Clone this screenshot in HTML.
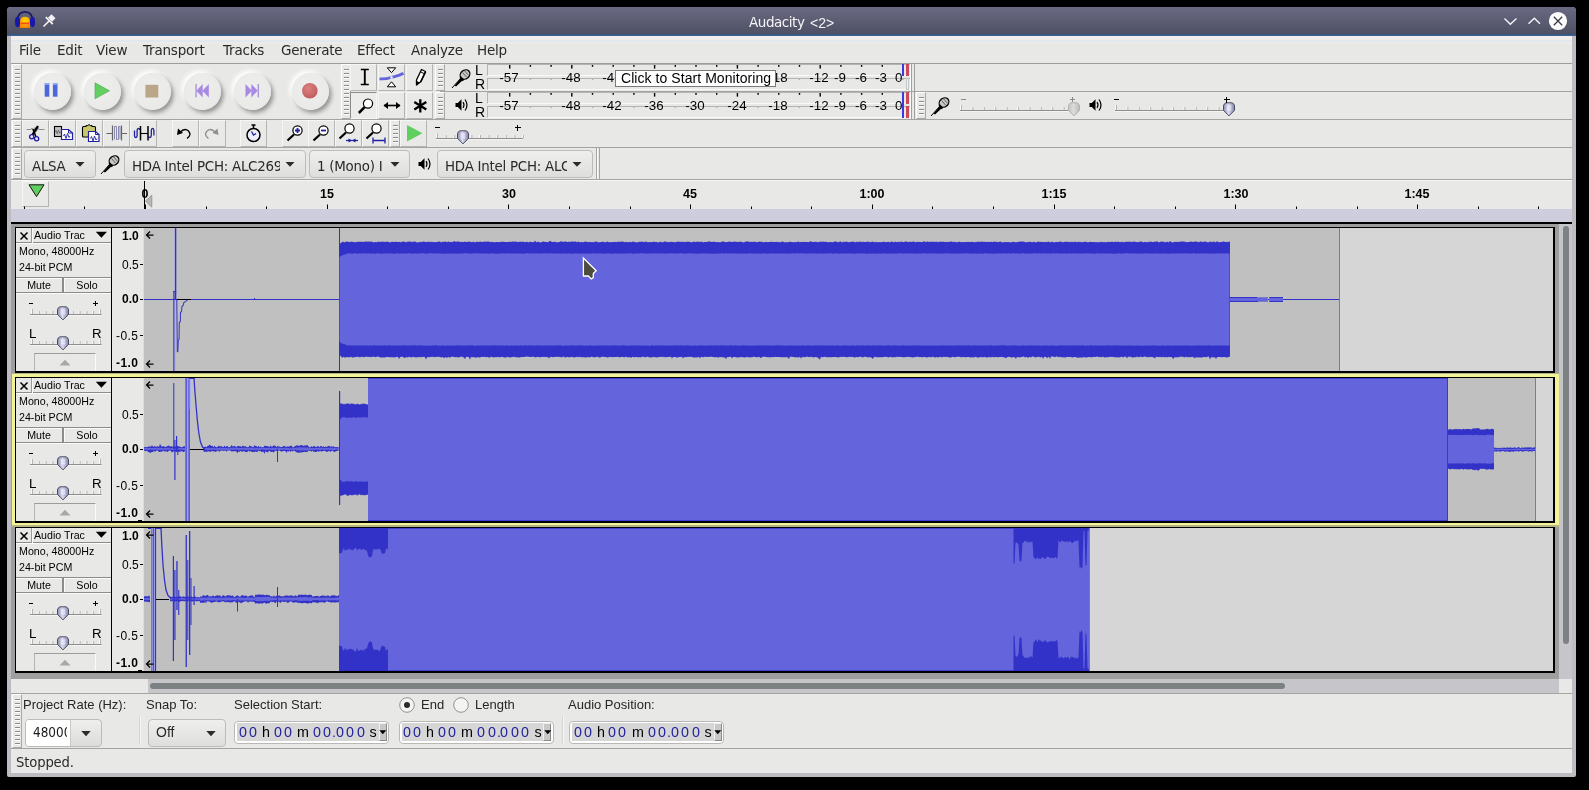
<!DOCTYPE html>
<html><head><meta charset="utf-8"><title>Audacity</title>
<style>
html,body{margin:0;padding:0;background:#000;}
body{width:1589px;height:790px;position:relative;overflow:hidden;font-family:"Liberation Sans",sans-serif;color:#000;}
div,span,svg{position:absolute;box-sizing:border-box;}
span{white-space:nowrap;line-height:1;will-change:transform;}
.dv{font-family:"DejaVu Sans","Liberation Sans",sans-serif;}
.dvc{font-family:"DejaVu Sans Condensed","DejaVu Sans","Liberation Sans",sans-serif;}

.grab{background:repeating-linear-gradient(to bottom,transparent 0,transparent 2px,#8c8c8c 2px,#8c8c8c 3px,#fff 3px,#fff 4px);}
.tb{background:#e9e9e7;border:1px solid #b4b4b2;border-top-color:#f6f6f4;border-left-color:#f6f6f4;}
.combo{border:1px solid #bcbcba;border-radius:4px;background:linear-gradient(#efefed,#dededc);}
.cbtn{border-radius:50%;background:radial-gradient(circle at 42% 42%,#eeeeec 0,#eaeae8 65%,#e0e0de 100%);box-shadow:2.500px 3px 4px rgba(0,0,0,.36),-2.500px -2.500px 4px rgba(255,255,255,.98);}

</style></head><body>
<div style="left:7px;top:7px;width:1569px;height:770px;background:#bcbcc2;border-radius:4px 4px 2px 2px;"></div><div style="left:7px;top:7px;width:1569px;height:27px;background:linear-gradient(#6a6a82,#4e5064);border-radius:4px 4px 0 0;"></div><div style="left:7px;top:33.5px;width:1569px;height:2.5px;background:linear-gradient(#34507c,#41669a);"></div><div style="left:11px;top:36px;width:1561px;height:737px;background:#e8e8e6;"></div><div style="left:11px;top:36px;width:1561px;height:3.5px;background:#f1eeeb;"></div><div style="left:11px;top:39.5px;width:1561px;height:2.6px;background:#dde8f0;"></div><div style="left:11px;top:42.1px;width:1561px;height:1.9px;background:#eeebe7;"></div><span class="dv" style="left:749px;top:16.3px;font-size:13.5px;color:#f4f4f6;letter-spacing:-0.45px;">Audacity</span><span style="left:809.5px;top:15.8px;font-size:14px;color:#f4f4f6;">&lt;2&gt;</span><span class="dv" style="left:19px;top:44px;font-size:13.5px;color:#2a2a2a;letter-spacing:-0.2px;">File</span><span class="dv" style="left:57px;top:44px;font-size:13.5px;color:#2a2a2a;letter-spacing:-0.2px;">Edit</span><span class="dv" style="left:96px;top:44px;font-size:13.5px;color:#2a2a2a;letter-spacing:-0.2px;">View</span><span class="dv" style="left:143px;top:44px;font-size:13.5px;color:#2a2a2a;letter-spacing:-0.2px;">Transport</span><span class="dv" style="left:223px;top:44px;font-size:13.5px;color:#2a2a2a;letter-spacing:-0.2px;">Tracks</span><span class="dv" style="left:281px;top:44px;font-size:13.5px;color:#2a2a2a;letter-spacing:-0.2px;">Generate</span><span class="dv" style="left:357px;top:44px;font-size:13.5px;color:#2a2a2a;letter-spacing:-0.2px;">Effect</span><span class="dv" style="left:411px;top:44px;font-size:13.5px;color:#2a2a2a;letter-spacing:-0.2px;">Analyze</span><span class="dv" style="left:477px;top:44px;font-size:13.5px;color:#2a2a2a;letter-spacing:-0.2px;">Help</span><div style="left:11px;top:62.7px;width:1561px;height:1.5px;background:#9c9c9a;"></div><div style="left:440px;top:91px;width:1132px;height:1px;background:#a4a4a2;"></div><div style="left:11px;top:119px;width:1561px;height:1px;background:#a4a4a2;"></div><div style="left:11px;top:147px;width:1561px;height:1px;background:#a4a4a2;"></div><div style="left:11px;top:179px;width:1561px;height:1px;background:#a4a4a2;"></div><div style="left:12px;top:64px;width:10px;height:55px;border:1px solid #a8a8a6;border-top-color:#fff;border-left-color:#fff;"><div class="grab" style="left:2px;top:2px;width:4.500px;height:49px"></div></div><div style="left:12px;top:120px;width:10px;height:27px;border:1px solid #a8a8a6;border-top-color:#fff;border-left-color:#fff;"><div class="grab" style="left:2px;top:2px;width:4.500px;height:21px"></div></div><div style="left:12px;top:148px;width:10px;height:31px;border:1px solid #a8a8a6;border-top-color:#fff;border-left-color:#fff;"><div class="grab" style="left:2px;top:2px;width:4.500px;height:25px"></div></div><div style="left:341px;top:64px;width:10px;height:55px;border:1px solid #a8a8a6;border-top-color:#fff;border-left-color:#fff;"><div class="grab" style="left:2px;top:2px;width:4.500px;height:49px"></div></div><div style="left:435px;top:64px;width:10px;height:27px;border:1px solid #a8a8a6;border-top-color:#fff;border-left-color:#fff;"><div class="grab" style="left:2px;top:2px;width:4.500px;height:21px"></div></div><div style="left:435px;top:92px;width:10px;height:27px;border:1px solid #a8a8a6;border-top-color:#fff;border-left-color:#fff;"><div class="grab" style="left:2px;top:2px;width:4.500px;height:21px"></div></div><div style="left:916px;top:92px;width:10px;height:27px;border:1px solid #a8a8a6;border-top-color:#fff;border-left-color:#fff;"><div class="grab" style="left:2px;top:2px;width:4.500px;height:21px"></div></div><div style="left:390px;top:120px;width:10px;height:27px;border:1px solid #a8a8a6;border-top-color:#fff;border-left-color:#fff;"><div class="grab" style="left:2px;top:2px;width:4.500px;height:21px"></div></div><div class="cbtn" style="left:34.0px;top:72.5px;width:37px;height:37px;"></div><svg style="left:40.1px;top:79px" width="24" height="24" viewBox="0 0 24 24" ><rect x="4.700" y="4.300" width="4.600" height="13.400" fill="#4a68dc"/><rect x="12.900" y="4.300" width="4.600" height="13.400" fill="#4a68dc"/><rect x="4.700" y="4.300" width="4.600" height="1.500" fill="#9ab4f4"/><rect x="12.900" y="4.300" width="4.600" height="1.500" fill="#9ab4f4"/></svg><div class="cbtn" style="left:84.0px;top:72.5px;width:37px;height:37px;"></div><svg style="left:90.1px;top:79px" width="24" height="24" viewBox="0 0 24 24" ><polygon points="5,3.800 5,19.800 19.500,11.800" fill="#62cf60" stroke="#4aa84a" stroke-width=".6"/></svg><div class="cbtn" style="left:134.0px;top:72.5px;width:37px;height:37px;"></div><svg style="left:140.1px;top:79px" width="24" height="24" viewBox="0 0 24 24" ><rect x="5.400" y="5.800" width="12.900" height="12.700" fill="#baa688"/></svg><div class="cbtn" style="left:184.0px;top:72.5px;width:37px;height:37px;"></div><svg style="left:190.1px;top:79px" width="24" height="24" viewBox="0 0 24 24" ><rect x="5.500" y="5" width="1.100" height="13.400" fill="#9a7cd8"/><polygon points="12.700,5 12.700,18.400 6.300,11.700" fill="#a88ae4"/><polygon points="18.800,5 18.800,18.400 12.400,11.700" fill="#a88ae4"/></svg><div class="cbtn" style="left:234.0px;top:72.5px;width:37px;height:37px;"></div><svg style="left:240.1px;top:79px" width="24" height="24" viewBox="0 0 24 24" ><rect x="17.700" y="5" width="1.100" height="13.400" fill="#9a7cd8"/><polygon points="11.300,5 11.300,18.400 17.700,11.700" fill="#a88ae4"/><polygon points="5.500,5 5.500,18.400 11.900,11.700" fill="#a88ae4"/></svg><div class="cbtn" style="left:292.0px;top:72.5px;width:37px;height:37px;"></div><svg style="left:298.1px;top:79px" width="24" height="24" viewBox="0 0 24 24" ><defs><radialGradient id="rg" cx="40%" cy="35%" r="70%"><stop offset="0" stop-color="#dc8080"/><stop offset="1" stop-color="#c05c5c"/></radialGradient></defs><circle cx="11.800" cy="11.700" r="7.800" fill="url(#rg)"/></svg><div class="tb" style="left:350.3px;top:64px;width:27px;height:27px;"></div><svg style="left:350.3px;top:64px" width="27" height="27" viewBox="0 0 27 27" ><path d="M10.800 5.500h8M10.800 20.500h8" stroke="#000" fill="none" stroke-width="1.300"/><path d="M14.800 5.500v15" stroke="#000" fill="none" stroke-width="1.900"/></svg><div class="tb" style="left:378.2px;top:64px;width:27px;height:27px;"></div><svg style="left:378.2px;top:64px" width="27" height="27" viewBox="0 0 27 27" ><path d="M1.500 14.800 C6 15.300 9 14.800 13 13.500 S20 12.300 25.500 9.300" stroke="#6464dc" stroke-width="2.800" fill="none"/><polygon points="9.300,3.800 17.700,3.800 13.500,8.700" fill="#fff" stroke="#000" stroke-width="1"/><polygon points="9.300,22.800 17.700,22.800 13.500,17.800" fill="#fff" stroke="#000" stroke-width="1"/><circle cx="13.500" cy="13.500" r="1.200" fill="#fff"/></svg><div class="tb" style="left:406px;top:64px;width:27px;height:27px;"></div><svg style="left:406px;top:64px" width="27" height="27" viewBox="0 0 27 27" ><polygon points="10.500,21 14.440,17.910 19.480,7.460 15.520,5.540 10.480,15.990" fill="#fff" stroke="#000" stroke-width="1.300" stroke-linejoin="round"/><polygon points="10.300,21.300 13.600,18.600 10.800,17" fill="#000"/><path d="M18.390 9.710L14.430 7.790" stroke="#000" fill="none" stroke-width="1"/><path d="M14.800 18L19.700 7.800" stroke="#000" fill="none" stroke-width="1.400"/></svg><div class="tb" style="left:350.3px;top:92px;width:27px;height:27px;border-color:#8c8c8a #f6f6f4 #f6f6f4 #8c8c8a;background:#ececea;"></div><svg style="left:350.3px;top:92px" width="27" height="27" viewBox="0 0 27 27" ><circle cx="18" cy="11.600" r="4.600" fill="#fff" stroke="#000" stroke-width="1.200"/><path d="M14.600 15.200l-5.800 5.800" stroke="#000" stroke-width="2.500" stroke-linecap="butt"/></svg><div class="tb" style="left:378.2px;top:92px;width:27px;height:27px;"></div><svg style="left:378.2px;top:92px" width="27" height="27" viewBox="0 0 27 27" ><path d="M6 13.500h16" stroke="#000" fill="none" stroke-width="1.600"/><polygon points="5.500,13.500 10,10 10,17" fill="#000"/><polygon points="22.500,13.500 18,10 18,17" fill="#000"/></svg><div class="tb" style="left:406px;top:92px;width:27px;height:27px;"></div><svg style="left:406px;top:92px" width="27" height="27" viewBox="0 0 27 27" ><path d="M14.300 7.200v13.300M8.300 10l12 7.500M20.300 10l-12 7.500" stroke="#000" fill="none" stroke-width="2.300"/></svg><div style="left:487px;top:64px;width:424px;height:12px;background:#e8e8e6;border-top:1px solid #b4b4b2;border-left:1px solid #b4b4b2;border-bottom:1px solid #fafaf8;"></div><div style="left:487px;top:78px;width:424px;height:12px;background:#e8e8e6;border-top:1px solid #b4b4b2;border-left:1px solid #b4b4b2;border-bottom:1px solid #fafaf8;"></div><svg style="left:487px;top:64px" width="424" height="27" viewBox="0 0 424 27" ><rect x="22.0" y="1" width="1.4" height="3.6" fill="#000"/><rect x="22.0" y="15" width="1.4" height="1" fill="#444" opacity=".35"/><rect x="42.7" y="1" width="1.4" height="1.8" fill="#000"/><rect x="42.7" y="15" width="1.4" height="1" fill="#444" opacity=".35"/><rect x="63.4" y="1" width="1.4" height="1.8" fill="#000"/><rect x="63.4" y="15" width="1.4" height="1" fill="#444" opacity=".35"/><rect x="84.1" y="1" width="1.4" height="3.6" fill="#000"/><rect x="84.1" y="15" width="1.4" height="1" fill="#444" opacity=".35"/><rect x="104.8" y="1" width="1.4" height="1.8" fill="#000"/><rect x="104.8" y="15" width="1.4" height="1" fill="#444" opacity=".35"/><rect x="125.5" y="1" width="1.4" height="1.8" fill="#000"/><rect x="125.5" y="15" width="1.4" height="1" fill="#444" opacity=".35"/><rect x="146.2" y="1" width="1.4" height="1.8" fill="#000"/><rect x="146.2" y="15" width="1.4" height="1" fill="#444" opacity=".35"/><rect x="166.9" y="1" width="1.4" height="3.6" fill="#000"/><rect x="166.9" y="15" width="1.4" height="1" fill="#444" opacity=".35"/><rect x="187.6" y="1" width="1.4" height="1.8" fill="#000"/><rect x="187.6" y="15" width="1.4" height="1" fill="#444" opacity=".35"/><rect x="208.3" y="1" width="1.4" height="1.8" fill="#000"/><rect x="208.3" y="15" width="1.4" height="1" fill="#444" opacity=".35"/><rect x="229.0" y="1" width="1.4" height="1.8" fill="#000"/><rect x="229.0" y="15" width="1.4" height="1" fill="#444" opacity=".35"/><rect x="249.7" y="1" width="1.4" height="3.6" fill="#000"/><rect x="249.7" y="15" width="1.4" height="1" fill="#444" opacity=".35"/><rect x="270.4" y="1" width="1.4" height="1.8" fill="#000"/><rect x="270.4" y="15" width="1.4" height="1" fill="#444" opacity=".35"/><rect x="291.1" y="1" width="1.4" height="1.8" fill="#000"/><rect x="291.1" y="15" width="1.4" height="1" fill="#444" opacity=".35"/><rect x="311.8" y="1" width="1.4" height="1.8" fill="#000"/><rect x="311.8" y="15" width="1.4" height="1" fill="#444" opacity=".35"/><rect x="332.5" y="1" width="1.4" height="3.6" fill="#000"/><rect x="332.5" y="15" width="1.4" height="1" fill="#444" opacity=".35"/><rect x="353.2" y="1" width="1.4" height="1.8" fill="#000"/><rect x="353.2" y="15" width="1.4" height="1" fill="#444" opacity=".35"/><rect x="373.9" y="1" width="1.4" height="1.8" fill="#000"/><rect x="373.9" y="15" width="1.4" height="1" fill="#444" opacity=".35"/><rect x="394.6" y="1" width="1.4" height="1.8" fill="#000"/><rect x="394.6" y="15" width="1.4" height="1" fill="#444" opacity=".35"/><rect x="415.3" y="1" width="1.4" height="3.6" fill="#000"/><rect x="415.3" y="15" width="1.4" height="1" fill="#444" opacity=".35"/></svg><span style="left:508.8px;top:71.1px;font-size:13.33px;transform:translateX(-50%);">-57</span><span style="left:570.9px;top:71.1px;font-size:13.33px;transform:translateX(-50%);">-48</span><span style="left:612.3000000000001px;top:71.1px;font-size:13.33px;transform:translateX(-50%);">-42</span><span style="left:653.7px;top:71.1px;font-size:13.33px;transform:translateX(-50%);">-36</span><span style="left:695.1px;top:71.1px;font-size:13.33px;transform:translateX(-50%);">-30</span><span style="left:736.5px;top:71.1px;font-size:13.33px;transform:translateX(-50%);">-24</span><span style="left:777.9px;top:71.1px;font-size:13.33px;transform:translateX(-50%);">-18</span><span style="left:819.3000000000001px;top:71.1px;font-size:13.33px;transform:translateX(-50%);">-12</span><span style="left:840.0px;top:71.1px;font-size:13.33px;transform:translateX(-50%);">-9</span><span style="left:860.7px;top:71.1px;font-size:13.33px;transform:translateX(-50%);">-6</span><span style="left:881.4px;top:71.1px;font-size:13.33px;transform:translateX(-50%);">-3</span><span style="left:895.2px;top:71.1px;font-size:13.33px;">0</span><span style="left:475px;top:62.8px;font-size:14px;">L</span><span style="left:474.5px;top:76.8px;font-size:14px;">R</span><div style="left:902px;top:64px;width:2px;height:12px;background:#3a3ae0;"></div><div style="left:906px;top:64px;width:3px;height:12px;background:#d04858;"></div><div style="left:906px;top:78px;width:3px;height:12px;background:#f4f4f4;border:1px solid #c0c8c8;"></div><div style="left:910px;top:64px;width:1px;height:27px;background:#fff;"></div><div style="left:911px;top:64px;width:1px;height:27px;background:#a0a09e;"></div><div style="left:487px;top:92px;width:424px;height:12px;background:#e8e8e6;border-top:1px solid #b4b4b2;border-left:1px solid #b4b4b2;border-bottom:1px solid #fafaf8;"></div><div style="left:487px;top:106px;width:424px;height:12px;background:#e8e8e6;border-top:1px solid #b4b4b2;border-left:1px solid #b4b4b2;border-bottom:1px solid #fafaf8;"></div><svg style="left:487px;top:92px" width="424" height="27" viewBox="0 0 424 27" ><rect x="22.0" y="1" width="1.4" height="3.6" fill="#000"/><rect x="22.0" y="15" width="1.4" height="1" fill="#444" opacity=".35"/><rect x="42.7" y="1" width="1.4" height="1.8" fill="#000"/><rect x="42.7" y="15" width="1.4" height="1" fill="#444" opacity=".35"/><rect x="63.4" y="1" width="1.4" height="1.8" fill="#000"/><rect x="63.4" y="15" width="1.4" height="1" fill="#444" opacity=".35"/><rect x="84.1" y="1" width="1.4" height="3.6" fill="#000"/><rect x="84.1" y="15" width="1.4" height="1" fill="#444" opacity=".35"/><rect x="104.8" y="1" width="1.4" height="1.8" fill="#000"/><rect x="104.8" y="15" width="1.4" height="1" fill="#444" opacity=".35"/><rect x="125.5" y="1" width="1.4" height="1.8" fill="#000"/><rect x="125.5" y="15" width="1.4" height="1" fill="#444" opacity=".35"/><rect x="146.2" y="1" width="1.4" height="1.8" fill="#000"/><rect x="146.2" y="15" width="1.4" height="1" fill="#444" opacity=".35"/><rect x="166.9" y="1" width="1.4" height="3.6" fill="#000"/><rect x="166.9" y="15" width="1.4" height="1" fill="#444" opacity=".35"/><rect x="187.6" y="1" width="1.4" height="1.8" fill="#000"/><rect x="187.6" y="15" width="1.4" height="1" fill="#444" opacity=".35"/><rect x="208.3" y="1" width="1.4" height="1.8" fill="#000"/><rect x="208.3" y="15" width="1.4" height="1" fill="#444" opacity=".35"/><rect x="229.0" y="1" width="1.4" height="1.8" fill="#000"/><rect x="229.0" y="15" width="1.4" height="1" fill="#444" opacity=".35"/><rect x="249.7" y="1" width="1.4" height="3.6" fill="#000"/><rect x="249.7" y="15" width="1.4" height="1" fill="#444" opacity=".35"/><rect x="270.4" y="1" width="1.4" height="1.8" fill="#000"/><rect x="270.4" y="15" width="1.4" height="1" fill="#444" opacity=".35"/><rect x="291.1" y="1" width="1.4" height="1.8" fill="#000"/><rect x="291.1" y="15" width="1.4" height="1" fill="#444" opacity=".35"/><rect x="311.8" y="1" width="1.4" height="1.8" fill="#000"/><rect x="311.8" y="15" width="1.4" height="1" fill="#444" opacity=".35"/><rect x="332.5" y="1" width="1.4" height="3.6" fill="#000"/><rect x="332.5" y="15" width="1.4" height="1" fill="#444" opacity=".35"/><rect x="353.2" y="1" width="1.4" height="1.8" fill="#000"/><rect x="353.2" y="15" width="1.4" height="1" fill="#444" opacity=".35"/><rect x="373.9" y="1" width="1.4" height="1.8" fill="#000"/><rect x="373.9" y="15" width="1.4" height="1" fill="#444" opacity=".35"/><rect x="394.6" y="1" width="1.4" height="1.8" fill="#000"/><rect x="394.6" y="15" width="1.4" height="1" fill="#444" opacity=".35"/><rect x="415.3" y="1" width="1.4" height="3.6" fill="#000"/><rect x="415.3" y="15" width="1.4" height="1" fill="#444" opacity=".35"/></svg><span style="left:508.8px;top:99.1px;font-size:13.33px;transform:translateX(-50%);">-57</span><span style="left:570.9px;top:99.1px;font-size:13.33px;transform:translateX(-50%);">-48</span><span style="left:612.3000000000001px;top:99.1px;font-size:13.33px;transform:translateX(-50%);">-42</span><span style="left:653.7px;top:99.1px;font-size:13.33px;transform:translateX(-50%);">-36</span><span style="left:695.1px;top:99.1px;font-size:13.33px;transform:translateX(-50%);">-30</span><span style="left:736.5px;top:99.1px;font-size:13.33px;transform:translateX(-50%);">-24</span><span style="left:777.9px;top:99.1px;font-size:13.33px;transform:translateX(-50%);">-18</span><span style="left:819.3000000000001px;top:99.1px;font-size:13.33px;transform:translateX(-50%);">-12</span><span style="left:840.0px;top:99.1px;font-size:13.33px;transform:translateX(-50%);">-9</span><span style="left:860.7px;top:99.1px;font-size:13.33px;transform:translateX(-50%);">-6</span><span style="left:881.4px;top:99.1px;font-size:13.33px;transform:translateX(-50%);">-3</span><span style="left:895.2px;top:99.1px;font-size:13.33px;">0</span><span style="left:475px;top:90.8px;font-size:14px;">L</span><span style="left:474.5px;top:104.8px;font-size:14px;">R</span><div style="left:902px;top:92px;width:2px;height:26px;background:#3a3ae0;"></div><div style="left:906px;top:92px;width:3px;height:12px;background:#d04858;"></div><div style="left:906px;top:106px;width:3px;height:12px;background:#d04858;"></div><div style="left:910px;top:92px;width:1px;height:27px;background:#fff;"></div><div style="left:911px;top:92px;width:1px;height:27px;background:#a0a09e;"></div><div style="left:914px;top:64px;width:1px;height:56px;background:#a0a09e;"></div><svg style="left:450.5px;top:67.5px" width="20" height="21" viewBox="0 0 20 21" ><g transform="scale(1.0)"><path d="M1 20 L9.5 10.5" stroke="#000" stroke-width="1" fill="none"/><path d="M3.5 17.5 L10.5 9.5 L12.5 11.5 L5 18.5z" fill="#000"/><ellipse cx="14" cy="6.5" rx="5.2" ry="4.3" transform="rotate(-42 14 6.5)" fill="#c8c8c8" stroke="#000" stroke-width="1.3"/><path d="M11.5 4.5l4 4.5M13.5 2.8l4 4.5" stroke="#444" stroke-width=".8"/><path d="M9.3 9.3l3.2 3.2" stroke="#000" stroke-width="2.2"/></g></svg><svg style="left:454.5px;top:98.3px" width="14" height="15" viewBox="0 0 14 15" ><path d="M0.5 5h2.3l3.7-3.7v11.4l-3.7-3.7h-2.3z" fill="#000"/><path d="M8 4.2q2 2.8 0 5.600" stroke="#000" stroke-width="1.2" fill="none"/><path d="M10 1.5q4 5.500 0 11" stroke="#000" stroke-width="1.2" fill="none"/></svg><div style="left:615px;top:69.5px;width:161px;height:17.5px;background:#fff;border:1px solid #7a7a7a;"></div><span style="left:620.5px;top:70.8px;font-size:14px;letter-spacing:.06px;">Click to Start Monitoring</span><svg width="0" height="0" style="left:0;top:0"><defs><linearGradient id="tg" x1="0" x2="1" y1="0" y2="0"><stop offset="0" stop-color="#8e8eb2"/><stop offset=".45" stop-color="#dadaf0"/><stop offset="1" stop-color="#8686aa"/></linearGradient><linearGradient id="tgd" x1="0" x2="1" y1="0" y2="0"><stop offset="0" stop-color="#c4c4c4"/><stop offset=".45" stop-color="#dcdcdc"/><stop offset="1" stop-color="#bcbcbc"/></linearGradient></defs></svg><svg style="left:930px;top:96px" width="20" height="21" viewBox="0 0 20 21" ><g transform="scale(1.0)"><path d="M1 20 L9.5 10.5" stroke="#000" stroke-width="1" fill="none"/><path d="M3.5 17.5 L10.5 9.5 L12.5 11.5 L5 18.5z" fill="#000"/><ellipse cx="14" cy="6.5" rx="5.2" ry="4.3" transform="rotate(-42 14 6.5)" fill="#c8c8c8" stroke="#000" stroke-width="1.3"/><path d="M11.5 4.5l4 4.5M13.5 2.8l4 4.5" stroke="#444" stroke-width=".8"/><path d="M9.3 9.3l3.2 3.2" stroke="#000" stroke-width="2.2"/></g></svg><svg style="left:960px;top:102px" width="117" height="12" viewBox="0 0 117 12" ><rect x="0" y="8" width="115" height="1" fill="#8e8e8c"/><rect x="0" y="9" width="115" height="1" fill="#f4f4f2"/><rect x="0.0" y="3" width="1" height="5" fill="#fbfbf9"/><rect x="1.0" y="3" width="1" height="5" fill="#b4b4b2"/><rect x="11.4" y="5" width="1" height="3" fill="#fbfbf9"/><rect x="12.4" y="5" width="1" height="3" fill="#b4b4b2"/><rect x="22.8" y="5" width="1" height="3" fill="#fbfbf9"/><rect x="23.8" y="5" width="1" height="3" fill="#b4b4b2"/><rect x="34.2" y="5" width="1" height="3" fill="#fbfbf9"/><rect x="35.2" y="5" width="1" height="3" fill="#b4b4b2"/><rect x="45.6" y="5" width="1" height="3" fill="#fbfbf9"/><rect x="46.6" y="5" width="1" height="3" fill="#b4b4b2"/><rect x="57.0" y="5" width="1" height="3" fill="#fbfbf9"/><rect x="58.0" y="5" width="1" height="3" fill="#b4b4b2"/><rect x="68.4" y="5" width="1" height="3" fill="#fbfbf9"/><rect x="69.4" y="5" width="1" height="3" fill="#b4b4b2"/><rect x="79.8" y="5" width="1" height="3" fill="#fbfbf9"/><rect x="80.8" y="5" width="1" height="3" fill="#b4b4b2"/><rect x="91.2" y="5" width="1" height="3" fill="#fbfbf9"/><rect x="92.2" y="5" width="1" height="3" fill="#b4b4b2"/><rect x="102.6" y="5" width="1" height="3" fill="#fbfbf9"/><rect x="103.6" y="5" width="1" height="3" fill="#b4b4b2"/><rect x="114.0" y="5" width="1" height="3" fill="#fbfbf9"/><rect x="115.0" y="5" width="1" height="3" fill="#b4b4b2"/></svg><svg style="left:1068px;top:102px" width="12" height="15" viewBox="0 0 12 15" ><path d="M3 .800h6q2.500 1.200 2.500 3v4.600l-5.500 5.400-5.500-5.400v-4.600q0-1.800 2.500-3z" fill="url(#tgd)" stroke="#b0b0b0" stroke-width="1"/></svg><div style="left:961px;top:99px;width:5px;height:1px;background:#8a8a8a;"></div><div style="left:1070px;top:99px;width:5px;height:1px;background:#8a8a8a;"></div><div style="left:1072px;top:97px;width:1px;height:5px;background:#8a8a8a;"></div><svg style="left:1089px;top:97.5px" width="14" height="15" viewBox="0 0 14 15" ><path d="M0.5 5h2.3l3.7-3.7v11.4l-3.7-3.7h-2.3z" fill="#000"/><path d="M8 4.2q2 2.8 0 5.600" stroke="#000" stroke-width="1.2" fill="none"/><path d="M10 1.5q4 5.500 0 11" stroke="#000" stroke-width="1.2" fill="none"/></svg><svg style="left:1115px;top:102px" width="117" height="12" viewBox="0 0 117 12" ><rect x="0" y="8" width="115" height="1" fill="#8e8e8c"/><rect x="0" y="9" width="115" height="1" fill="#f4f4f2"/><rect x="0.0" y="3" width="1" height="5" fill="#fbfbf9"/><rect x="1.0" y="3" width="1" height="5" fill="#b4b4b2"/><rect x="11.4" y="5" width="1" height="3" fill="#fbfbf9"/><rect x="12.4" y="5" width="1" height="3" fill="#b4b4b2"/><rect x="22.8" y="5" width="1" height="3" fill="#fbfbf9"/><rect x="23.8" y="5" width="1" height="3" fill="#b4b4b2"/><rect x="34.2" y="5" width="1" height="3" fill="#fbfbf9"/><rect x="35.2" y="5" width="1" height="3" fill="#b4b4b2"/><rect x="45.6" y="5" width="1" height="3" fill="#fbfbf9"/><rect x="46.6" y="5" width="1" height="3" fill="#b4b4b2"/><rect x="57.0" y="5" width="1" height="3" fill="#fbfbf9"/><rect x="58.0" y="5" width="1" height="3" fill="#b4b4b2"/><rect x="68.4" y="5" width="1" height="3" fill="#fbfbf9"/><rect x="69.4" y="5" width="1" height="3" fill="#b4b4b2"/><rect x="79.8" y="5" width="1" height="3" fill="#fbfbf9"/><rect x="80.8" y="5" width="1" height="3" fill="#b4b4b2"/><rect x="91.2" y="5" width="1" height="3" fill="#fbfbf9"/><rect x="92.2" y="5" width="1" height="3" fill="#b4b4b2"/><rect x="102.6" y="5" width="1" height="3" fill="#fbfbf9"/><rect x="103.6" y="5" width="1" height="3" fill="#b4b4b2"/><rect x="114.0" y="5" width="1" height="3" fill="#fbfbf9"/><rect x="115.0" y="5" width="1" height="3" fill="#b4b4b2"/></svg><svg style="left:1223px;top:102px" width="12" height="15" viewBox="0 0 12 15" ><path d="M3 .800h6q2.500 1.200 2.500 3v4.600l-5.500 5.400-5.500-5.400v-4.600q0-1.800 2.500-3z" fill="url(#tg)" stroke="#4a4a62" stroke-width="1"/><path d="M3.700 4.200h4.600M3.700 6h4.600M3.700 7.800h4.600" stroke="#f6f6ff" stroke-width=".9"/></svg><div style="left:1114px;top:99px;width:5px;height:1.2px;background:#000;"></div><div style="left:1224px;top:99px;width:5.5px;height:1.1px;background:#000;"></div><div style="left:1226px;top:97px;width:1.1px;height:5.5px;background:#000;"></div><div class="tb" style="left:22px;top:120px;width:27px;height:27px;"></div><svg style="left:22px;top:120px" width="27" height="27" viewBox="0 0 27 27" ><path d="M4.500 9.500h4.500l1-1.500 1.500 3.500 1.500-4 1.500 4 1.500-3.500 1 1.500h5.500" stroke="#777" stroke-width=".8" fill="none"/><path d="M16 6L10.300 15.200" stroke="#000" stroke-width="2.300"/><path d="M11 9l3 8" stroke="#000" stroke-width="1.500"/><circle cx="9.700" cy="16.800" r="2.100" fill="#e8e8f4" stroke="#2020a0" stroke-width="1.300"/><circle cx="14.600" cy="18.800" r="2.100" fill="#e8e8f4" stroke="#2020a0" stroke-width="1.300"/></svg><div class="tb" style="left:49px;top:120px;width:27px;height:27px;"></div><svg style="left:49px;top:120px" width="27" height="27" viewBox="0 0 27 27" ><rect x="5.500" y="6.500" width="7" height="10" fill="#c4c4c4" stroke="#000" stroke-width="1.100"/><path d="M6.3 12l0.8 -1.6l1.2000000000000002 3.6l1.2000000000000002 -4.0l1.2000000000000002 3.2l0.8 -1.2000000000000002" stroke="#666" stroke-width=".9" fill="none"/><path d="M12.500 9.500h7l4 3.500v6.500h-11z" fill="#fff" stroke="#2020a0" stroke-width="1.200"/><path d="M19.500 9.500v3.500h4" fill="none" stroke="#2020a0" stroke-width="1"/><path d="M14.5 16l1 -2l1.5 4.5l1.5 -5l1.5 4l1 -1.5" stroke="#2020a0" stroke-width=".9" fill="none"/></svg><div class="tb" style="left:76px;top:120px;width:27px;height:27px;"></div><svg style="left:76px;top:120px" width="27" height="27" viewBox="0 0 27 27" ><rect x="6.500" y="6.500" width="13" height="10.500" rx="1" fill="#c8c86a" stroke="#000" stroke-width="1.100"/><path d="M10 7v-1.500h1.800q1.200-2 2.400 0h1.800v1.500" fill="#c8c86a" stroke="#000" stroke-width="1"/><path d="M12.500 11.500h7l3.500 3v7h-10.500z" fill="#fff" stroke="#2020a0" stroke-width="1.200"/><path d="M19.500 11.500v3h3.500" fill="none" stroke="#2020a0" stroke-width="1"/><path d="M14.5 18.5l1 -2l1.5 4.5l1.5 -5l1.5 4l1 -1.5" stroke="#2020a0" stroke-width=".9" fill="none"/></svg><div class="tb" style="left:103px;top:120px;width:27px;height:27px;"></div><svg style="left:103px;top:120px" width="27" height="27" viewBox="0 0 27 27" ><path d="M3.500 13.500h6M19 13.500h5" stroke="#666" stroke-width="1"/><path d="M9.500 5.500v15M18.500 5.500v15" stroke="#666" stroke-width="1.200"/><path d="M11.500 19.500V6.500H13.500V19.500H15.500V6.500H17V19" stroke="#8080ac" stroke-width=".9" fill="none"/></svg><div class="tb" style="left:130px;top:120px;width:27px;height:27px;"></div><svg style="left:130px;top:120px" width="27" height="27" viewBox="0 0 27 27" ><path d="M4.500 10.500v5q0 2 1.300 2t1.300-2v-5q0-2 1.300-2t1.300 1.500" stroke="#2020a0" stroke-width="1.300" fill="none"/><path d="M18.800 16.500q0 1 1.200 1t1.300-2v-5q0-2 1.300-2t1.300 2v5" stroke="#2020a0" stroke-width="1.300" fill="none"/><path d="M10.500 6v14.500M18 6v14.500" stroke="#000" stroke-width="1.500"/><path d="M10.500 13.500h7.500" stroke="#000" stroke-width="1.100"/></svg><div class="tb" style="left:172px;top:120px;width:27px;height:27px;"></div><svg style="left:172px;top:120px" width="27" height="27" viewBox="0 0 27 27" ><path d="M8 12.500q4.500-5 8.500-1.500q3.500 4-1.500 7.500" stroke="#000" stroke-width="1.300" fill="none"/><polygon points="5,15 6,8.500 11,13" fill="#000"/></svg><div class="tb" style="left:199px;top:120px;width:27px;height:27px;"></div><svg style="left:199px;top:120px" width="27" height="27" viewBox="0 0 27 27" ><g transform="translate(-2.500,0)"><path d="M19 12.500q-4.500-5-8.500-1.500q-3.500 4 1.500 7.500" stroke="#909090" stroke-width="1.300" fill="none"/><polygon points="22,15 21,8.500 16,13" fill="#909090"/></g></svg><div class="tb" style="left:240px;top:120px;width:27px;height:27px;"></div><svg style="left:240px;top:120px" width="27" height="27" viewBox="0 0 27 27" ><circle cx="13.500" cy="15" r="6.500" fill="#eeeefa" stroke="#000" stroke-width="1.500"/><path d="M13.500 8.500v-3M11.500 5h4" stroke="#000" stroke-width="1.600"/><path d="M11.500 11.500l2 3.500 2.500-1.500" stroke="#2020a0" stroke-width="1.300" fill="none"/></svg><div class="tb" style="left:281.5px;top:120px;width:27px;height:27px;"></div><svg style="left:281.5px;top:120px" width="27" height="27" viewBox="0 0 27 27" ><g transform="translate(-2,1)"><circle cx="17.500" cy="9.500" r="4.600" fill="#fff" stroke="#000" stroke-width="1.200"/><path d="M14 13.500l-6.500 6" stroke="#000" stroke-width="2.300" stroke-linecap="butt"/><path d="M15 9.500h5M17.500 7v5" stroke="#2020a0" stroke-width="1.800"/></g></svg><div class="tb" style="left:308.2px;top:120px;width:27px;height:27px;"></div><svg style="left:308.2px;top:120px" width="27" height="27" viewBox="0 0 27 27" ><g transform="translate(-2,1)"><circle cx="17.500" cy="9.500" r="4.600" fill="#fff" stroke="#000" stroke-width="1.200"/><path d="M14 13.500l-6.500 6" stroke="#000" stroke-width="2.300" stroke-linecap="butt"/><path d="M15 9.500h5" stroke="#2020a0" stroke-width="1.800"/></g></svg><div class="tb" style="left:334.9px;top:120px;width:27px;height:27px;"></div><svg style="left:334.9px;top:120px" width="27" height="27" viewBox="0 0 27 27" ><g transform="translate(0,0)"><circle cx="14.500" cy="8.500" r="4.600" fill="#fff" stroke="#000" stroke-width="1.200"/><path d="M11 12.500l-6.500 6" stroke="#000" stroke-width="2.300"/><path d="M11 20.500h12" stroke="#2020a0" stroke-width="1.200"/><polygon points="17,20.500 13.500,18.500 13.500,22.500" fill="#2020a0"/><polygon points="17,20.500 20.500,18.500 20.500,22.500" fill="#2020a0"/></g></svg><div class="tb" style="left:361.6px;top:120px;width:27px;height:27px;"></div><svg style="left:361.6px;top:120px" width="27" height="27" viewBox="0 0 27 27" ><g transform="translate(0,0)"><circle cx="14.500" cy="8.500" r="4.600" fill="#fff" stroke="#000" stroke-width="1.200"/><path d="M11 12.500l-6.500 6" stroke="#000" stroke-width="2.300"/><path d="M11 20.500h12M11 17.500v6M23 17.500v6" stroke="#2020a0" stroke-width="1.300"/></g></svg><div class="tb" style="left:400px;top:120px;width:27px;height:27px;"></div><svg style="left:400px;top:120px" width="27" height="27" viewBox="0 0 27 27" ><polygon points="7,5 7,21.500 22.500,13.200" fill="#5fcf5f"/></svg><svg style="left:436px;top:130px" width="89" height="12" viewBox="0 0 89 12" ><rect x="0" y="8" width="87" height="1" fill="#8e8e8c"/><rect x="0" y="9" width="87" height="1" fill="#f4f4f2"/><rect x="0.0" y="3" width="1" height="5" fill="#fbfbf9"/><rect x="1.0" y="3" width="1" height="5" fill="#b4b4b2"/><rect x="8.6" y="5" width="1" height="3" fill="#fbfbf9"/><rect x="9.6" y="5" width="1" height="3" fill="#b4b4b2"/><rect x="17.2" y="5" width="1" height="3" fill="#fbfbf9"/><rect x="18.2" y="5" width="1" height="3" fill="#b4b4b2"/><rect x="25.8" y="5" width="1" height="3" fill="#fbfbf9"/><rect x="26.8" y="5" width="1" height="3" fill="#b4b4b2"/><rect x="34.4" y="5" width="1" height="3" fill="#fbfbf9"/><rect x="35.4" y="5" width="1" height="3" fill="#b4b4b2"/><rect x="43.0" y="5" width="1" height="3" fill="#fbfbf9"/><rect x="44.0" y="5" width="1" height="3" fill="#b4b4b2"/><rect x="51.6" y="5" width="1" height="3" fill="#fbfbf9"/><rect x="52.6" y="5" width="1" height="3" fill="#b4b4b2"/><rect x="60.2" y="5" width="1" height="3" fill="#fbfbf9"/><rect x="61.2" y="5" width="1" height="3" fill="#b4b4b2"/><rect x="68.8" y="5" width="1" height="3" fill="#fbfbf9"/><rect x="69.8" y="5" width="1" height="3" fill="#b4b4b2"/><rect x="77.4" y="5" width="1" height="3" fill="#fbfbf9"/><rect x="78.4" y="5" width="1" height="3" fill="#b4b4b2"/><rect x="86.0" y="5" width="1" height="3" fill="#fbfbf9"/><rect x="87.0" y="5" width="1" height="3" fill="#b4b4b2"/></svg><svg style="left:457px;top:130px" width="12" height="15" viewBox="0 0 12 15" ><path d="M3 .800h6q2.500 1.200 2.500 3v4.600l-5.500 5.400-5.500-5.400v-4.600q0-1.800 2.500-3z" fill="url(#tg)" stroke="#4a4a62" stroke-width="1"/><path d="M3.700 4.200h4.600M3.700 6h4.600M3.700 7.800h4.600" stroke="#f6f6ff" stroke-width=".9"/></svg><div style="left:435px;top:127px;width:5px;height:1px;background:#000;"></div><div style="left:514.5px;top:127px;width:6px;height:1px;background:#000;"></div><div style="left:517px;top:124.5px;width:1px;height:6px;background:#000;"></div><div class="combo" style="left:24px;top:150px;width:72px;height:27.5px;"></div><div style="left:32.3px;top:150px;width:40px;height:27.5px;overflow:hidden"><span class="dv" style="left:0;top:8.6px;font-size:13.4px;line-height:1.160;color:#2a2a2a;letter-spacing:-0.250px">ALSA</span></div><svg style="left:74.5px;top:162.25px" width="10" height="6" viewBox="0 0 10 6" ><polygon points="0.500,0 9.500,0 5,4.800" fill="#2c2c2c"/></svg><svg style="left:100px;top:154px" width="20" height="21" viewBox="0 0 20 21" ><g transform="scale(1.0)"><path d="M1 20 L9.5 10.5" stroke="#000" stroke-width="1" fill="none"/><path d="M3.5 17.5 L10.5 9.5 L12.5 11.5 L5 18.5z" fill="#000"/><ellipse cx="14" cy="6.5" rx="5.2" ry="4.3" transform="rotate(-42 14 6.5)" fill="#c8c8c8" stroke="#000" stroke-width="1.3"/><path d="M11.5 4.5l4 4.5M13.5 2.8l4 4.5" stroke="#444" stroke-width=".8"/><path d="M9.3 9.3l3.2 3.2" stroke="#000" stroke-width="2.2"/></g></svg><div class="combo" style="left:123.5px;top:150px;width:182px;height:27.5px;"></div><div style="left:131.8px;top:150px;width:148px;height:27.5px;overflow:hidden"><span class="dv" style="left:0;top:8.6px;font-size:13.4px;line-height:1.160;color:#2a2a2a;letter-spacing:-0.250px">HDA Intel PCH: ALC269</span></div><svg style="left:285px;top:162.25px" width="10" height="6" viewBox="0 0 10 6" ><polygon points="0.500,0 9.500,0 5,4.800" fill="#2c2c2c"/></svg><div class="combo" style="left:308.5px;top:150px;width:101px;height:27.5px;"></div><div style="left:316.8px;top:150px;width:66.3px;height:27.5px;overflow:hidden"><span class="dv" style="left:0;top:8.6px;font-size:13.4px;line-height:1.160;color:#2a2a2a;letter-spacing:-0.250px">1 (Mono) Input Channel</span></div><svg style="left:389.5px;top:162.25px" width="10" height="6" viewBox="0 0 10 6" ><polygon points="0.500,0 9.500,0 5,4.800" fill="#2c2c2c"/></svg><svg style="left:417.5px;top:156.5px" width="14" height="15" viewBox="0 0 14 15" ><path d="M0.5 5h2.3l3.7-3.7v11.4l-3.7-3.7h-2.3z" fill="#000"/><path d="M8 4.2q2 2.8 0 5.600" stroke="#000" stroke-width="1.2" fill="none"/><path d="M10 1.5q4 5.500 0 11" stroke="#000" stroke-width="1.2" fill="none"/></svg><div class="combo" style="left:437px;top:150px;width:155.5px;height:27.5px;"></div><div style="left:445.3px;top:150px;width:121.5px;height:27.5px;overflow:hidden"><span class="dv" style="left:0;top:8.6px;font-size:13.4px;line-height:1.160;color:#2a2a2a;letter-spacing:-0.250px">HDA Intel PCH: ALC269</span></div><svg style="left:571.5px;top:162.25px" width="10" height="6" viewBox="0 0 10 6" ><polygon points="0.500,0 9.500,0 5,4.800" fill="#2c2c2c"/></svg><div style="left:596px;top:148px;width:1px;height:31px;background:#a4a4a2;"></div><div style="left:597px;top:148px;width:1px;height:31px;background:#fbfbf9;"></div><div style="left:599px;top:148px;width:1px;height:31px;background:#a4a4a2;"></div><div style="left:11px;top:180px;width:1561px;height:29px;background:#e8e8e6;"></div><div style="left:11px;top:180px;width:1561px;height:1px;background:#f6f6f4;"></div><div class="tb" style="left:22px;top:181px;width:27px;height:26px;"></div><svg style="left:22px;top:181px" width="27" height="26" viewBox="0 0 27 26" ><polygon points="7,3.800 22,3.800 14.500,15.600" fill="#5fcf5f" stroke="#111" stroke-width="1"/></svg><svg style="left:11px;top:181px" width="1561" height="28" viewBox="0 0 1561 28" ><rect x="13" y="25.5" width="1" height="2.5" fill="#000"/><rect x="73" y="25.5" width="1" height="2.5" fill="#000"/><rect x="134" y="23.5" width="1" height="4.5" fill="#000"/><rect x="195" y="25.5" width="1" height="2.5" fill="#000"/><rect x="255" y="25.5" width="1" height="2.5" fill="#000"/><rect x="316" y="23.5" width="1" height="4.5" fill="#000"/><rect x="376" y="25.5" width="1" height="2.5" fill="#000"/><rect x="437" y="25.5" width="1" height="2.5" fill="#000"/><rect x="497" y="23.5" width="1" height="4.5" fill="#000"/><rect x="558" y="25.5" width="1" height="2.5" fill="#000"/><rect x="619" y="25.5" width="1" height="2.5" fill="#000"/><rect x="679" y="23.5" width="1" height="4.5" fill="#000"/><rect x="740" y="25.5" width="1" height="2.5" fill="#000"/><rect x="800" y="25.5" width="1" height="2.5" fill="#000"/><rect x="861" y="23.5" width="1" height="4.5" fill="#000"/><rect x="921" y="25.5" width="1" height="2.5" fill="#000"/><rect x="982" y="25.5" width="1" height="2.5" fill="#000"/><rect x="1043" y="23.5" width="1" height="4.5" fill="#000"/><rect x="1103" y="25.5" width="1" height="2.5" fill="#000"/><rect x="1164" y="25.5" width="1" height="2.5" fill="#000"/><rect x="1224" y="23.5" width="1" height="4.5" fill="#000"/><rect x="1285" y="25.5" width="1" height="2.5" fill="#000"/><rect x="1346" y="25.5" width="1" height="2.5" fill="#000"/><rect x="1406" y="23.5" width="1" height="4.5" fill="#000"/><rect x="1467" y="25.5" width="1" height="2.5" fill="#000"/><rect x="1527" y="25.5" width="1" height="2.5" fill="#000"/></svg><span style="left:145.2px;top:187.6px;font-size:12.500px;font-weight:bold;transform:translateX(-50%);">0</span><span style="left:326.92999999999995px;top:187.6px;font-size:12.500px;font-weight:bold;transform:translateX(-50%);">15</span><span style="left:508.65999999999997px;top:187.6px;font-size:12.500px;font-weight:bold;transform:translateX(-50%);">30</span><span style="left:690.3899999999999px;top:187.6px;font-size:12.500px;font-weight:bold;transform:translateX(-50%);">45</span><span style="left:872.1199999999999px;top:187.6px;font-size:12.500px;font-weight:bold;transform:translateX(-50%);">1:00</span><span style="left:1053.85px;top:187.6px;font-size:12.500px;font-weight:bold;transform:translateX(-50%);">1:15</span><span style="left:1235.58px;top:187.6px;font-size:12.500px;font-weight:bold;transform:translateX(-50%);">1:30</span><span style="left:1417.31px;top:187.6px;font-size:12.500px;font-weight:bold;transform:translateX(-50%);">1:45</span><div style="left:144px;top:181px;width:1.2px;height:28px;background:#000;"></div><svg style="left:145px;top:194px" width="8" height="15" viewBox="0 0 8 15" ><polygon points="0.500,7 6.800,1.200 6.800,13.200" fill="#b8b8b8" stroke="#909090" stroke-width=".8"/></svg><div style="left:11px;top:209px;width:1561px;height:13px;background:#cdcdde;"></div><div style="left:11px;top:222px;width:1548px;height:457px;background:#9e9e9e;"></div><div style="left:11px;top:222px;width:1561px;height:2px;background:#000;"></div><div style="left:1559px;top:224px;width:13px;height:455px;background:#c6c6ca;"></div><div style="left:1563px;top:226px;width:6px;height:418px;background:#7c8282;border-radius:3px;"></div><div style="left:15px;top:227px;width:1540px;height:146px;background:#000;"></div><div style="left:16px;top:228px;width:95px;height:143px;background:#e8e8e6;"></div><div style="left:112px;top:228px;width:32px;height:143px;background:#e8e8e6;"></div><div style="left:143px;top:228px;width:1px;height:143px;background:#dcdcda;"></div><div style="left:16px;top:228px;width:95px;height:15px;border-bottom:1px solid #8c8c8c;"></div><div style="left:16px;top:243px;width:95px;height:1px;background:#fbfbf9;"></div><div style="left:31px;top:228px;width:1px;height:15px;background:#9a9a9a;"></div><div style="left:32px;top:228px;width:1px;height:15px;background:#fbfbf9;"></div><svg style="left:18px;top:230px" width="12" height="12" viewBox="0 0 12 12" ><path d="M2.500 2.500l7 7M9.500 2.500l-7 7" stroke="#000" stroke-width="1.500"/></svg><span style="left:34px;top:230.3px;font-size:10.670px;">Audio Trac</span><svg style="left:95px;top:231px" width="13" height="8" viewBox="0 0 13 8" ><polygon points="0.800,0.800 12,0.800 6.400,6.800" fill="#000"/></svg><span style="left:19px;top:245.8px;font-size:10.670px;">Mono, 48000Hz</span><span style="left:19px;top:261.5px;font-size:10.670px;">24-bit PCM</span><div style="left:16px;top:277px;width:95px;height:1px;background:#8c8c8c;"></div><div style="left:16px;top:278px;width:95px;height:14px;background:#e8e8e6;border-top:1px solid #fbfbf9;"></div><div style="left:16px;top:292px;width:95px;height:1px;background:#8c8c8c;"></div><div style="left:16px;top:293px;width:95px;height:1px;background:#fbfbf9;"></div><div style="left:62px;top:278px;width:1.5px;height:14px;background:#8c8c8c;"></div><div style="left:63.5px;top:278px;width:1px;height:14px;background:#fbfbf9;"></div><span style="left:39.3px;top:280px;font-size:10.670px;transform:translateX(-50%);">Mute</span><span style="left:86.5px;top:280px;font-size:10.670px;transform:translateX(-50%);">Solo</span><svg style="left:29.5px;top:306px" width="73.5" height="12" viewBox="0 0 73.5 12" ><rect x="0" y="8" width="71.5" height="1" fill="#8e8e8c"/><rect x="0" y="9" width="71.5" height="1" fill="#f4f4f2"/><rect x="1.0" y="3" width="1" height="5" fill="#fbfbf9"/><rect x="2.0" y="3" width="1" height="5" fill="#b4b4b2"/><rect x="7.8" y="5" width="1" height="3" fill="#fbfbf9"/><rect x="8.8" y="5" width="1" height="3" fill="#b4b4b2"/><rect x="14.6" y="5" width="1" height="3" fill="#fbfbf9"/><rect x="15.6" y="5" width="1" height="3" fill="#b4b4b2"/><rect x="21.4" y="5" width="1" height="3" fill="#fbfbf9"/><rect x="22.4" y="5" width="1" height="3" fill="#b4b4b2"/><rect x="28.2" y="5" width="1" height="3" fill="#fbfbf9"/><rect x="29.2" y="5" width="1" height="3" fill="#b4b4b2"/><rect x="35.0" y="5" width="1" height="3" fill="#fbfbf9"/><rect x="36.0" y="5" width="1" height="3" fill="#b4b4b2"/><rect x="41.8" y="5" width="1" height="3" fill="#fbfbf9"/><rect x="42.8" y="5" width="1" height="3" fill="#b4b4b2"/><rect x="48.6" y="5" width="1" height="3" fill="#fbfbf9"/><rect x="49.6" y="5" width="1" height="3" fill="#b4b4b2"/><rect x="55.4" y="5" width="1" height="3" fill="#fbfbf9"/><rect x="56.4" y="5" width="1" height="3" fill="#b4b4b2"/><rect x="62.2" y="5" width="1" height="3" fill="#fbfbf9"/><rect x="63.2" y="5" width="1" height="3" fill="#b4b4b2"/><rect x="69.0" y="3" width="1" height="5" fill="#fbfbf9"/><rect x="70.0" y="3" width="1" height="5" fill="#b4b4b2"/></svg><svg style="left:57.3px;top:306px" width="12" height="15" viewBox="0 0 12 15" ><path d="M3 .800h6q2.500 1.200 2.500 3v4.600l-5.500 5.400-5.500-5.400v-4.600q0-1.800 2.500-3z" fill="url(#tg)" stroke="#4a4a62" stroke-width="1"/><path d="M3.700 4.200h4.600M3.700 6h4.600M3.700 7.800h4.600" stroke="#f6f6ff" stroke-width=".9"/></svg><div style="left:29px;top:302.5px;width:4px;height:1px;background:#000;"></div><div style="left:93px;top:302.5px;width:5px;height:1px;background:#000;"></div><div style="left:95px;top:300.5px;width:1px;height:5px;background:#000;"></div><svg style="left:29.5px;top:336.3px" width="73.5" height="12" viewBox="0 0 73.5 12" ><rect x="0" y="8" width="71.5" height="1" fill="#8e8e8c"/><rect x="0" y="9" width="71.5" height="1" fill="#f4f4f2"/><rect x="1.0" y="3" width="1" height="5" fill="#fbfbf9"/><rect x="2.0" y="3" width="1" height="5" fill="#b4b4b2"/><rect x="7.8" y="5" width="1" height="3" fill="#fbfbf9"/><rect x="8.8" y="5" width="1" height="3" fill="#b4b4b2"/><rect x="14.6" y="5" width="1" height="3" fill="#fbfbf9"/><rect x="15.6" y="5" width="1" height="3" fill="#b4b4b2"/><rect x="21.4" y="5" width="1" height="3" fill="#fbfbf9"/><rect x="22.4" y="5" width="1" height="3" fill="#b4b4b2"/><rect x="28.2" y="5" width="1" height="3" fill="#fbfbf9"/><rect x="29.2" y="5" width="1" height="3" fill="#b4b4b2"/><rect x="35.0" y="5" width="1" height="3" fill="#fbfbf9"/><rect x="36.0" y="5" width="1" height="3" fill="#b4b4b2"/><rect x="41.8" y="5" width="1" height="3" fill="#fbfbf9"/><rect x="42.8" y="5" width="1" height="3" fill="#b4b4b2"/><rect x="48.6" y="5" width="1" height="3" fill="#fbfbf9"/><rect x="49.6" y="5" width="1" height="3" fill="#b4b4b2"/><rect x="55.4" y="5" width="1" height="3" fill="#fbfbf9"/><rect x="56.4" y="5" width="1" height="3" fill="#b4b4b2"/><rect x="62.2" y="5" width="1" height="3" fill="#fbfbf9"/><rect x="63.2" y="5" width="1" height="3" fill="#b4b4b2"/><rect x="69.0" y="3" width="1" height="5" fill="#fbfbf9"/><rect x="70.0" y="3" width="1" height="5" fill="#b4b4b2"/></svg><svg style="left:57.3px;top:336.3px" width="12" height="15" viewBox="0 0 12 15" ><path d="M3 .800h6q2.500 1.200 2.500 3v4.600l-5.500 5.400-5.500-5.400v-4.600q0-1.800 2.500-3z" fill="url(#tg)" stroke="#4a4a62" stroke-width="1"/><path d="M3.700 4.200h4.600M3.700 6h4.600M3.700 7.800h4.600" stroke="#f6f6ff" stroke-width=".9"/></svg><span style="left:29.2px;top:327.3px;font-size:13.330px;">L</span><span style="left:91.5px;top:327.3px;font-size:13.330px;">R</span><div style="left:34px;top:353px;width:62px;height:18px;background:#e8e8e6;border:1px solid #fbfbf9;border-top-color:#9c9c9a;border-left-color:#b4b4b2;border-bottom:none;"></div><svg style="left:59px;top:359px" width="12" height="7" viewBox="0 0 12 7" ><polygon points="0.500,6.500 11.500,6.500 6,0.800" fill="#a8a8a8"/></svg><span style="left:0px;top:230px;font-size:12px;left:auto;right:1450.7px;font-weight:bold;">1.0</span><span style="left:0px;top:258.7px;font-size:12px;left:auto;right:1450.7px;">0.5</span><span style="left:0px;top:293.4px;font-size:12px;left:auto;right:1450.7px;font-weight:bold;">0.0</span><span style="left:0px;top:330px;font-size:12px;left:auto;right:1450.3px;letter-spacing:0.400px;">-0.5</span><span style="left:0px;top:357.2px;font-size:12px;left:auto;right:1450.3px;font-weight:bold;letter-spacing:0.400px;">-1.0</span><div style="left:140px;top:264px;width:3px;height:1px;background:#000;"></div><div style="left:140px;top:299.3px;width:3px;height:1px;background:#000;"></div><div style="left:140px;top:334.5px;width:3px;height:1px;background:#000;"></div><svg style="left:144px;top:228px" width="1409" height="143" viewBox="144 228 1409 143" shape-rendering="auto"><rect x="144" y="228" width="1195" height="143" fill="#c0c0c0"/><rect x="1339" y="228" width="214" height="143" fill="#d6d6d6"/><rect x="1339" y="228" width="1" height="143" fill="#7e7e7e"/><rect x="144" y="299" width="195" height="1" fill="#3232c8"/><rect x="175" y="228" width="1.3" height="72" fill="#3232c8"/><rect x="174.2" y="228" width="0.8" height="64" fill="#a4a4e4"/><rect x="173.3" y="291" width="1.3" height="80" fill="#3232c8"/><rect x="173.3" y="291" width="3" height="1" fill="#3232c8"/><rect x="174.6" y="300" width="0.7" height="71" fill="#a4a4e4"/><path d="M176.800 300 L177.300 352 L177.800 352 L178.300 340 L179 340 L179.300 322 L180.300 322 L180.500 312 L181.500 312 L182 306 L183 306 L184 302 L185.500 302 L187 300 L188.500 299.500" stroke="#3232c8" stroke-width="1" fill="none"/><rect x="177" y="299" width="14" height="1" fill="#000"/><rect x="254" y="298" width="1" height="1.5" fill="#3232c8"/><rect x="339" y="228" width="1" height="143" fill="#3232c8"/><polygon points="339.0,244.8 340.0,243.8 341.0,242.7 342.0,242.3 343.0,241.4 344.0,242.2 345.0,242.2 346.0,241.6 347.0,241.7 348.0,241.4 349.0,242.2 350.0,242.0 351.0,241.6 352.0,241.9 353.0,241.8 354.0,242.1 355.0,242.2 356.0,242.2 357.0,241.7 358.0,242.0 359.0,241.6 360.0,242.0 361.0,241.4 362.0,242.1 363.0,241.8 364.0,241.9 365.0,241.5 366.0,241.6 367.0,241.5 368.0,241.8 369.0,241.4 370.0,241.6 371.0,241.7 372.0,241.5 373.0,242.2 374.0,242.3 375.0,242.3 376.0,241.7 377.0,242.4 378.0,241.4 379.0,241.7 380.0,241.9 381.0,241.7 382.0,241.7 383.0,241.6 384.0,242.0 385.0,241.8 386.0,242.0 387.0,241.6 388.0,241.8 389.0,241.9 390.0,242.4 391.0,242.2 392.0,241.5 393.0,242.0 394.0,242.0 395.0,241.9 396.0,241.4 397.0,242.1 398.0,241.9 399.0,241.9 400.0,241.7 401.0,242.4 402.0,241.6 403.0,241.8 404.0,241.6 405.0,241.9 406.0,242.2 407.0,241.9 408.0,241.6 409.0,241.7 410.0,241.5 411.0,241.6 412.0,242.2 413.0,241.7 414.0,241.4 415.0,241.5 416.0,242.0 417.0,242.4 418.0,242.2 419.0,242.3 420.0,241.7 421.0,242.3 422.0,241.7 423.0,241.8 424.0,241.5 425.0,241.9 426.0,241.9 427.0,242.0 428.0,241.7 429.0,241.4 430.0,242.3 431.0,241.9 432.0,241.5 433.0,242.2 434.0,242.0 435.0,242.3 436.0,241.9 437.0,241.9 438.0,241.8 439.0,241.5 440.0,241.5 441.0,242.2 442.0,242.2 443.0,241.6 444.0,242.0 445.0,241.5 446.0,241.6 447.0,242.3 448.0,241.8 449.0,241.6 450.0,242.3 451.0,242.1 452.0,241.8 453.0,242.2 454.0,240.8 455.0,241.6 456.0,242.0 457.0,241.6 458.0,241.6 459.0,241.5 460.0,242.0 461.0,241.9 462.0,241.8 463.0,242.1 464.0,242.0 465.0,241.6 466.0,242.1 467.0,242.0 468.0,241.8 469.0,241.4 470.0,241.8 471.0,241.9 472.0,242.3 473.0,241.8 474.0,241.8 475.0,242.4 476.0,242.0 477.0,241.4 478.0,242.0 479.0,241.9 480.0,241.4 481.0,241.8 482.0,241.9 483.0,241.9 484.0,241.6 485.0,241.7 486.0,241.6 487.0,241.7 488.0,241.6 489.0,241.5 490.0,242.0 491.0,242.3 492.0,241.8 493.0,242.1 494.0,242.3 495.0,242.2 496.0,242.0 497.0,241.9 498.0,242.0 499.0,242.3 500.0,242.1 501.0,241.7 502.0,241.7 503.0,241.7 504.0,241.8 505.0,242.0 506.0,242.0 507.0,242.0 508.0,242.0 509.0,241.9 510.0,241.6 511.0,241.9 512.0,241.7 513.0,241.6 514.0,241.5 515.0,241.7 516.0,241.6 517.0,242.1 518.0,241.9 519.0,242.0 520.0,241.6 521.0,241.8 522.0,242.0 523.0,241.4 524.0,242.0 525.0,242.1 526.0,242.2 527.0,241.5 528.0,242.2 529.0,242.2 530.0,241.6 531.0,241.9 532.0,242.1 533.0,242.2 534.0,242.0 535.0,240.4 536.0,242.0 537.0,242.2 538.0,241.5 539.0,242.1 540.0,242.4 541.0,242.3 542.0,241.9 543.0,241.5 544.0,241.5 545.0,241.9 546.0,242.1 547.0,241.9 548.0,242.3 549.0,241.6 550.0,240.7 551.0,241.6 552.0,242.0 553.0,242.0 554.0,241.7 555.0,241.7 556.0,242.3 557.0,242.2 558.0,242.3 559.0,242.0 560.0,241.9 561.0,241.1 562.0,241.7 563.0,241.8 564.0,241.7 565.0,241.6 566.0,241.6 567.0,241.9 568.0,241.9 569.0,241.5 570.0,242.2 571.0,241.5 572.0,241.4 573.0,241.8 574.0,241.4 575.0,241.6 576.0,241.8 577.0,242.3 578.0,241.5 579.0,241.7 580.0,242.4 581.0,242.0 582.0,242.1 583.0,242.4 584.0,241.8 585.0,241.7 586.0,241.4 587.0,242.0 588.0,241.9 589.0,242.3 590.0,241.8 591.0,242.3 592.0,242.0 593.0,242.2 594.0,242.3 595.0,241.5 596.0,241.7 597.0,241.6 598.0,242.4 599.0,242.3 600.0,242.0 601.0,242.1 602.0,241.9 603.0,241.5 604.0,241.9 605.0,242.2 606.0,242.3 607.0,241.5 608.0,241.7 609.0,242.2 610.0,242.2 611.0,242.0 612.0,242.2 613.0,242.1 614.0,242.0 615.0,241.8 616.0,242.3 617.0,242.1 618.0,241.4 619.0,242.0 620.0,241.8 621.0,241.6 622.0,241.7 623.0,241.6 624.0,242.0 625.0,242.2 626.0,241.9 627.0,241.8 628.0,242.4 629.0,242.1 630.0,241.8 631.0,242.3 632.0,241.9 633.0,241.6 634.0,241.7 635.0,242.0 636.0,242.4 637.0,242.3 638.0,242.2 639.0,242.1 640.0,241.4 641.0,242.1 642.0,241.5 643.0,241.8 644.0,242.3 645.0,241.8 646.0,241.6 647.0,242.1 648.0,242.2 649.0,242.0 650.0,242.2 651.0,242.0 652.0,242.0 653.0,242.0 654.0,241.6 655.0,242.1 656.0,242.1 657.0,242.0 658.0,242.4 659.0,242.3 660.0,241.7 661.0,241.7 662.0,242.2 663.0,242.4 664.0,241.6 665.0,241.5 666.0,241.4 667.0,242.3 668.0,242.0 669.0,242.2 670.0,241.7 671.0,242.0 672.0,241.8 673.0,242.3 674.0,241.8 675.0,242.4 676.0,242.1 677.0,241.8 678.0,241.5 679.0,242.0 680.0,241.5 681.0,242.3 682.0,241.4 683.0,241.7 684.0,242.2 685.0,241.8 686.0,242.1 687.0,241.7 688.0,241.6 689.0,241.8 690.0,241.9 691.0,242.2 692.0,242.3 693.0,241.9 694.0,241.5 695.0,241.9 696.0,242.1 697.0,241.6 698.0,242.0 699.0,241.6 700.0,242.2 701.0,241.4 702.0,241.8 703.0,242.4 704.0,242.1 705.0,242.1 706.0,242.0 707.0,242.1 708.0,241.4 709.0,241.6 710.0,241.5 711.0,242.1 712.0,241.8 713.0,242.0 714.0,241.5 715.0,241.9 716.0,241.9 717.0,242.3 718.0,242.1 719.0,242.0 720.0,242.4 721.0,242.0 722.0,241.4 723.0,241.6 724.0,241.6 725.0,242.3 726.0,242.1 727.0,242.0 728.0,242.0 729.0,241.5 730.0,241.7 731.0,241.7 732.0,242.0 733.0,242.1 734.0,241.5 735.0,241.4 736.0,242.0 737.0,241.7 738.0,242.0 739.0,242.0 740.0,241.5 741.0,241.8 742.0,241.9 743.0,242.2 744.0,242.4 745.0,241.8 746.0,241.4 747.0,241.4 748.0,241.4 749.0,241.8 750.0,241.9 751.0,241.7 752.0,241.9 753.0,241.8 754.0,241.9 755.0,241.6 756.0,242.2 757.0,242.1 758.0,242.2 759.0,241.5 760.0,241.8 761.0,241.7 762.0,241.8 763.0,242.2 764.0,242.3 765.0,242.0 766.0,241.7 767.0,242.3 768.0,242.0 769.0,242.1 770.0,242.1 771.0,241.7 772.0,241.7 773.0,242.0 774.0,242.1 775.0,242.0 776.0,242.0 777.0,241.8 778.0,242.3 779.0,241.7 780.0,242.4 781.0,241.9 782.0,241.4 783.0,241.6 784.0,242.3 785.0,242.2 786.0,242.3 787.0,242.2 788.0,242.1 789.0,242.3 790.0,241.5 791.0,241.9 792.0,241.9 793.0,242.3 794.0,242.2 795.0,241.9 796.0,242.3 797.0,241.9 798.0,241.4 799.0,241.7 800.0,242.4 801.0,241.8 802.0,242.1 803.0,241.9 804.0,241.8 805.0,242.1 806.0,242.0 807.0,241.9 808.0,241.9 809.0,242.3 810.0,241.3 811.0,241.4 812.0,242.0 813.0,241.8 814.0,241.9 815.0,242.1 816.0,241.5 817.0,242.3 818.0,242.1 819.0,242.3 820.0,241.5 821.0,241.8 822.0,241.7 823.0,241.6 824.0,242.0 825.0,241.7 826.0,241.7 827.0,242.1 828.0,242.2 829.0,242.3 830.0,242.0 831.0,241.9 832.0,242.3 833.0,242.2 834.0,241.8 835.0,241.6 836.0,241.4 837.0,242.1 838.0,242.3 839.0,242.0 840.0,241.5 841.0,241.6 842.0,242.4 843.0,242.1 844.0,241.6 845.0,242.2 846.0,241.6 847.0,241.7 848.0,242.1 849.0,242.2 850.0,242.1 851.0,242.1 852.0,241.5 853.0,241.8 854.0,241.7 855.0,242.3 856.0,242.2 857.0,241.5 858.0,242.2 859.0,241.7 860.0,241.8 861.0,241.5 862.0,242.4 863.0,241.5 864.0,241.9 865.0,241.9 866.0,241.9 867.0,241.4 868.0,242.1 869.0,241.5 870.0,242.4 871.0,241.8 872.0,241.9 873.0,241.4 874.0,241.9 875.0,242.4 876.0,241.6 877.0,242.4 878.0,241.9 879.0,242.2 880.0,242.1 881.0,242.2 882.0,242.1 883.0,242.1 884.0,241.6 885.0,242.2 886.0,242.0 887.0,242.0 888.0,242.1 889.0,241.8 890.0,242.4 891.0,241.5 892.0,241.4 893.0,242.3 894.0,242.3 895.0,241.5 896.0,242.1 897.0,242.1 898.0,242.3 899.0,241.6 900.0,242.2 901.0,241.5 902.0,241.8 903.0,241.9 904.0,242.2 905.0,241.6 906.0,241.5 907.0,241.6 908.0,242.2 909.0,242.1 910.0,241.8 911.0,241.8 912.0,242.1 913.0,241.5 914.0,241.4 915.0,242.2 916.0,242.1 917.0,241.8 918.0,242.0 919.0,241.8 920.0,241.9 921.0,242.1 922.0,242.2 923.0,241.5 924.0,241.5 925.0,241.6 926.0,242.2 927.0,241.5 928.0,241.6 929.0,242.1 930.0,241.9 931.0,241.5 932.0,241.7 933.0,242.1 934.0,241.4 935.0,242.3 936.0,241.5 937.0,241.9 938.0,242.2 939.0,241.6 940.0,242.1 941.0,241.5 942.0,242.1 943.0,241.6 944.0,241.9 945.0,241.9 946.0,241.8 947.0,242.3 948.0,241.8 949.0,241.9 950.0,241.7 951.0,241.5 952.0,241.4 953.0,242.3 954.0,241.7 955.0,241.8 956.0,242.3 957.0,242.3 958.0,242.0 959.0,241.7 960.0,241.8 961.0,242.3 962.0,241.9 963.0,241.9 964.0,242.3 965.0,241.9 966.0,242.1 967.0,242.0 968.0,241.8 969.0,241.9 970.0,242.0 971.0,242.0 972.0,241.7 973.0,242.0 974.0,241.9 975.0,242.4 976.0,241.8 977.0,242.2 978.0,241.6 979.0,241.7 980.0,242.1 981.0,241.4 982.0,241.7 983.0,241.9 984.0,241.5 985.0,242.0 986.0,241.9 987.0,242.0 988.0,241.7 989.0,242.1 990.0,242.0 991.0,241.5 992.0,242.3 993.0,242.1 994.0,241.6 995.0,241.7 996.0,241.9 997.0,241.8 998.0,242.2 999.0,242.1 1000.0,241.5 1001.0,241.7 1002.0,242.2 1003.0,242.4 1004.0,241.9 1005.0,242.0 1006.0,242.3 1007.0,242.1 1008.0,241.9 1009.0,242.0 1010.0,242.4 1011.0,242.3 1012.0,242.1 1013.0,241.7 1014.0,242.0 1015.0,241.9 1016.0,242.4 1017.0,242.1 1018.0,241.7 1019.0,242.0 1020.0,241.5 1021.0,241.4 1022.0,241.5 1023.0,241.4 1024.0,241.8 1025.0,242.0 1026.0,242.2 1027.0,242.2 1028.0,241.8 1029.0,242.2 1030.0,241.4 1031.0,242.1 1032.0,242.3 1033.0,242.2 1034.0,241.4 1035.0,242.2 1036.0,242.4 1037.0,242.1 1038.0,241.4 1039.0,241.7 1040.0,242.1 1041.0,241.7 1042.0,241.9 1043.0,241.9 1044.0,242.1 1045.0,242.2 1046.0,241.8 1047.0,242.3 1048.0,241.6 1049.0,241.7 1050.0,242.2 1051.0,242.3 1052.0,241.5 1053.0,242.2 1054.0,242.2 1055.0,242.3 1056.0,241.9 1057.0,242.1 1058.0,242.0 1059.0,242.0 1060.0,241.5 1061.0,241.6 1062.0,242.2 1063.0,242.3 1064.0,242.0 1065.0,241.8 1066.0,241.7 1067.0,241.8 1068.0,241.8 1069.0,242.2 1070.0,242.1 1071.0,241.6 1072.0,242.4 1073.0,241.4 1074.0,242.2 1075.0,241.5 1076.0,242.1 1077.0,242.2 1078.0,241.8 1079.0,241.7 1080.0,242.3 1081.0,241.7 1082.0,242.3 1083.0,242.2 1084.0,241.8 1085.0,241.7 1086.0,241.8 1087.0,242.1 1088.0,242.4 1089.0,241.9 1090.0,241.8 1091.0,242.1 1092.0,242.0 1093.0,241.9 1094.0,242.0 1095.0,242.3 1096.0,242.0 1097.0,242.2 1098.0,242.3 1099.0,242.3 1100.0,241.8 1101.0,242.3 1102.0,241.7 1103.0,242.2 1104.0,242.1 1105.0,242.3 1106.0,242.1 1107.0,242.4 1108.0,241.4 1109.0,242.1 1110.0,242.1 1111.0,241.9 1112.0,241.6 1113.0,242.0 1114.0,242.3 1115.0,241.6 1116.0,242.0 1117.0,242.0 1118.0,241.6 1119.0,242.0 1120.0,242.3 1121.0,242.0 1122.0,241.5 1123.0,242.2 1124.0,242.2 1125.0,241.7 1126.0,242.1 1127.0,241.6 1128.0,242.1 1129.0,241.4 1130.0,241.8 1131.0,241.8 1132.0,242.2 1133.0,241.4 1134.0,241.6 1135.0,242.0 1136.0,241.8 1137.0,242.3 1138.0,242.1 1139.0,242.1 1140.0,241.6 1141.0,241.5 1142.0,241.8 1143.0,242.2 1144.0,242.3 1145.0,241.8 1146.0,242.0 1147.0,242.2 1148.0,242.2 1149.0,241.5 1150.0,242.0 1151.0,241.6 1152.0,242.0 1153.0,242.1 1154.0,242.0 1155.0,241.5 1156.0,242.1 1157.0,240.8 1158.0,242.2 1159.0,242.2 1160.0,242.1 1161.0,241.6 1162.0,241.8 1163.0,241.4 1164.0,242.1 1165.0,242.2 1166.0,242.3 1167.0,241.5 1168.0,242.2 1169.0,242.3 1170.0,240.8 1171.0,242.1 1172.0,242.3 1173.0,242.4 1174.0,242.0 1175.0,241.8 1176.0,241.9 1177.0,241.7 1178.0,241.8 1179.0,242.3 1180.0,241.5 1181.0,241.5 1182.0,241.6 1183.0,241.5 1184.0,241.5 1185.0,241.7 1186.0,241.9 1187.0,242.3 1188.0,242.0 1189.0,242.1 1190.0,241.8 1191.0,241.6 1192.0,241.8 1193.0,242.1 1194.0,241.7 1195.0,241.6 1196.0,241.4 1197.0,241.7 1198.0,241.9 1199.0,242.3 1200.0,241.4 1201.0,241.6 1202.0,241.7 1203.0,242.3 1204.0,241.4 1205.0,241.7 1206.0,241.5 1207.0,242.2 1208.0,242.3 1209.0,242.2 1210.0,241.5 1211.0,241.7 1212.0,242.3 1213.0,241.5 1214.0,241.4 1215.0,242.4 1216.0,241.8 1217.0,241.4 1218.0,241.4 1219.0,242.4 1220.0,242.0 1221.0,242.1 1222.0,242.0 1223.0,241.4 1224.0,241.5 1225.0,242.1 1226.0,242.1 1227.0,241.8 1228.0,242.3 1229.0,241.6 1230.0,241.6 1230.0,356.8 1229.0,356.8 1228.0,357.3 1227.0,357.5 1226.0,357.4 1225.0,357.1 1224.0,356.9 1223.0,357.1 1222.0,357.4 1221.0,357.0 1220.0,356.9 1219.0,356.9 1218.0,357.1 1217.0,357.2 1216.0,359.1 1215.0,357.2 1214.0,357.4 1213.0,357.3 1212.0,357.3 1211.0,357.2 1210.0,359.5 1209.0,356.8 1208.0,356.6 1207.0,357.1 1206.0,357.3 1205.0,357.0 1204.0,357.0 1203.0,357.3 1202.0,357.4 1201.0,357.4 1200.0,357.6 1199.0,357.6 1198.0,357.3 1197.0,357.4 1196.0,357.6 1195.0,357.5 1194.0,358.4 1193.0,356.6 1192.0,357.2 1191.0,356.8 1190.0,357.5 1189.0,357.0 1188.0,356.9 1187.0,357.5 1186.0,356.6 1185.0,357.3 1184.0,357.4 1183.0,356.6 1182.0,357.1 1181.0,356.8 1180.0,356.6 1179.0,357.4 1178.0,357.1 1177.0,357.3 1176.0,357.4 1175.0,357.1 1174.0,357.8 1173.0,359.3 1172.0,356.9 1171.0,357.1 1170.0,357.2 1169.0,356.7 1168.0,357.3 1167.0,357.2 1166.0,356.9 1165.0,357.5 1164.0,357.0 1163.0,356.8 1162.0,357.6 1161.0,356.9 1160.0,357.1 1159.0,356.9 1158.0,357.3 1157.0,356.8 1156.0,356.7 1155.0,358.6 1154.0,357.6 1153.0,357.2 1152.0,357.1 1151.0,357.0 1150.0,356.8 1149.0,357.5 1148.0,356.7 1147.0,357.4 1146.0,356.8 1145.0,356.6 1144.0,356.7 1143.0,357.1 1142.0,357.3 1141.0,356.7 1140.0,356.6 1139.0,357.4 1138.0,357.0 1137.0,356.6 1136.0,357.4 1135.0,357.1 1134.0,357.3 1133.0,357.4 1132.0,357.6 1131.0,356.7 1130.0,356.7 1129.0,357.0 1128.0,356.6 1127.0,358.6 1126.0,356.8 1125.0,356.6 1124.0,356.9 1123.0,357.5 1122.0,356.7 1121.0,356.7 1120.0,357.4 1119.0,357.2 1118.0,357.4 1117.0,357.2 1116.0,357.2 1115.0,357.2 1114.0,357.3 1113.0,356.8 1112.0,357.1 1111.0,356.7 1110.0,357.0 1109.0,356.8 1108.0,357.5 1107.0,357.1 1106.0,357.3 1105.0,357.5 1104.0,357.5 1103.0,356.6 1102.0,357.1 1101.0,357.4 1100.0,356.7 1099.0,357.3 1098.0,356.7 1097.0,356.6 1096.0,356.9 1095.0,357.0 1094.0,356.7 1093.0,357.0 1092.0,357.5 1091.0,357.1 1090.0,357.3 1089.0,357.1 1088.0,357.1 1087.0,357.4 1086.0,357.5 1085.0,357.3 1084.0,357.4 1083.0,356.7 1082.0,358.2 1081.0,357.1 1080.0,358.1 1079.0,357.2 1078.0,358.1 1077.0,357.4 1076.0,357.3 1075.0,357.0 1074.0,357.1 1073.0,357.2 1072.0,357.8 1071.0,356.8 1070.0,357.0 1069.0,357.0 1068.0,356.9 1067.0,356.7 1066.0,357.6 1065.0,357.5 1064.0,357.2 1063.0,357.6 1062.0,357.0 1061.0,357.4 1060.0,356.6 1059.0,357.3 1058.0,357.1 1057.0,356.6 1056.0,356.6 1055.0,357.2 1054.0,356.8 1053.0,356.7 1052.0,356.6 1051.0,356.6 1050.0,358.9 1049.0,356.7 1048.0,357.2 1047.0,358.3 1046.0,356.8 1045.0,357.1 1044.0,356.7 1043.0,359.1 1042.0,356.7 1041.0,357.2 1040.0,357.4 1039.0,356.7 1038.0,356.8 1037.0,357.3 1036.0,357.2 1035.0,357.2 1034.0,356.9 1033.0,356.6 1032.0,356.6 1031.0,357.4 1030.0,357.2 1029.0,356.7 1028.0,358.2 1027.0,357.0 1026.0,357.1 1025.0,357.4 1024.0,356.7 1023.0,356.6 1022.0,357.1 1021.0,357.1 1020.0,357.4 1019.0,357.2 1018.0,357.3 1017.0,356.8 1016.0,359.0 1015.0,357.4 1014.0,357.1 1013.0,357.3 1012.0,357.5 1011.0,357.4 1010.0,356.9 1009.0,356.8 1008.0,356.9 1007.0,357.3 1006.0,358.6 1005.0,357.6 1004.0,357.2 1003.0,357.3 1002.0,357.0 1001.0,356.8 1000.0,357.3 999.0,357.0 998.0,357.2 997.0,357.2 996.0,356.9 995.0,356.9 994.0,357.5 993.0,357.1 992.0,356.7 991.0,357.5 990.0,357.3 989.0,357.0 988.0,357.3 987.0,357.4 986.0,357.6 985.0,356.7 984.0,357.3 983.0,357.1 982.0,357.6 981.0,356.7 980.0,357.3 979.0,357.4 978.0,357.4 977.0,357.5 976.0,356.8 975.0,357.0 974.0,357.6 973.0,357.3 972.0,357.5 971.0,357.3 970.0,357.5 969.0,357.1 968.0,357.0 967.0,357.0 966.0,357.4 965.0,357.0 964.0,356.9 963.0,357.2 962.0,356.7 961.0,357.7 960.0,356.6 959.0,357.0 958.0,356.7 957.0,356.7 956.0,357.1 955.0,357.3 954.0,357.3 953.0,356.8 952.0,357.1 951.0,357.5 950.0,357.4 949.0,357.6 948.0,357.0 947.0,357.0 946.0,356.8 945.0,357.3 944.0,356.6 943.0,356.9 942.0,357.6 941.0,356.9 940.0,356.8 939.0,357.3 938.0,357.4 937.0,357.0 936.0,357.2 935.0,357.5 934.0,357.2 933.0,356.8 932.0,356.7 931.0,357.5 930.0,356.9 929.0,356.8 928.0,357.4 927.0,357.3 926.0,357.4 925.0,357.1 924.0,357.1 923.0,357.1 922.0,357.4 921.0,357.0 920.0,357.1 919.0,357.2 918.0,356.6 917.0,357.1 916.0,356.7 915.0,357.2 914.0,356.9 913.0,357.5 912.0,357.5 911.0,357.0 910.0,356.9 909.0,357.2 908.0,356.6 907.0,357.1 906.0,357.3 905.0,357.0 904.0,357.5 903.0,357.2 902.0,356.9 901.0,357.1 900.0,356.7 899.0,357.1 898.0,357.1 897.0,356.6 896.0,357.5 895.0,357.1 894.0,357.3 893.0,357.3 892.0,357.5 891.0,356.7 890.0,357.1 889.0,357.3 888.0,357.4 887.0,356.7 886.0,357.0 885.0,356.8 884.0,357.1 883.0,356.9 882.0,357.5 881.0,357.3 880.0,357.1 879.0,357.5 878.0,356.9 877.0,357.4 876.0,357.0 875.0,356.7 874.0,357.2 873.0,358.8 872.0,358.3 871.0,357.2 870.0,357.1 869.0,357.5 868.0,357.3 867.0,357.2 866.0,356.7 865.0,356.8 864.0,356.8 863.0,357.4 862.0,357.2 861.0,356.7 860.0,356.7 859.0,356.7 858.0,357.5 857.0,357.1 856.0,357.1 855.0,357.5 854.0,357.5 853.0,357.1 852.0,356.8 851.0,356.9 850.0,356.9 849.0,356.6 848.0,357.5 847.0,357.0 846.0,357.2 845.0,357.1 844.0,356.7 843.0,356.8 842.0,357.3 841.0,356.7 840.0,357.1 839.0,357.2 838.0,357.4 837.0,357.3 836.0,356.9 835.0,357.0 834.0,357.1 833.0,356.9 832.0,357.3 831.0,357.3 830.0,357.0 829.0,357.5 828.0,357.0 827.0,357.6 826.0,357.1 825.0,356.7 824.0,357.0 823.0,357.0 822.0,357.6 821.0,356.6 820.0,359.6 819.0,359.1 818.0,357.4 817.0,357.6 816.0,357.0 815.0,356.9 814.0,357.4 813.0,357.2 812.0,357.2 811.0,356.6 810.0,357.3 809.0,357.0 808.0,357.1 807.0,356.6 806.0,357.1 805.0,357.3 804.0,357.1 803.0,357.3 802.0,356.7 801.0,358.8 800.0,356.7 799.0,357.3 798.0,357.8 797.0,357.0 796.0,357.5 795.0,357.2 794.0,357.0 793.0,357.1 792.0,356.7 791.0,356.7 790.0,356.6 789.0,359.3 788.0,357.4 787.0,357.2 786.0,357.0 785.0,357.6 784.0,357.1 783.0,357.2 782.0,357.6 781.0,356.9 780.0,357.2 779.0,356.9 778.0,357.0 777.0,357.1 776.0,356.9 775.0,356.7 774.0,357.3 773.0,356.9 772.0,357.2 771.0,357.1 770.0,357.5 769.0,357.3 768.0,357.1 767.0,357.2 766.0,357.0 765.0,356.8 764.0,356.7 763.0,356.7 762.0,356.9 761.0,358.2 760.0,357.5 759.0,356.7 758.0,357.0 757.0,357.5 756.0,357.0 755.0,357.1 754.0,356.8 753.0,356.7 752.0,357.5 751.0,356.9 750.0,357.6 749.0,357.5 748.0,357.1 747.0,357.0 746.0,357.3 745.0,357.5 744.0,357.2 743.0,357.2 742.0,357.3 741.0,356.7 740.0,357.5 739.0,357.2 738.0,357.6 737.0,357.5 736.0,357.3 735.0,357.0 734.0,356.9 733.0,357.1 732.0,358.5 731.0,356.8 730.0,356.8 729.0,356.9 728.0,357.2 727.0,357.0 726.0,359.2 725.0,357.6 724.0,357.4 723.0,357.4 722.0,356.8 721.0,357.4 720.0,356.8 719.0,357.4 718.0,357.5 717.0,357.2 716.0,357.0 715.0,357.6 714.0,356.9 713.0,356.9 712.0,356.9 711.0,356.6 710.0,356.9 709.0,356.7 708.0,357.0 707.0,357.0 706.0,356.9 705.0,356.6 704.0,357.3 703.0,357.3 702.0,357.0 701.0,356.7 700.0,358.5 699.0,356.7 698.0,357.3 697.0,357.4 696.0,357.3 695.0,357.4 694.0,357.5 693.0,357.4 692.0,356.7 691.0,357.1 690.0,356.8 689.0,357.0 688.0,356.8 687.0,357.3 686.0,356.9 685.0,357.2 684.0,357.1 683.0,358.4 682.0,356.7 681.0,357.1 680.0,357.0 679.0,357.0 678.0,357.4 677.0,357.6 676.0,357.3 675.0,356.9 674.0,357.1 673.0,357.0 672.0,358.6 671.0,356.8 670.0,356.8 669.0,357.0 668.0,356.9 667.0,357.0 666.0,357.5 665.0,356.8 664.0,357.6 663.0,356.6 662.0,356.9 661.0,357.0 660.0,356.7 659.0,357.3 658.0,356.9 657.0,357.6 656.0,357.4 655.0,357.0 654.0,357.3 653.0,356.8 652.0,357.5 651.0,357.7 650.0,357.0 649.0,357.6 648.0,356.8 647.0,356.8 646.0,357.0 645.0,357.5 644.0,356.9 643.0,356.6 642.0,357.0 641.0,357.2 640.0,357.4 639.0,357.0 638.0,357.5 637.0,357.1 636.0,357.1 635.0,357.0 634.0,357.4 633.0,356.8 632.0,356.9 631.0,358.0 630.0,357.1 629.0,357.4 628.0,357.1 627.0,357.5 626.0,356.6 625.0,357.1 624.0,357.4 623.0,356.8 622.0,357.1 621.0,357.1 620.0,357.2 619.0,357.5 618.0,356.6 617.0,357.1 616.0,356.9 615.0,356.9 614.0,357.1 613.0,357.2 612.0,356.9 611.0,357.3 610.0,356.8 609.0,356.9 608.0,357.5 607.0,357.5 606.0,356.7 605.0,357.2 604.0,356.8 603.0,356.8 602.0,356.8 601.0,357.1 600.0,357.7 599.0,357.5 598.0,356.8 597.0,356.7 596.0,357.2 595.0,357.0 594.0,357.5 593.0,356.9 592.0,356.7 591.0,356.7 590.0,357.4 589.0,357.3 588.0,357.0 587.0,357.2 586.0,357.4 585.0,357.4 584.0,357.1 583.0,357.3 582.0,357.2 581.0,357.2 580.0,356.8 579.0,357.0 578.0,357.3 577.0,356.6 576.0,357.4 575.0,356.9 574.0,357.4 573.0,357.2 572.0,356.7 571.0,357.0 570.0,357.2 569.0,357.2 568.0,357.3 567.0,356.7 566.0,357.5 565.0,357.4 564.0,356.7 563.0,356.6 562.0,357.6 561.0,356.9 560.0,357.2 559.0,356.7 558.0,356.8 557.0,357.0 556.0,356.7 555.0,356.9 554.0,356.9 553.0,357.3 552.0,357.1 551.0,356.8 550.0,357.2 549.0,358.5 548.0,357.0 547.0,357.3 546.0,356.9 545.0,357.1 544.0,356.7 543.0,356.9 542.0,357.1 541.0,356.9 540.0,357.4 539.0,357.1 538.0,357.1 537.0,356.8 536.0,357.4 535.0,357.3 534.0,357.1 533.0,356.6 532.0,357.1 531.0,356.9 530.0,356.9 529.0,356.8 528.0,356.8 527.0,356.6 526.0,356.7 525.0,356.7 524.0,356.9 523.0,357.0 522.0,357.0 521.0,357.1 520.0,357.4 519.0,357.4 518.0,357.3 517.0,357.6 516.0,357.1 515.0,357.2 514.0,356.7 513.0,356.7 512.0,357.4 511.0,357.1 510.0,357.5 509.0,357.4 508.0,356.8 507.0,357.0 506.0,357.5 505.0,357.4 504.0,357.5 503.0,357.0 502.0,356.9 501.0,356.7 500.0,357.4 499.0,357.2 498.0,356.7 497.0,357.3 496.0,357.3 495.0,357.0 494.0,357.4 493.0,357.3 492.0,357.0 491.0,356.7 490.0,357.2 489.0,358.1 488.0,356.8 487.0,357.2 486.0,357.2 485.0,356.8 484.0,357.1 483.0,356.9 482.0,356.7 481.0,357.1 480.0,357.4 479.0,357.5 478.0,357.1 477.0,357.5 476.0,357.5 475.0,357.7 474.0,356.9 473.0,357.0 472.0,357.5 471.0,356.8 470.0,359.7 469.0,357.2 468.0,357.1 467.0,356.7 466.0,357.0 465.0,359.3 464.0,357.6 463.0,357.3 462.0,356.8 461.0,356.6 460.0,357.3 459.0,357.3 458.0,357.4 457.0,356.9 456.0,357.2 455.0,357.3 454.0,356.8 453.0,357.1 452.0,356.6 451.0,357.1 450.0,357.6 449.0,357.6 448.0,356.7 447.0,358.3 446.0,357.1 445.0,357.6 444.0,358.2 443.0,357.0 442.0,357.3 441.0,357.6 440.0,356.9 439.0,356.8 438.0,357.1 437.0,356.8 436.0,357.0 435.0,357.1 434.0,357.2 433.0,356.8 432.0,356.7 431.0,356.9 430.0,357.0 429.0,357.5 428.0,356.7 427.0,357.4 426.0,359.6 425.0,357.2 424.0,356.8 423.0,356.9 422.0,357.2 421.0,356.8 420.0,357.5 419.0,357.1 418.0,356.9 417.0,357.4 416.0,357.2 415.0,357.5 414.0,357.1 413.0,356.8 412.0,357.3 411.0,357.5 410.0,357.0 409.0,356.7 408.0,357.5 407.0,357.2 406.0,356.9 405.0,358.2 404.0,357.6 403.0,357.0 402.0,356.8 401.0,356.7 400.0,357.2 399.0,358.9 398.0,356.9 397.0,356.8 396.0,356.9 395.0,357.4 394.0,357.2 393.0,357.4 392.0,356.9 391.0,357.5 390.0,356.9 389.0,357.2 388.0,357.1 387.0,356.7 386.0,357.3 385.0,357.6 384.0,357.2 383.0,357.5 382.0,357.5 381.0,357.4 380.0,357.3 379.0,356.9 378.0,356.6 377.0,356.6 376.0,357.3 375.0,357.0 374.0,356.8 373.0,356.6 372.0,357.2 371.0,356.7 370.0,357.2 369.0,356.8 368.0,357.0 367.0,356.8 366.0,356.8 365.0,356.8 364.0,357.6 363.0,356.8 362.0,356.9 361.0,356.8 360.0,357.5 359.0,356.9 358.0,356.8 357.0,356.7 356.0,357.2 355.0,356.7 354.0,357.6 353.0,357.4 352.0,357.6 351.0,356.6 350.0,357.4 349.0,356.9 348.0,357.4 347.0,357.1 346.0,357.1 345.0,358.3 344.0,356.6 343.0,357.6 342.0,357.4 341.0,356.4 340.0,355.3 339.0,354.3" fill="#3232c8"/><polygon points="339.5,257.4 340.5,255.9 341.5,255.8 342.5,255.3 343.5,254.8 344.5,254.8 345.5,254.3 346.5,254.0 347.5,253.5 348.5,253.4 349.5,253.3 350.5,253.5 351.5,253.7 352.5,253.7 353.5,253.5 354.5,253.3 355.5,253.3 356.5,253.5 357.5,253.8 358.5,253.8 359.5,253.2 360.5,253.7 361.5,253.4 362.5,253.3 363.5,253.6 364.5,253.6 365.5,253.3 366.5,253.3 367.5,253.7 368.5,253.2 369.5,253.2 370.5,253.8 371.5,253.8 372.5,253.4 373.5,253.6 374.5,253.7 375.5,253.8 376.5,253.5 377.5,253.2 378.5,253.3 379.5,253.7 380.5,253.4 381.5,253.8 382.5,253.7 383.5,253.3 384.5,253.7 385.5,253.2 386.5,253.2 387.5,253.8 388.5,253.3 389.5,253.6 390.5,253.3 391.5,253.8 392.5,253.7 393.5,253.4 394.5,253.7 395.5,253.8 396.5,253.3 397.5,253.3 398.5,253.6 399.5,253.8 400.5,253.5 401.5,253.2 402.5,253.7 403.5,253.5 404.5,253.5 405.5,253.4 406.5,253.8 407.5,253.2 408.5,253.3 409.5,253.2 410.5,253.4 411.5,253.7 412.5,253.7 413.5,253.3 414.5,253.5 415.5,253.4 416.5,253.7 417.5,253.4 418.5,253.3 419.5,253.6 420.5,253.5 421.5,253.3 422.5,253.3 423.5,253.3 424.5,253.3 425.5,253.7 426.5,253.8 427.5,253.5 428.5,253.6 429.5,253.3 430.5,253.3 431.5,253.2 432.5,253.4 433.5,253.4 434.5,253.5 435.5,253.5 436.5,253.5 437.5,253.5 438.5,253.4 439.5,253.5 440.5,253.8 441.5,253.5 442.5,253.7 443.5,253.8 444.5,253.8 445.5,253.7 446.5,253.4 447.5,253.5 448.5,253.6 449.5,253.4 450.5,253.4 451.5,253.7 452.5,253.3 453.5,253.4 454.5,253.8 455.5,253.6 456.5,253.7 457.5,253.8 458.5,253.3 459.5,253.7 460.5,253.5 461.5,253.4 462.5,253.4 463.5,253.4 464.5,253.3 465.5,253.3 466.5,253.3 467.5,253.2 468.5,253.6 469.5,253.6 470.5,253.8 471.5,253.7 472.5,253.3 473.5,253.3 474.5,253.6 475.5,253.3 476.5,253.2 477.5,253.2 478.5,253.5 479.5,253.6 480.5,253.7 481.5,253.3 482.5,253.7 483.5,253.6 484.5,253.3 485.5,253.5 486.5,253.5 487.5,253.5 488.5,253.7 489.5,253.5 490.5,253.2 491.5,253.5 492.5,253.5 493.5,253.3 494.5,253.7 495.5,253.7 496.5,253.8 497.5,253.7 498.5,253.4 499.5,253.5 500.5,253.6 501.5,253.4 502.5,253.4 503.5,253.2 504.5,253.5 505.5,253.6 506.5,253.5 507.5,253.4 508.5,253.2 509.5,253.5 510.5,253.4 511.5,253.7 512.5,253.4 513.5,253.4 514.5,253.5 515.5,253.4 516.5,253.5 517.5,253.5 518.5,253.4 519.5,253.5 520.5,253.5 521.5,253.5 522.5,253.7 523.5,253.7 524.5,253.7 525.5,253.2 526.5,253.3 527.5,253.2 528.5,253.5 529.5,253.5 530.5,253.6 531.5,253.3 532.5,253.5 533.5,253.5 534.5,253.4 535.5,253.2 536.5,253.6 537.5,253.3 538.5,253.4 539.5,253.6 540.5,253.7 541.5,253.5 542.5,253.6 543.5,253.5 544.5,253.3 545.5,253.2 546.5,253.6 547.5,253.4 548.5,253.4 549.5,253.3 550.5,253.3 551.5,253.6 552.5,253.5 553.5,253.5 554.5,253.4 555.5,253.2 556.5,253.8 557.5,253.6 558.5,253.7 559.5,253.3 560.5,253.7 561.5,253.8 562.5,253.5 563.5,253.4 564.5,253.4 565.5,253.4 566.5,253.6 567.5,253.7 568.5,253.5 569.5,253.5 570.5,253.6 571.5,253.7 572.5,253.7 573.5,253.4 574.5,253.4 575.5,253.3 576.5,253.6 577.5,253.5 578.5,253.7 579.5,253.4 580.5,253.8 581.5,253.5 582.5,253.6 583.5,253.5 584.5,253.4 585.5,253.4 586.5,253.5 587.5,253.3 588.5,253.7 589.5,253.7 590.5,253.5 591.5,253.5 592.5,253.2 593.5,253.3 594.5,253.5 595.5,253.5 596.5,253.7 597.5,253.2 598.5,253.6 599.5,253.6 600.5,253.3 601.5,253.5 602.5,253.7 603.5,253.6 604.5,253.7 605.5,253.5 606.5,253.5 607.5,253.5 608.5,253.5 609.5,253.6 610.5,253.5 611.5,253.7 612.5,253.7 613.5,253.7 614.5,253.3 615.5,253.6 616.5,253.4 617.5,253.8 618.5,253.8 619.5,253.3 620.5,253.7 621.5,253.3 622.5,253.5 623.5,253.8 624.5,253.5 625.5,253.5 626.5,253.5 627.5,253.6 628.5,253.5 629.5,253.2 630.5,253.3 631.5,253.5 632.5,253.7 633.5,253.7 634.5,253.5 635.5,253.5 636.5,253.6 637.5,253.3 638.5,253.6 639.5,253.5 640.5,253.3 641.5,253.3 642.5,253.2 643.5,253.5 644.5,253.6 645.5,253.5 646.5,253.5 647.5,253.8 648.5,253.5 649.5,253.7 650.5,253.2 651.5,253.6 652.5,253.3 653.5,253.6 654.5,253.4 655.5,253.3 656.5,253.5 657.5,253.6 658.5,253.3 659.5,253.4 660.5,253.6 661.5,253.5 662.5,253.4 663.5,253.2 664.5,253.5 665.5,253.7 666.5,253.5 667.5,253.2 668.5,253.8 669.5,253.5 670.5,253.3 671.5,253.3 672.5,253.6 673.5,253.5 674.5,253.5 675.5,253.6 676.5,253.8 677.5,253.4 678.5,253.3 679.5,253.4 680.5,253.3 681.5,253.3 682.5,253.2 683.5,253.7 684.5,253.7 685.5,253.6 686.5,253.6 687.5,253.6 688.5,253.3 689.5,253.4 690.5,253.2 691.5,253.4 692.5,253.3 693.5,253.6 694.5,253.8 695.5,253.6 696.5,253.8 697.5,253.8 698.5,253.5 699.5,253.4 700.5,253.4 701.5,253.4 702.5,253.2 703.5,253.6 704.5,253.2 705.5,253.7 706.5,253.4 707.5,253.8 708.5,253.4 709.5,253.4 710.5,253.7 711.5,253.7 712.5,253.7 713.5,253.7 714.5,253.5 715.5,253.7 716.5,253.4 717.5,253.7 718.5,253.6 719.5,253.5 720.5,253.6 721.5,253.3 722.5,253.3 723.5,253.5 724.5,253.7 725.5,253.2 726.5,253.2 727.5,253.4 728.5,253.5 729.5,253.4 730.5,253.4 731.5,253.6 732.5,253.3 733.5,253.6 734.5,253.5 735.5,253.6 736.5,253.8 737.5,253.2 738.5,253.5 739.5,253.5 740.5,253.7 741.5,253.4 742.5,253.4 743.5,253.4 744.5,253.5 745.5,253.5 746.5,253.7 747.5,253.7 748.5,253.2 749.5,253.4 750.5,253.2 751.5,253.6 752.5,253.8 753.5,253.6 754.5,253.4 755.5,253.5 756.5,253.8 757.5,253.2 758.5,253.5 759.5,253.6 760.5,253.7 761.5,253.5 762.5,253.4 763.5,253.4 764.5,253.2 765.5,253.5 766.5,253.7 767.5,253.7 768.5,253.8 769.5,253.4 770.5,253.2 771.5,253.5 772.5,253.4 773.5,253.4 774.5,253.6 775.5,253.4 776.5,253.4 777.5,253.4 778.5,253.3 779.5,253.4 780.5,253.6 781.5,253.7 782.5,253.6 783.5,253.4 784.5,253.8 785.5,253.3 786.5,253.7 787.5,253.8 788.5,253.6 789.5,253.8 790.5,253.4 791.5,253.6 792.5,253.3 793.5,253.3 794.5,253.7 795.5,253.4 796.5,253.3 797.5,253.2 798.5,253.5 799.5,253.3 800.5,253.2 801.5,253.3 802.5,253.6 803.5,253.4 804.5,253.2 805.5,253.4 806.5,253.7 807.5,253.5 808.5,253.6 809.5,253.4 810.5,253.6 811.5,253.3 812.5,253.3 813.5,253.8 814.5,253.5 815.5,253.3 816.5,253.8 817.5,253.8 818.5,253.4 819.5,253.5 820.5,253.5 821.5,253.6 822.5,253.7 823.5,253.6 824.5,253.4 825.5,253.4 826.5,253.4 827.5,253.4 828.5,253.3 829.5,253.3 830.5,253.3 831.5,253.6 832.5,253.7 833.5,253.7 834.5,253.6 835.5,253.3 836.5,253.6 837.5,253.8 838.5,253.3 839.5,253.8 840.5,253.6 841.5,253.5 842.5,253.8 843.5,253.4 844.5,253.2 845.5,253.4 846.5,253.8 847.5,253.3 848.5,253.3 849.5,253.7 850.5,253.5 851.5,253.4 852.5,253.7 853.5,253.8 854.5,253.6 855.5,253.8 856.5,253.7 857.5,253.2 858.5,253.4 859.5,253.6 860.5,253.7 861.5,253.6 862.5,253.3 863.5,253.5 864.5,253.2 865.5,253.7 866.5,253.8 867.5,253.8 868.5,253.5 869.5,253.7 870.5,253.6 871.5,253.8 872.5,253.5 873.5,253.6 874.5,253.7 875.5,253.7 876.5,253.8 877.5,253.2 878.5,253.7 879.5,253.4 880.5,253.7 881.5,253.7 882.5,253.4 883.5,253.3 884.5,253.7 885.5,253.4 886.5,253.4 887.5,253.7 888.5,253.7 889.5,253.5 890.5,253.3 891.5,253.7 892.5,253.4 893.5,253.6 894.5,253.6 895.5,253.7 896.5,253.5 897.5,253.7 898.5,253.3 899.5,253.3 900.5,253.3 901.5,253.6 902.5,253.6 903.5,253.5 904.5,253.4 905.5,253.5 906.5,253.4 907.5,253.4 908.5,253.4 909.5,253.2 910.5,253.4 911.5,253.5 912.5,253.6 913.5,253.5 914.5,253.4 915.5,253.8 916.5,253.4 917.5,253.4 918.5,253.7 919.5,253.2 920.5,253.4 921.5,253.4 922.5,253.5 923.5,253.3 924.5,253.3 925.5,253.3 926.5,253.8 927.5,253.7 928.5,253.2 929.5,253.5 930.5,253.4 931.5,253.3 932.5,253.7 933.5,253.6 934.5,253.3 935.5,253.6 936.5,253.3 937.5,253.7 938.5,253.4 939.5,253.4 940.5,253.7 941.5,253.6 942.5,253.6 943.5,253.7 944.5,253.3 945.5,253.5 946.5,253.6 947.5,253.3 948.5,253.3 949.5,253.4 950.5,253.5 951.5,253.8 952.5,253.4 953.5,253.7 954.5,253.5 955.5,253.5 956.5,253.8 957.5,253.4 958.5,253.7 959.5,253.6 960.5,253.6 961.5,253.8 962.5,253.2 963.5,253.2 964.5,253.4 965.5,253.3 966.5,253.4 967.5,253.2 968.5,253.5 969.5,253.5 970.5,253.4 971.5,253.8 972.5,253.7 973.5,253.5 974.5,253.3 975.5,253.7 976.5,253.7 977.5,253.7 978.5,253.5 979.5,253.4 980.5,253.6 981.5,253.7 982.5,253.6 983.5,253.7 984.5,253.3 985.5,253.3 986.5,253.5 987.5,253.6 988.5,253.7 989.5,253.6 990.5,253.6 991.5,253.5 992.5,253.7 993.5,253.7 994.5,253.4 995.5,253.7 996.5,253.6 997.5,253.3 998.5,253.3 999.5,253.8 1000.5,253.5 1001.5,253.6 1002.5,253.3 1003.5,253.6 1004.5,253.3 1005.5,253.5 1006.5,253.7 1007.5,253.4 1008.5,253.6 1009.5,253.2 1010.5,253.7 1011.5,253.5 1012.5,253.3 1013.5,253.3 1014.5,253.2 1015.5,253.8 1016.5,253.2 1017.5,253.4 1018.5,253.8 1019.5,253.6 1020.5,253.5 1021.5,253.5 1022.5,253.3 1023.5,253.3 1024.5,253.6 1025.5,253.8 1026.5,253.8 1027.5,253.3 1028.5,253.8 1029.5,253.3 1030.5,253.7 1031.5,253.5 1032.5,253.6 1033.5,253.4 1034.5,253.2 1035.5,253.3 1036.5,253.3 1037.5,253.7 1038.5,253.3 1039.5,253.3 1040.5,253.6 1041.5,253.4 1042.5,253.6 1043.5,253.3 1044.5,253.2 1045.5,253.5 1046.5,253.7 1047.5,253.3 1048.5,253.4 1049.5,253.5 1050.5,253.7 1051.5,253.4 1052.5,253.2 1053.5,253.3 1054.5,253.6 1055.5,253.5 1056.5,253.2 1057.5,253.3 1058.5,253.4 1059.5,253.7 1060.5,253.5 1061.5,253.3 1062.5,253.7 1063.5,253.5 1064.5,253.2 1065.5,253.5 1066.5,253.8 1067.5,253.4 1068.5,253.5 1069.5,253.3 1070.5,253.7 1071.5,253.6 1072.5,253.5 1073.5,253.3 1074.5,253.5 1075.5,253.6 1076.5,253.6 1077.5,253.7 1078.5,253.5 1079.5,253.5 1080.5,253.5 1081.5,253.6 1082.5,253.4 1083.5,253.7 1084.5,253.4 1085.5,253.3 1086.5,253.3 1087.5,253.6 1088.5,253.2 1089.5,253.4 1090.5,253.6 1091.5,253.6 1092.5,253.4 1093.5,253.4 1094.5,253.8 1095.5,253.7 1096.5,253.3 1097.5,253.3 1098.5,253.6 1099.5,253.6 1100.5,253.4 1101.5,253.8 1102.5,253.2 1103.5,253.6 1104.5,253.4 1105.5,253.5 1106.5,253.6 1107.5,253.6 1108.5,253.4 1109.5,253.7 1110.5,253.2 1111.5,253.4 1112.5,253.7 1113.5,253.8 1114.5,253.8 1115.5,253.7 1116.5,253.5 1117.5,253.8 1118.5,253.2 1119.5,253.3 1120.5,253.7 1121.5,253.8 1122.5,253.4 1123.5,253.2 1124.5,253.6 1125.5,253.2 1126.5,253.2 1127.5,253.3 1128.5,253.5 1129.5,253.2 1130.5,253.8 1131.5,253.3 1132.5,253.5 1133.5,253.3 1134.5,253.4 1135.5,253.8 1136.5,253.5 1137.5,253.8 1138.5,253.6 1139.5,253.4 1140.5,253.4 1141.5,253.7 1142.5,253.6 1143.5,253.4 1144.5,253.3 1145.5,253.4 1146.5,253.5 1147.5,253.3 1148.5,253.7 1149.5,253.4 1150.5,253.7 1151.5,253.3 1152.5,253.7 1153.5,253.4 1154.5,253.3 1155.5,253.3 1156.5,253.7 1157.5,253.5 1158.5,253.5 1159.5,253.7 1160.5,253.6 1161.5,253.8 1162.5,253.8 1163.5,253.2 1164.5,253.4 1165.5,253.8 1166.5,253.5 1167.5,253.8 1168.5,253.7 1169.5,253.8 1170.5,253.6 1171.5,253.3 1172.5,253.7 1173.5,253.6 1174.5,253.4 1175.5,253.5 1176.5,253.5 1177.5,253.4 1178.5,253.5 1179.5,253.4 1180.5,253.7 1181.5,253.2 1182.5,253.3 1183.5,253.4 1184.5,253.4 1185.5,253.2 1186.5,253.4 1187.5,253.4 1188.5,253.5 1189.5,253.4 1190.5,253.7 1191.5,253.6 1192.5,253.5 1193.5,253.2 1194.5,253.3 1195.5,253.7 1196.5,253.7 1197.5,253.5 1198.5,253.2 1199.5,253.7 1200.5,253.4 1201.5,253.6 1202.5,253.6 1203.5,253.4 1204.5,253.5 1205.5,253.5 1206.5,253.3 1207.5,253.4 1208.5,253.5 1209.5,253.4 1210.5,253.6 1211.5,253.6 1212.5,253.5 1213.5,253.8 1214.5,253.6 1215.5,253.4 1216.5,253.2 1217.5,253.6 1218.5,253.5 1219.5,253.2 1220.5,253.8 1221.5,253.3 1222.5,253.3 1223.5,253.5 1224.5,253.7 1225.5,253.3 1226.5,253.2 1227.5,253.5 1228.5,253.5 1229.5,253.3 1229.5,345.3 1228.5,345.7 1227.5,345.6 1226.5,345.7 1225.5,345.5 1224.5,345.5 1223.5,345.4 1222.5,345.6 1221.5,345.7 1220.5,345.5 1219.5,345.3 1218.5,345.4 1217.5,345.6 1216.5,345.5 1215.5,345.6 1214.5,345.5 1213.5,345.5 1212.5,345.8 1211.5,345.7 1210.5,345.6 1209.5,345.3 1208.5,345.3 1207.5,345.6 1206.5,345.8 1205.5,345.5 1204.5,345.4 1203.5,345.2 1202.5,345.6 1201.5,345.5 1200.5,345.5 1199.5,345.3 1198.5,345.5 1197.5,345.5 1196.5,345.4 1195.5,345.4 1194.5,345.5 1193.5,345.7 1192.5,345.5 1191.5,345.8 1190.5,345.4 1189.5,345.7 1188.5,345.5 1187.5,345.3 1186.5,345.6 1185.5,345.5 1184.5,345.5 1183.5,345.4 1182.5,345.8 1181.5,345.4 1180.5,345.4 1179.5,345.3 1178.5,345.7 1177.5,345.4 1176.5,345.5 1175.5,345.5 1174.5,345.2 1173.5,345.7 1172.5,345.6 1171.5,345.7 1170.5,345.4 1169.5,345.2 1168.5,345.7 1167.5,345.3 1166.5,345.7 1165.5,345.7 1164.5,345.4 1163.5,345.4 1162.5,345.6 1161.5,345.7 1160.5,345.7 1159.5,345.7 1158.5,345.4 1157.5,345.7 1156.5,345.6 1155.5,345.8 1154.5,345.3 1153.5,345.3 1152.5,345.6 1151.5,345.3 1150.5,345.7 1149.5,345.7 1148.5,345.2 1147.5,345.7 1146.5,345.6 1145.5,345.7 1144.5,345.5 1143.5,345.8 1142.5,345.7 1141.5,345.4 1140.5,345.7 1139.5,345.7 1138.5,345.3 1137.5,345.4 1136.5,345.7 1135.5,345.8 1134.5,345.7 1133.5,345.3 1132.5,345.8 1131.5,345.6 1130.5,345.5 1129.5,345.5 1128.5,345.5 1127.5,345.6 1126.5,345.7 1125.5,345.7 1124.5,345.6 1123.5,345.7 1122.5,345.8 1121.5,345.3 1120.5,345.7 1119.5,345.3 1118.5,345.8 1117.5,345.3 1116.5,345.3 1115.5,345.4 1114.5,345.3 1113.5,345.5 1112.5,345.5 1111.5,345.6 1110.5,345.7 1109.5,345.5 1108.5,345.3 1107.5,345.3 1106.5,345.4 1105.5,345.6 1104.5,345.6 1103.5,345.8 1102.5,345.4 1101.5,345.4 1100.5,345.6 1099.5,345.6 1098.5,345.7 1097.5,345.3 1096.5,345.5 1095.5,345.4 1094.5,345.3 1093.5,345.7 1092.5,345.6 1091.5,345.3 1090.5,345.3 1089.5,345.6 1088.5,345.8 1087.5,345.4 1086.5,345.7 1085.5,345.6 1084.5,345.7 1083.5,345.2 1082.5,345.3 1081.5,345.3 1080.5,345.7 1079.5,345.2 1078.5,345.6 1077.5,345.4 1076.5,345.6 1075.5,345.6 1074.5,345.6 1073.5,345.3 1072.5,345.4 1071.5,345.4 1070.5,345.7 1069.5,345.2 1068.5,345.4 1067.5,345.5 1066.5,345.6 1065.5,345.3 1064.5,345.6 1063.5,345.4 1062.5,345.2 1061.5,345.4 1060.5,345.3 1059.5,345.4 1058.5,345.6 1057.5,345.8 1056.5,345.7 1055.5,345.7 1054.5,345.4 1053.5,345.3 1052.5,345.6 1051.5,345.5 1050.5,345.6 1049.5,345.7 1048.5,345.4 1047.5,345.7 1046.5,345.2 1045.5,345.6 1044.5,345.2 1043.5,345.7 1042.5,345.4 1041.5,345.5 1040.5,345.7 1039.5,345.8 1038.5,345.3 1037.5,345.7 1036.5,345.5 1035.5,345.2 1034.5,345.4 1033.5,345.4 1032.5,345.5 1031.5,345.3 1030.5,345.5 1029.5,345.4 1028.5,345.4 1027.5,345.5 1026.5,345.8 1025.5,345.4 1024.5,345.4 1023.5,345.3 1022.5,345.4 1021.5,345.8 1020.5,345.5 1019.5,345.7 1018.5,345.8 1017.5,345.6 1016.5,345.7 1015.5,345.3 1014.5,345.6 1013.5,345.3 1012.5,345.8 1011.5,345.5 1010.5,345.2 1009.5,345.6 1008.5,345.8 1007.5,345.6 1006.5,345.8 1005.5,345.3 1004.5,345.3 1003.5,345.3 1002.5,345.3 1001.5,345.3 1000.5,345.2 999.5,345.4 998.5,345.2 997.5,345.7 996.5,345.5 995.5,345.3 994.5,345.7 993.5,345.7 992.5,345.4 991.5,345.2 990.5,345.3 989.5,345.4 988.5,345.5 987.5,345.6 986.5,345.4 985.5,345.5 984.5,345.5 983.5,345.5 982.5,345.3 981.5,345.6 980.5,345.4 979.5,345.8 978.5,345.5 977.5,345.4 976.5,345.5 975.5,345.6 974.5,345.6 973.5,345.2 972.5,345.4 971.5,345.7 970.5,345.4 969.5,345.3 968.5,345.3 967.5,345.3 966.5,345.7 965.5,345.6 964.5,345.4 963.5,345.3 962.5,345.6 961.5,345.6 960.5,345.3 959.5,345.4 958.5,345.3 957.5,345.6 956.5,345.3 955.5,345.6 954.5,345.7 953.5,345.3 952.5,345.8 951.5,345.2 950.5,345.8 949.5,345.4 948.5,345.7 947.5,345.2 946.5,345.5 945.5,345.8 944.5,345.3 943.5,345.6 942.5,345.3 941.5,345.5 940.5,345.3 939.5,345.4 938.5,345.8 937.5,345.6 936.5,345.8 935.5,345.7 934.5,345.4 933.5,345.6 932.5,345.8 931.5,345.8 930.5,345.6 929.5,345.7 928.5,345.3 927.5,345.7 926.5,345.3 925.5,345.8 924.5,345.6 923.5,345.5 922.5,345.8 921.5,345.5 920.5,345.6 919.5,345.3 918.5,345.6 917.5,345.5 916.5,345.4 915.5,345.3 914.5,345.6 913.5,345.4 912.5,345.3 911.5,345.8 910.5,345.5 909.5,345.6 908.5,345.6 907.5,345.6 906.5,345.7 905.5,345.7 904.5,345.4 903.5,345.3 902.5,345.3 901.5,345.6 900.5,345.7 899.5,345.4 898.5,345.5 897.5,345.8 896.5,345.5 895.5,345.2 894.5,345.2 893.5,345.4 892.5,345.2 891.5,345.8 890.5,345.8 889.5,345.3 888.5,345.2 887.5,345.3 886.5,345.5 885.5,345.6 884.5,345.4 883.5,345.7 882.5,345.7 881.5,345.2 880.5,345.6 879.5,345.3 878.5,345.5 877.5,345.3 876.5,345.5 875.5,345.4 874.5,345.7 873.5,345.6 872.5,345.3 871.5,345.7 870.5,345.6 869.5,345.6 868.5,345.5 867.5,345.3 866.5,345.5 865.5,345.5 864.5,345.6 863.5,345.4 862.5,345.2 861.5,345.6 860.5,345.6 859.5,345.4 858.5,345.6 857.5,345.3 856.5,345.3 855.5,345.7 854.5,345.8 853.5,345.5 852.5,345.3 851.5,345.5 850.5,345.7 849.5,345.7 848.5,345.5 847.5,345.8 846.5,345.3 845.5,345.2 844.5,345.4 843.5,345.2 842.5,345.5 841.5,345.8 840.5,345.7 839.5,345.8 838.5,345.4 837.5,345.3 836.5,345.4 835.5,345.5 834.5,345.8 833.5,345.6 832.5,345.3 831.5,345.6 830.5,345.4 829.5,345.8 828.5,345.5 827.5,345.6 826.5,345.3 825.5,345.4 824.5,345.4 823.5,345.6 822.5,345.5 821.5,345.3 820.5,345.5 819.5,345.2 818.5,345.6 817.5,345.2 816.5,345.5 815.5,345.3 814.5,345.4 813.5,345.4 812.5,345.7 811.5,345.7 810.5,345.2 809.5,345.5 808.5,345.4 807.5,345.3 806.5,345.6 805.5,345.7 804.5,345.5 803.5,345.6 802.5,345.2 801.5,345.7 800.5,345.4 799.5,345.6 798.5,345.6 797.5,345.5 796.5,345.5 795.5,345.7 794.5,345.6 793.5,345.5 792.5,345.8 791.5,345.2 790.5,345.7 789.5,345.3 788.5,345.8 787.5,345.3 786.5,345.7 785.5,345.6 784.5,345.7 783.5,345.3 782.5,345.7 781.5,345.2 780.5,345.6 779.5,345.2 778.5,345.6 777.5,345.3 776.5,345.3 775.5,345.6 774.5,345.2 773.5,345.6 772.5,345.5 771.5,345.8 770.5,345.5 769.5,345.4 768.5,345.6 767.5,345.3 766.5,345.4 765.5,345.5 764.5,345.3 763.5,345.3 762.5,345.7 761.5,345.2 760.5,345.7 759.5,345.3 758.5,345.5 757.5,345.6 756.5,345.6 755.5,345.6 754.5,345.7 753.5,345.5 752.5,345.5 751.5,345.7 750.5,345.4 749.5,345.7 748.5,345.6 747.5,345.5 746.5,345.6 745.5,345.2 744.5,345.5 743.5,345.3 742.5,345.4 741.5,345.4 740.5,345.5 739.5,345.6 738.5,345.8 737.5,345.7 736.5,345.2 735.5,345.2 734.5,345.4 733.5,345.7 732.5,345.5 731.5,345.3 730.5,345.2 729.5,345.5 728.5,345.3 727.5,345.6 726.5,345.5 725.5,345.8 724.5,345.2 723.5,345.5 722.5,345.3 721.5,345.4 720.5,345.2 719.5,345.5 718.5,345.7 717.5,345.5 716.5,345.2 715.5,345.3 714.5,345.7 713.5,345.2 712.5,345.4 711.5,345.4 710.5,345.2 709.5,345.6 708.5,345.5 707.5,345.4 706.5,345.8 705.5,345.5 704.5,345.4 703.5,345.4 702.5,345.5 701.5,345.4 700.5,345.3 699.5,345.3 698.5,345.7 697.5,345.5 696.5,345.7 695.5,345.6 694.5,345.4 693.5,345.6 692.5,345.8 691.5,345.7 690.5,345.7 689.5,345.5 688.5,345.4 687.5,345.3 686.5,345.3 685.5,345.4 684.5,345.4 683.5,345.6 682.5,345.6 681.5,345.3 680.5,345.4 679.5,345.4 678.5,345.6 677.5,345.4 676.5,345.5 675.5,345.3 674.5,345.3 673.5,345.4 672.5,345.5 671.5,345.5 670.5,345.6 669.5,345.3 668.5,345.8 667.5,345.6 666.5,345.6 665.5,345.4 664.5,345.7 663.5,345.6 662.5,345.5 661.5,345.6 660.5,345.2 659.5,345.3 658.5,345.4 657.5,345.5 656.5,345.3 655.5,345.3 654.5,345.7 653.5,345.8 652.5,345.2 651.5,345.2 650.5,345.7 649.5,345.7 648.5,345.8 647.5,345.4 646.5,345.4 645.5,345.5 644.5,345.7 643.5,345.6 642.5,345.5 641.5,345.6 640.5,345.7 639.5,345.6 638.5,345.5 637.5,345.4 636.5,345.6 635.5,345.3 634.5,345.6 633.5,345.6 632.5,345.6 631.5,345.3 630.5,345.6 629.5,345.7 628.5,345.7 627.5,345.7 626.5,345.6 625.5,345.6 624.5,345.6 623.5,345.3 622.5,345.3 621.5,345.6 620.5,345.5 619.5,345.7 618.5,345.3 617.5,345.7 616.5,345.6 615.5,345.2 614.5,345.8 613.5,345.2 612.5,345.3 611.5,345.6 610.5,345.6 609.5,345.8 608.5,345.4 607.5,345.3 606.5,345.7 605.5,345.6 604.5,345.6 603.5,345.4 602.5,345.6 601.5,345.5 600.5,345.2 599.5,345.4 598.5,345.5 597.5,345.6 596.5,345.6 595.5,345.4 594.5,345.7 593.5,345.8 592.5,345.5 591.5,345.4 590.5,345.3 589.5,345.3 588.5,345.7 587.5,345.7 586.5,345.6 585.5,345.5 584.5,345.8 583.5,345.3 582.5,345.7 581.5,345.3 580.5,345.3 579.5,345.3 578.5,345.3 577.5,345.5 576.5,345.8 575.5,345.8 574.5,345.6 573.5,345.3 572.5,345.5 571.5,345.3 570.5,345.6 569.5,345.7 568.5,345.3 567.5,345.8 566.5,345.5 565.5,345.3 564.5,345.7 563.5,345.7 562.5,345.8 561.5,345.4 560.5,345.2 559.5,345.2 558.5,345.5 557.5,345.2 556.5,345.7 555.5,345.2 554.5,345.3 553.5,345.8 552.5,345.5 551.5,345.5 550.5,345.5 549.5,345.4 548.5,345.4 547.5,345.5 546.5,345.4 545.5,345.5 544.5,345.3 543.5,345.7 542.5,345.6 541.5,345.6 540.5,345.5 539.5,345.3 538.5,345.5 537.5,345.2 536.5,345.5 535.5,345.6 534.5,345.4 533.5,345.7 532.5,345.5 531.5,345.3 530.5,345.5 529.5,345.3 528.5,345.6 527.5,345.7 526.5,345.2 525.5,345.3 524.5,345.5 523.5,345.6 522.5,345.7 521.5,345.4 520.5,345.3 519.5,345.8 518.5,345.6 517.5,345.3 516.5,345.6 515.5,345.6 514.5,345.6 513.5,345.7 512.5,345.6 511.5,345.2 510.5,345.4 509.5,345.8 508.5,345.8 507.5,345.3 506.5,345.6 505.5,345.4 504.5,345.7 503.5,345.6 502.5,345.6 501.5,345.3 500.5,345.5 499.5,345.6 498.5,345.6 497.5,345.6 496.5,345.5 495.5,345.3 494.5,345.4 493.5,345.3 492.5,345.3 491.5,345.5 490.5,345.4 489.5,345.7 488.5,345.3 487.5,345.5 486.5,345.6 485.5,345.6 484.5,345.5 483.5,345.5 482.5,345.2 481.5,345.6 480.5,345.6 479.5,345.5 478.5,345.4 477.5,345.6 476.5,345.6 475.5,345.7 474.5,345.8 473.5,345.4 472.5,345.3 471.5,345.3 470.5,345.6 469.5,345.3 468.5,345.6 467.5,345.5 466.5,345.4 465.5,345.6 464.5,345.4 463.5,345.4 462.5,345.4 461.5,345.7 460.5,345.3 459.5,345.2 458.5,345.7 457.5,345.2 456.5,345.3 455.5,345.8 454.5,345.5 453.5,345.4 452.5,345.8 451.5,345.5 450.5,345.2 449.5,345.6 448.5,345.7 447.5,345.3 446.5,345.7 445.5,345.7 444.5,345.5 443.5,345.3 442.5,345.5 441.5,345.4 440.5,345.7 439.5,345.5 438.5,345.7 437.5,345.7 436.5,345.2 435.5,345.2 434.5,345.3 433.5,345.8 432.5,345.2 431.5,345.4 430.5,345.7 429.5,345.8 428.5,345.5 427.5,345.8 426.5,345.7 425.5,345.4 424.5,345.7 423.5,345.7 422.5,345.5 421.5,345.6 420.5,345.2 419.5,345.3 418.5,345.3 417.5,345.7 416.5,345.6 415.5,345.3 414.5,345.3 413.5,345.6 412.5,345.3 411.5,345.2 410.5,345.8 409.5,345.3 408.5,345.4 407.5,345.7 406.5,345.3 405.5,345.4 404.5,345.3 403.5,345.4 402.5,345.3 401.5,345.6 400.5,345.6 399.5,345.5 398.5,345.7 397.5,345.3 396.5,345.4 395.5,345.5 394.5,345.5 393.5,345.6 392.5,345.5 391.5,345.4 390.5,345.4 389.5,345.2 388.5,345.2 387.5,345.4 386.5,345.5 385.5,345.7 384.5,345.3 383.5,345.6 382.5,345.6 381.5,345.6 380.5,345.7 379.5,345.2 378.5,345.5 377.5,345.4 376.5,345.4 375.5,345.5 374.5,345.3 373.5,345.3 372.5,345.8 371.5,345.6 370.5,345.3 369.5,345.6 368.5,345.7 367.5,345.2 366.5,345.4 365.5,345.4 364.5,345.4 363.5,345.5 362.5,345.5 361.5,345.4 360.5,345.6 359.5,345.6 358.5,345.5 357.5,345.6 356.5,345.5 355.5,345.7 354.5,345.2 353.5,345.2 352.5,345.6 351.5,345.8 350.5,345.2 349.5,345.3 348.5,345.2 347.5,345.4 346.5,345.2 345.5,344.6 344.5,344.3 343.5,344.0 342.5,343.5 341.5,343.6 340.5,342.8 339.5,341.3" fill="#6464dc"/><rect x="1229.5" y="297" width="53.5" height="5" fill="#3232c8"/><rect x="1229.5" y="298" width="53.5" height="3" fill="#6464dc"/><rect x="1257" y="297" width="10" height="1" fill="#7c7ccc"/><rect x="1258" y="301" width="9" height="1" fill="#7c7ccc"/><rect x="1267.6" y="297" width="1.6" height="5" fill="#c0c0c0"/><rect x="1267.6" y="299" width="1.6" height="1" fill="#3232c8"/><rect x="1283" y="299" width="56" height="1" fill="#3232c8"/><path d="M146.500 235h7M150 231.5l-3.500 3.500 3.500 3.500" stroke="#000" stroke-width="1.250" fill="none"/><path d="M146.500 364h7M150 360.5l-3.500 3.500 3.500 3.500" stroke="#000" stroke-width="1.250" fill="none"/></svg><div style="left:11.5px;top:373px;width:1547px;height:154px;background:#b4b486;"></div><div style="left:11.5px;top:374.3px;width:1547px;height:151.2px;background:#f2f296;"></div><div style="left:15px;top:377px;width:1540px;height:146px;background:#000;"></div><div style="left:16px;top:378px;width:95px;height:143px;background:#e8e8e6;"></div><div style="left:112px;top:378px;width:32px;height:143px;background:#e8e8e6;"></div><div style="left:143px;top:378px;width:1px;height:143px;background:#dcdcda;"></div><div style="left:16px;top:378px;width:95px;height:15px;border-bottom:1px solid #8c8c8c;"></div><div style="left:16px;top:393px;width:95px;height:1px;background:#fbfbf9;"></div><div style="left:31px;top:378px;width:1px;height:15px;background:#9a9a9a;"></div><div style="left:32px;top:378px;width:1px;height:15px;background:#fbfbf9;"></div><svg style="left:18px;top:380px" width="12" height="12" viewBox="0 0 12 12" ><path d="M2.500 2.500l7 7M9.500 2.500l-7 7" stroke="#000" stroke-width="1.500"/></svg><span style="left:34px;top:380.3px;font-size:10.670px;">Audio Trac</span><svg style="left:95px;top:381px" width="13" height="8" viewBox="0 0 13 8" ><polygon points="0.800,0.800 12,0.800 6.400,6.800" fill="#000"/></svg><span style="left:19px;top:395.8px;font-size:10.670px;">Mono, 48000Hz</span><span style="left:19px;top:411.5px;font-size:10.670px;">24-bit PCM</span><div style="left:16px;top:427px;width:95px;height:1px;background:#8c8c8c;"></div><div style="left:16px;top:428px;width:95px;height:14px;background:#e8e8e6;border-top:1px solid #fbfbf9;"></div><div style="left:16px;top:442px;width:95px;height:1px;background:#8c8c8c;"></div><div style="left:16px;top:443px;width:95px;height:1px;background:#fbfbf9;"></div><div style="left:62px;top:428px;width:1.5px;height:14px;background:#8c8c8c;"></div><div style="left:63.5px;top:428px;width:1px;height:14px;background:#fbfbf9;"></div><span style="left:39.3px;top:430px;font-size:10.670px;transform:translateX(-50%);">Mute</span><span style="left:86.5px;top:430px;font-size:10.670px;transform:translateX(-50%);">Solo</span><svg style="left:29.5px;top:456px" width="73.5" height="12" viewBox="0 0 73.5 12" ><rect x="0" y="8" width="71.5" height="1" fill="#8e8e8c"/><rect x="0" y="9" width="71.5" height="1" fill="#f4f4f2"/><rect x="1.0" y="3" width="1" height="5" fill="#fbfbf9"/><rect x="2.0" y="3" width="1" height="5" fill="#b4b4b2"/><rect x="7.8" y="5" width="1" height="3" fill="#fbfbf9"/><rect x="8.8" y="5" width="1" height="3" fill="#b4b4b2"/><rect x="14.6" y="5" width="1" height="3" fill="#fbfbf9"/><rect x="15.6" y="5" width="1" height="3" fill="#b4b4b2"/><rect x="21.4" y="5" width="1" height="3" fill="#fbfbf9"/><rect x="22.4" y="5" width="1" height="3" fill="#b4b4b2"/><rect x="28.2" y="5" width="1" height="3" fill="#fbfbf9"/><rect x="29.2" y="5" width="1" height="3" fill="#b4b4b2"/><rect x="35.0" y="5" width="1" height="3" fill="#fbfbf9"/><rect x="36.0" y="5" width="1" height="3" fill="#b4b4b2"/><rect x="41.8" y="5" width="1" height="3" fill="#fbfbf9"/><rect x="42.8" y="5" width="1" height="3" fill="#b4b4b2"/><rect x="48.6" y="5" width="1" height="3" fill="#fbfbf9"/><rect x="49.6" y="5" width="1" height="3" fill="#b4b4b2"/><rect x="55.4" y="5" width="1" height="3" fill="#fbfbf9"/><rect x="56.4" y="5" width="1" height="3" fill="#b4b4b2"/><rect x="62.2" y="5" width="1" height="3" fill="#fbfbf9"/><rect x="63.2" y="5" width="1" height="3" fill="#b4b4b2"/><rect x="69.0" y="3" width="1" height="5" fill="#fbfbf9"/><rect x="70.0" y="3" width="1" height="5" fill="#b4b4b2"/></svg><svg style="left:57.3px;top:456px" width="12" height="15" viewBox="0 0 12 15" ><path d="M3 .800h6q2.500 1.200 2.500 3v4.600l-5.500 5.400-5.500-5.400v-4.600q0-1.800 2.500-3z" fill="url(#tg)" stroke="#4a4a62" stroke-width="1"/><path d="M3.700 4.200h4.600M3.700 6h4.600M3.700 7.800h4.600" stroke="#f6f6ff" stroke-width=".9"/></svg><div style="left:29px;top:452.5px;width:4px;height:1px;background:#000;"></div><div style="left:93px;top:452.5px;width:5px;height:1px;background:#000;"></div><div style="left:95px;top:450.5px;width:1px;height:5px;background:#000;"></div><svg style="left:29.5px;top:486.3px" width="73.5" height="12" viewBox="0 0 73.5 12" ><rect x="0" y="8" width="71.5" height="1" fill="#8e8e8c"/><rect x="0" y="9" width="71.5" height="1" fill="#f4f4f2"/><rect x="1.0" y="3" width="1" height="5" fill="#fbfbf9"/><rect x="2.0" y="3" width="1" height="5" fill="#b4b4b2"/><rect x="7.8" y="5" width="1" height="3" fill="#fbfbf9"/><rect x="8.8" y="5" width="1" height="3" fill="#b4b4b2"/><rect x="14.6" y="5" width="1" height="3" fill="#fbfbf9"/><rect x="15.6" y="5" width="1" height="3" fill="#b4b4b2"/><rect x="21.4" y="5" width="1" height="3" fill="#fbfbf9"/><rect x="22.4" y="5" width="1" height="3" fill="#b4b4b2"/><rect x="28.2" y="5" width="1" height="3" fill="#fbfbf9"/><rect x="29.2" y="5" width="1" height="3" fill="#b4b4b2"/><rect x="35.0" y="5" width="1" height="3" fill="#fbfbf9"/><rect x="36.0" y="5" width="1" height="3" fill="#b4b4b2"/><rect x="41.8" y="5" width="1" height="3" fill="#fbfbf9"/><rect x="42.8" y="5" width="1" height="3" fill="#b4b4b2"/><rect x="48.6" y="5" width="1" height="3" fill="#fbfbf9"/><rect x="49.6" y="5" width="1" height="3" fill="#b4b4b2"/><rect x="55.4" y="5" width="1" height="3" fill="#fbfbf9"/><rect x="56.4" y="5" width="1" height="3" fill="#b4b4b2"/><rect x="62.2" y="5" width="1" height="3" fill="#fbfbf9"/><rect x="63.2" y="5" width="1" height="3" fill="#b4b4b2"/><rect x="69.0" y="3" width="1" height="5" fill="#fbfbf9"/><rect x="70.0" y="3" width="1" height="5" fill="#b4b4b2"/></svg><svg style="left:57.3px;top:486.3px" width="12" height="15" viewBox="0 0 12 15" ><path d="M3 .800h6q2.500 1.200 2.500 3v4.600l-5.500 5.400-5.500-5.400v-4.600q0-1.800 2.500-3z" fill="url(#tg)" stroke="#4a4a62" stroke-width="1"/><path d="M3.700 4.200h4.600M3.700 6h4.600M3.700 7.800h4.600" stroke="#f6f6ff" stroke-width=".9"/></svg><span style="left:29.2px;top:477.3px;font-size:13.330px;">L</span><span style="left:91.5px;top:477.3px;font-size:13.330px;">R</span><div style="left:34px;top:503px;width:62px;height:18px;background:#e8e8e6;border:1px solid #fbfbf9;border-top-color:#9c9c9a;border-left-color:#b4b4b2;border-bottom:none;"></div><svg style="left:59px;top:509px" width="12" height="7" viewBox="0 0 12 7" ><polygon points="0.500,6.500 11.500,6.500 6,0.800" fill="#a8a8a8"/></svg><span style="left:0px;top:408.7px;font-size:12px;left:auto;right:1450.7px;">0.5</span><span style="left:0px;top:443.4px;font-size:12px;left:auto;right:1450.7px;font-weight:bold;">0.0</span><span style="left:0px;top:480px;font-size:12px;left:auto;right:1450.3px;letter-spacing:0.400px;">-0.5</span><span style="left:0px;top:507.2px;font-size:12px;left:auto;right:1450.3px;font-weight:bold;letter-spacing:0.400px;">-1.0</span><div style="left:140px;top:414px;width:3px;height:1px;background:#000;"></div><div style="left:140px;top:449.3px;width:3px;height:1px;background:#000;"></div><div style="left:140px;top:484.5px;width:3px;height:1px;background:#000;"></div><div style="left:138px;top:519.5px;width:4px;height:1px;background:#000;"></div><svg style="left:144px;top:378px" width="1409" height="143" viewBox="144 378 1409 143" shape-rendering="auto"><rect x="144" y="378" width="1391" height="143" fill="#c0c0c0"/><rect x="1535" y="378" width="18" height="143" fill="#d6d6d6"/><rect x="1535" y="378" width="1" height="143" fill="#7e7e7e"/><polygon points="144.0,447.4 145.0,446.7 146.0,447.2 147.0,447.0 148.0,447.1 149.0,446.2 150.0,446.4 151.0,446.7 152.0,444.9 153.0,446.7 154.0,446.8 155.0,445.7 156.0,447.0 157.0,446.4 158.0,445.9 159.0,447.0 160.0,443.8 161.0,445.8 162.0,447.0 163.0,446.1 164.0,446.2 165.0,447.3 166.0,446.8 167.0,446.2 168.0,445.7 169.0,445.6 170.0,446.8 171.0,446.3 172.0,446.2 173.0,447.1 174.0,446.3 175.0,447.2 176.0,445.8 177.0,445.6 178.0,446.6 179.0,446.6 180.0,446.4 181.0,447.2 182.0,447.2 183.0,446.8 184.0,445.9 185.0,446.5 185.0,451.0 184.0,452.1 183.0,452.1 182.0,450.9 181.0,451.6 180.0,451.5 179.0,451.9 178.0,451.7 177.0,450.8 176.0,451.3 175.0,452.0 174.0,451.3 173.0,451.6 172.0,452.8 171.0,451.1 170.0,450.5 169.0,450.5 168.0,451.7 167.0,451.9 166.0,450.5 165.0,452.2 164.0,450.8 163.0,450.8 162.0,451.8 161.0,451.4 160.0,451.9 159.0,452.1 158.0,450.7 157.0,450.5 156.0,450.8 155.0,452.2 154.0,450.5 153.0,452.1 152.0,451.9 151.0,452.5 150.0,453.0 149.0,452.1 148.0,451.9 147.0,450.6 146.0,451.3 145.0,450.9 144.0,450.5" fill="#3232c8"/><polygon points="144.0,447.8 145.0,447.9 146.0,447.8 147.0,448.2 148.0,447.8 149.0,448.0 150.0,447.8 151.0,448.1 152.0,448.0 153.0,448.0 154.0,448.0 155.0,447.8 156.0,447.9 157.0,447.6 158.0,447.9 159.0,448.1 160.0,447.8 161.0,447.9 162.0,448.1 163.0,447.9 164.0,448.2 165.0,448.0 166.0,447.9 167.0,447.8 168.0,447.6 169.0,447.8 170.0,448.2 171.0,447.9 172.0,448.0 173.0,447.8 174.0,447.7 175.0,448.1 176.0,447.7 177.0,448.0 178.0,448.1 179.0,447.9 180.0,447.9 181.0,448.0 182.0,448.0 183.0,447.9 184.0,447.8 185.0,448.1 185.0,450.1 184.0,450.2 183.0,449.7 182.0,449.9 181.0,449.7 180.0,449.8 179.0,449.8 178.0,450.2 177.0,450.2 176.0,450.1 175.0,450.0 174.0,450.0 173.0,450.0 172.0,450.0 171.0,449.7 170.0,449.6 169.0,450.0 168.0,449.6 167.0,449.8 166.0,449.8 165.0,449.9 164.0,450.0 163.0,449.8 162.0,449.9 161.0,450.1 160.0,450.1 159.0,449.9 158.0,449.9 157.0,449.6 156.0,449.6 155.0,450.1 154.0,449.8 153.0,450.1 152.0,449.7 151.0,449.8 150.0,449.8 149.0,450.0 148.0,449.9 147.0,449.8 146.0,449.7 145.0,449.8 144.0,449.7" fill="#6464dc"/><polygon points="203.5,447.3 204.5,446.9 205.5,446.5 206.5,447.2 207.5,445.9 208.5,445.7 209.5,444.8 210.5,445.3 211.5,445.9 212.5,445.7 213.5,447.3 214.5,445.6 215.5,447.0 216.5,447.3 217.5,447.1 218.5,445.7 219.5,445.9 220.5,446.4 221.5,446.0 222.5,447.0 223.5,447.0 224.5,445.6 225.5,447.3 226.5,445.9 227.5,446.1 228.5,447.3 229.5,447.3 230.5,446.7 231.5,445.0 232.5,446.2 233.5,446.5 234.5,445.8 235.5,446.5 236.5,447.0 237.5,446.1 238.5,445.9 239.5,446.3 240.5,446.2 241.5,446.9 242.5,445.7 243.5,445.7 244.5,446.8 245.5,445.7 246.5,447.3 247.5,447.1 248.5,447.3 249.5,445.6 250.5,446.0 251.5,446.5 252.5,446.7 253.5,447.3 254.5,444.9 255.5,446.1 256.5,446.0 257.5,447.2 258.5,445.7 259.5,447.0 260.5,446.6 261.5,447.4 262.5,446.9 263.5,447.2 264.5,445.8 265.5,445.7 266.5,446.0 267.5,446.3 268.5,446.5 269.5,447.1 270.5,445.6 271.5,446.8 272.5,446.5 273.5,445.6 274.5,445.5 275.5,446.0 276.5,447.2 277.5,445.7 278.5,446.5 279.5,446.5 280.5,446.9 281.5,447.0 282.5,446.7 283.5,445.9 284.5,445.7 285.5,446.9 286.5,446.4 287.5,446.4 288.5,446.4 289.5,446.6 290.5,445.7 291.5,445.6 292.5,447.4 293.5,447.1 294.5,446.6 295.5,445.7 296.5,446.3 297.5,447.3 298.5,446.9 299.5,446.5 300.5,447.4 301.5,446.5 302.5,445.9 303.5,446.1 304.5,446.8 305.5,446.8 306.5,446.0 307.5,446.3 308.5,446.2 309.5,447.4 310.5,446.9 311.5,446.3 312.5,446.9 313.5,446.3 314.5,445.8 315.5,447.3 316.5,446.8 317.5,446.2 318.5,446.3 319.5,447.3 320.5,446.1 321.5,446.0 322.5,447.1 323.5,446.3 324.5,447.2 325.5,446.4 326.5,447.1 327.5,446.6 328.5,445.7 329.5,445.9 330.5,446.9 331.5,446.1 332.5,446.8 333.5,446.4 334.5,446.8 335.5,447.2 336.5,447.0 337.5,447.2 338.5,446.6 338.5,450.6 337.5,451.0 336.5,451.0 335.5,451.5 334.5,451.9 333.5,451.4 332.5,450.5 331.5,451.0 330.5,452.0 329.5,450.8 328.5,451.2 327.5,451.8 326.5,452.1 325.5,450.9 324.5,450.9 323.5,450.8 322.5,451.2 321.5,451.4 320.5,451.0 319.5,451.3 318.5,451.8 317.5,451.1 316.5,452.0 315.5,452.0 314.5,451.4 313.5,452.0 312.5,450.6 311.5,451.8 310.5,450.7 309.5,451.1 308.5,450.5 307.5,450.7 306.5,450.6 305.5,451.2 304.5,452.1 303.5,450.8 302.5,452.0 301.5,450.9 300.5,451.2 299.5,450.8 298.5,451.5 297.5,452.0 296.5,451.8 295.5,451.8 294.5,450.5 293.5,451.0 292.5,451.6 291.5,450.6 290.5,452.2 289.5,450.5 288.5,451.7 287.5,451.1 286.5,453.0 285.5,450.9 284.5,451.0 283.5,451.0 282.5,451.2 281.5,451.8 280.5,451.1 279.5,450.6 278.5,450.5 277.5,451.2 276.5,451.0 275.5,450.6 274.5,451.5 273.5,452.6 272.5,451.8 271.5,452.0 270.5,451.8 269.5,450.6 268.5,451.8 267.5,452.4 266.5,451.9 265.5,451.1 264.5,454.0 263.5,451.4 262.5,452.1 261.5,452.1 260.5,450.8 259.5,451.5 258.5,450.6 257.5,451.7 256.5,451.9 255.5,451.5 254.5,452.0 253.5,451.9 252.5,451.9 251.5,451.8 250.5,450.9 249.5,451.7 248.5,450.6 247.5,451.8 246.5,452.3 245.5,452.0 244.5,451.3 243.5,451.2 242.5,451.5 241.5,451.7 240.5,450.7 239.5,452.0 238.5,451.2 237.5,453.3 236.5,451.8 235.5,451.3 234.5,451.0 233.5,451.4 232.5,451.3 231.5,451.6 230.5,450.8 229.5,450.5 228.5,450.6 227.5,450.6 226.5,451.7 225.5,450.5 224.5,450.7 223.5,450.9 222.5,450.4 221.5,450.8 220.5,450.6 219.5,452.0 218.5,450.9 217.5,450.5 216.5,451.6 215.5,452.1 214.5,451.2 213.5,451.5 212.5,451.3 211.5,450.9 210.5,452.1 209.5,451.4 208.5,451.3 207.5,451.6 206.5,452.0 205.5,451.6 204.5,451.9 203.5,451.4" fill="#3232c8"/><polygon points="203.5,448.1 204.5,448.0 205.5,448.1 206.5,448.0 207.5,447.9 208.5,447.8 209.5,448.0 210.5,448.0 211.5,448.1 212.5,447.7 213.5,448.0 214.5,447.7 215.5,448.2 216.5,448.2 217.5,447.9 218.5,447.9 219.5,447.7 220.5,447.7 221.5,447.9 222.5,448.0 223.5,447.8 224.5,447.9 225.5,448.0 226.5,448.0 227.5,448.2 228.5,447.8 229.5,448.2 230.5,448.1 231.5,447.8 232.5,447.8 233.5,447.8 234.5,447.8 235.5,447.7 236.5,447.6 237.5,447.6 238.5,448.0 239.5,448.0 240.5,448.1 241.5,447.9 242.5,448.1 243.5,447.6 244.5,447.7 245.5,448.1 246.5,447.8 247.5,447.8 248.5,448.1 249.5,447.7 250.5,447.8 251.5,447.9 252.5,447.6 253.5,448.1 254.5,448.2 255.5,447.8 256.5,447.8 257.5,448.2 258.5,447.8 259.5,447.8 260.5,448.0 261.5,448.1 262.5,447.7 263.5,447.7 264.5,447.9 265.5,448.1 266.5,447.9 267.5,447.8 268.5,447.9 269.5,447.7 270.5,448.1 271.5,447.7 272.5,447.8 273.5,448.1 274.5,448.1 275.5,447.7 276.5,448.0 277.5,447.7 278.5,447.6 279.5,448.0 280.5,447.8 281.5,448.1 282.5,447.9 283.5,448.1 284.5,447.7 285.5,448.1 286.5,447.6 287.5,448.0 288.5,448.0 289.5,448.2 290.5,448.1 291.5,448.2 292.5,448.1 293.5,447.6 294.5,447.8 295.5,448.1 296.5,448.1 297.5,447.9 298.5,447.7 299.5,447.9 300.5,448.0 301.5,447.8 302.5,448.1 303.5,448.1 304.5,447.9 305.5,447.7 306.5,447.9 307.5,448.0 308.5,447.9 309.5,447.7 310.5,448.1 311.5,448.1 312.5,447.9 313.5,448.0 314.5,448.1 315.5,448.1 316.5,447.7 317.5,448.1 318.5,448.0 319.5,447.6 320.5,448.0 321.5,447.6 322.5,447.7 323.5,447.9 324.5,447.9 325.5,448.2 326.5,448.0 327.5,447.9 328.5,447.6 329.5,448.2 330.5,447.7 331.5,447.6 332.5,447.7 333.5,447.9 334.5,447.8 335.5,448.0 336.5,448.2 337.5,448.0 338.5,447.8 338.5,450.2 337.5,449.7 336.5,449.6 335.5,449.7 334.5,450.0 333.5,449.9 332.5,450.0 331.5,449.8 330.5,450.1 329.5,450.0 328.5,449.6 327.5,449.9 326.5,449.7 325.5,449.7 324.5,450.2 323.5,449.6 322.5,449.6 321.5,449.9 320.5,449.9 319.5,450.0 318.5,449.7 317.5,450.0 316.5,449.8 315.5,449.6 314.5,450.0 313.5,450.2 312.5,449.6 311.5,450.2 310.5,450.0 309.5,449.9 308.5,449.8 307.5,450.0 306.5,450.1 305.5,449.6 304.5,449.9 303.5,449.9 302.5,450.0 301.5,449.8 300.5,449.8 299.5,450.1 298.5,449.8 297.5,450.1 296.5,449.7 295.5,449.6 294.5,450.2 293.5,450.1 292.5,450.1 291.5,449.7 290.5,449.8 289.5,449.9 288.5,449.9 287.5,449.9 286.5,449.7 285.5,450.1 284.5,449.7 283.5,449.6 282.5,450.1 281.5,449.8 280.5,449.7 279.5,450.0 278.5,450.2 277.5,449.7 276.5,449.7 275.5,450.1 274.5,449.9 273.5,450.1 272.5,450.1 271.5,449.9 270.5,449.6 269.5,449.7 268.5,450.0 267.5,449.7 266.5,450.0 265.5,450.1 264.5,449.8 263.5,449.7 262.5,449.6 261.5,449.6 260.5,450.1 259.5,449.9 258.5,449.9 257.5,449.8 256.5,450.2 255.5,449.8 254.5,450.2 253.5,450.2 252.5,449.7 251.5,449.9 250.5,450.1 249.5,449.7 248.5,450.0 247.5,449.7 246.5,450.0 245.5,450.0 244.5,450.0 243.5,449.6 242.5,449.9 241.5,449.7 240.5,450.1 239.5,450.2 238.5,449.9 237.5,450.1 236.5,449.8 235.5,449.7 234.5,449.7 233.5,449.7 232.5,450.1 231.5,449.8 230.5,450.1 229.5,450.1 228.5,449.7 227.5,450.1 226.5,450.1 225.5,449.9 224.5,449.7 223.5,450.2 222.5,449.7 221.5,450.0 220.5,449.7 219.5,450.2 218.5,449.9 217.5,450.0 216.5,450.0 215.5,449.7 214.5,450.1 213.5,449.6 212.5,449.9 211.5,450.1 210.5,449.8 209.5,449.7 208.5,450.0 207.5,450.2 206.5,449.8 205.5,449.6 204.5,450.1 203.5,449.9" fill="#6464dc"/><rect x="173.3" y="383" width="1" height="66" fill="#3232c8"/><rect x="174.3" y="440" width="1.2" height="40" fill="#3232c8"/><rect x="176" y="436" width="1.2" height="16" fill="#3232c8"/><rect x="177.3" y="446" width="1" height="9" fill="#3232c8"/><rect x="185.5" y="378" width="4.2" height="143" fill="#3232c8"/><rect x="186.6" y="378" width="2" height="143" fill="#a0a0ec"/><rect x="189.5" y="378" width="5" height="1" fill="#3232c8"/><rect x="189.6" y="379" width="1.4" height="30" fill="#b0b0ee"/><path d="M194 378 L194.800 390 L196 405 L197.300 420 L198.800 433 L200.500 442 L202.500 447 L205 449" stroke="#3232c8" stroke-width="1.300" fill="none"/><rect x="190" y="449" width="14" height="1" fill="#000"/><rect x="277" y="449" width="1" height="13" fill="#3232c8"/><polygon points="296.0,445.5 297.0,445.4 298.0,445.2 299.0,445.9 300.0,445.4 301.0,445.1 302.0,445.0 303.0,446.0 304.0,445.4 305.0,445.4 306.0,445.6 307.0,444.9 308.0,445.6 308.0,451.9 307.0,451.7 306.0,452.2 305.0,451.6 304.0,451.9 303.0,452.1 302.0,452.8 301.0,452.0 300.0,452.7 299.0,452.8 298.0,452.7 297.0,452.3 296.0,452.2" fill="#3232c8"/><polygon points="296.0,447.4 297.0,447.2 298.0,447.7 299.0,447.5 300.0,447.1 301.0,447.3 302.0,447.6 303.0,447.5 304.0,447.2 305.0,447.4 306.0,447.7 307.0,447.2 308.0,447.6 308.0,450.6 307.0,450.5 306.0,450.6 305.0,450.4 304.0,450.5 303.0,450.3 302.0,450.4 301.0,450.5 300.0,450.4 299.0,450.6 298.0,450.2 297.0,450.2 296.0,450.3" fill="#6464dc"/><rect x="339" y="391" width="1.2" height="114" fill="#3232c8"/><polygon points="340.0,403.5 341.0,403.5 342.0,403.5 343.0,404.5 344.0,403.5 345.0,404.6 346.0,403.8 347.0,403.5 348.0,403.5 349.0,403.6 350.0,404.6 351.0,403.2 352.0,403.8 353.0,403.4 354.0,404.6 355.0,403.7 356.0,404.8 357.0,403.6 358.0,403.9 359.0,404.3 360.0,404.7 361.0,403.6 362.0,404.6 363.0,403.6 364.0,403.4 365.0,404.1 366.0,404.1 367.0,404.4 368.0,404.4 368.0,494.5 367.0,494.8 366.0,495.3 365.0,495.1 364.0,495.3 363.0,495.3 362.0,494.6 361.0,495.6 360.0,494.6 359.0,494.3 358.0,495.2 357.0,495.6 356.0,494.2 355.0,495.2 354.0,494.3 353.0,495.4 352.0,494.9 351.0,495.6 350.0,494.6 349.0,495.5 348.0,495.8 347.0,495.8 346.0,494.8 345.0,494.1 344.0,495.2 343.0,494.7 342.0,495.7 341.0,495.7 340.0,495.2" fill="#3232c8"/><polygon points="340.0,419.5 341.0,418.5 342.0,417.5 343.0,416.8 344.0,417.6 345.0,417.3 346.0,417.4 347.0,418.0 348.0,417.8 349.0,417.9 350.0,417.1 351.0,417.9 352.0,417.4 353.0,417.2 354.0,417.3 355.0,417.5 356.0,417.9 357.0,417.6 358.0,417.1 359.0,417.9 360.0,417.1 361.0,417.9 362.0,417.1 363.0,417.4 364.0,417.0 365.0,417.3 366.0,417.5 367.0,417.8 368.0,417.1 368.0,481.9 367.0,481.2 366.0,481.5 365.0,481.7 364.0,482.0 363.0,481.6 362.0,481.9 361.0,481.1 360.0,481.9 359.0,481.1 358.0,481.9 357.0,481.4 356.0,481.1 355.0,481.5 354.0,481.7 353.0,481.8 352.0,481.6 351.0,481.1 350.0,481.9 349.0,481.1 348.0,481.2 347.0,481.0 346.0,481.6 345.0,481.7 344.0,481.4 343.0,482.2 342.0,481.5 341.0,480.5 340.0,479.5" fill="#6464dc"/><rect x="368" y="378" width="1080" height="143" fill="#6464dc"/><rect x="368" y="378" width="1080" height="0.7" fill="#3232c8"/><rect x="368" y="520.3" width="1080" height="0.7" fill="#3232c8"/><rect x="1447.2" y="378" width="0.8" height="143" fill="#3232c8"/><polygon points="1448.0,429.7 1449.0,429.6 1450.0,429.0 1451.0,429.2 1452.0,429.7 1453.0,429.3 1454.0,429.2 1455.0,429.3 1456.0,428.8 1457.0,429.3 1458.0,429.2 1459.0,428.9 1460.0,429.2 1461.0,429.3 1462.0,429.6 1463.0,428.9 1464.0,428.8 1465.0,429.6 1466.0,429.1 1467.0,429.0 1468.0,429.1 1469.0,428.8 1470.0,429.2 1471.0,429.5 1472.0,428.9 1473.0,428.3 1474.0,428.7 1475.0,427.9 1476.0,428.8 1477.0,428.1 1478.0,428.2 1479.0,427.9 1480.0,429.6 1481.0,429.6 1482.0,429.5 1483.0,429.6 1484.0,429.3 1485.0,429.7 1486.0,428.7 1487.0,429.0 1488.0,428.8 1489.0,429.4 1490.0,429.2 1491.0,429.0 1492.0,428.8 1493.0,429.0 1494.0,429.5 1494.0,468.9 1493.0,469.4 1492.0,469.6 1491.0,469.4 1490.0,469.2 1489.0,469.0 1488.0,469.6 1487.0,469.4 1486.0,469.7 1485.0,468.7 1484.0,469.1 1483.0,468.8 1482.0,468.9 1481.0,468.8 1480.0,468.8 1479.0,470.5 1478.0,470.2 1477.0,470.3 1476.0,469.6 1475.0,470.5 1474.0,469.7 1473.0,470.1 1472.0,469.5 1471.0,468.9 1470.0,469.2 1469.0,469.6 1468.0,469.3 1467.0,469.4 1466.0,469.3 1465.0,468.8 1464.0,469.6 1463.0,469.5 1462.0,468.8 1461.0,469.1 1460.0,469.2 1459.0,469.5 1458.0,469.2 1457.0,469.1 1456.0,469.6 1455.0,469.1 1454.0,469.2 1453.0,469.1 1452.0,468.7 1451.0,469.2 1450.0,469.4 1449.0,468.8 1448.0,468.7" fill="#3232c8"/><polygon points="1448.0,434.8 1449.0,435.0 1450.0,434.8 1451.0,435.0 1452.0,435.1 1453.0,434.7 1454.0,434.8 1455.0,435.3 1456.0,434.7 1457.0,435.3 1458.0,435.0 1459.0,434.9 1460.0,434.9 1461.0,435.4 1462.0,434.6 1463.0,435.2 1464.0,435.0 1465.0,434.7 1466.0,434.7 1467.0,435.3 1468.0,434.8 1469.0,435.1 1470.0,434.8 1471.0,434.7 1472.0,435.4 1473.0,435.1 1474.0,434.9 1475.0,435.0 1476.0,435.0 1477.0,434.6 1478.0,435.4 1479.0,434.9 1480.0,435.3 1481.0,434.9 1482.0,434.8 1483.0,435.0 1484.0,435.4 1485.0,434.7 1486.0,435.3 1487.0,434.6 1488.0,434.7 1489.0,434.8 1490.0,434.7 1491.0,434.7 1492.0,435.1 1493.0,435.3 1494.0,434.7 1494.0,463.7 1493.0,463.1 1492.0,463.3 1491.0,463.7 1490.0,463.7 1489.0,463.6 1488.0,463.7 1487.0,463.8 1486.0,463.1 1485.0,463.7 1484.0,463.0 1483.0,463.4 1482.0,463.6 1481.0,463.5 1480.0,463.1 1479.0,463.5 1478.0,463.0 1477.0,463.8 1476.0,463.4 1475.0,463.4 1474.0,463.5 1473.0,463.3 1472.0,463.0 1471.0,463.7 1470.0,463.6 1469.0,463.3 1468.0,463.6 1467.0,463.1 1466.0,463.7 1465.0,463.7 1464.0,463.4 1463.0,463.2 1462.0,463.8 1461.0,463.0 1460.0,463.5 1459.0,463.5 1458.0,463.4 1457.0,463.1 1456.0,463.7 1455.0,463.1 1454.0,463.6 1453.0,463.7 1452.0,463.3 1451.0,463.4 1450.0,463.6 1449.0,463.4 1448.0,463.6" fill="#6464dc"/><polygon points="1494.0,447.8 1495.0,447.6 1496.0,448.0 1497.0,447.8 1498.0,448.0 1499.0,448.1 1500.0,447.8 1501.0,448.0 1502.0,447.8 1503.0,447.4 1504.0,448.1 1505.0,447.5 1506.0,448.0 1507.0,447.3 1508.0,447.4 1509.0,447.9 1510.0,447.3 1511.0,447.4 1512.0,448.0 1513.0,447.7 1514.0,447.4 1515.0,447.2 1516.0,447.9 1517.0,447.8 1518.0,447.3 1519.0,447.1 1520.0,448.0 1521.0,448.0 1522.0,447.3 1523.0,447.8 1524.0,447.7 1525.0,447.2 1526.0,447.4 1527.0,447.4 1528.0,447.2 1529.0,447.4 1530.0,447.3 1531.0,447.5 1532.0,447.5 1533.0,448.0 1534.0,447.2 1535.0,447.2 1535.0,451.1 1534.0,451.0 1533.0,451.1 1532.0,451.7 1531.0,451.2 1530.0,451.1 1529.0,451.8 1528.0,451.2 1527.0,451.0 1526.0,451.3 1525.0,451.0 1524.0,451.2 1523.0,451.7 1522.0,451.4 1521.0,451.1 1520.0,451.0 1519.0,451.4 1518.0,451.6 1517.0,451.0 1516.0,451.4 1515.0,451.1 1514.0,451.4 1513.0,451.9 1512.0,451.0 1511.0,451.8 1510.0,451.9 1509.0,451.4 1508.0,451.8 1507.0,451.0 1506.0,451.7 1505.0,451.7 1504.0,451.2 1503.0,451.0 1502.0,450.9 1501.0,451.8 1500.0,451.5 1499.0,451.4 1498.0,451.1 1497.0,451.8 1496.0,451.5 1495.0,451.3 1494.0,451.8" fill="#3232c8"/><polygon points="1494.0,448.6 1495.0,449.0 1496.0,448.7 1497.0,448.8 1498.0,448.6 1499.0,448.8 1500.0,448.6 1501.0,448.9 1502.0,448.6 1503.0,448.8 1504.0,448.9 1505.0,448.9 1506.0,448.7 1507.0,449.0 1508.0,448.8 1509.0,449.0 1510.0,449.0 1511.0,448.9 1512.0,448.9 1513.0,448.9 1514.0,448.7 1515.0,448.8 1516.0,448.7 1517.0,448.6 1518.0,448.6 1519.0,448.6 1520.0,448.8 1521.0,448.7 1522.0,448.6 1523.0,448.8 1524.0,448.9 1525.0,448.8 1526.0,448.8 1527.0,448.9 1528.0,449.0 1529.0,448.9 1530.0,448.7 1531.0,448.7 1532.0,448.7 1533.0,448.8 1534.0,449.0 1535.0,449.0 1535.0,450.0 1534.0,450.1 1533.0,450.1 1532.0,450.4 1531.0,450.1 1530.0,450.1 1529.0,450.3 1528.0,450.2 1527.0,450.3 1526.0,450.3 1525.0,450.1 1524.0,450.2 1523.0,450.2 1522.0,450.3 1521.0,450.0 1520.0,450.1 1519.0,450.0 1518.0,450.4 1517.0,450.3 1516.0,450.1 1515.0,450.3 1514.0,450.2 1513.0,450.1 1512.0,450.1 1511.0,450.2 1510.0,450.1 1509.0,450.1 1508.0,450.3 1507.0,450.1 1506.0,450.3 1505.0,450.4 1504.0,450.1 1503.0,450.0 1502.0,450.3 1501.0,450.3 1500.0,450.3 1499.0,450.2 1498.0,450.4 1497.0,450.3 1496.0,450.2 1495.0,450.4 1494.0,450.2" fill="#6464dc"/><path d="M146.500 385h7M150 381.5l-3.500 3.500 3.500 3.500" stroke="#000" stroke-width="1.250" fill="none"/><path d="M146.500 514h7M150 510.5l-3.500 3.500 3.500 3.500" stroke="#000" stroke-width="1.250" fill="none"/></svg><div style="left:15px;top:527px;width:1540px;height:146px;background:#000;"></div><div style="left:16px;top:528px;width:95px;height:143px;background:#e8e8e6;"></div><div style="left:112px;top:528px;width:32px;height:143px;background:#e8e8e6;"></div><div style="left:143px;top:528px;width:1px;height:143px;background:#dcdcda;"></div><div style="left:16px;top:528px;width:95px;height:15px;border-bottom:1px solid #8c8c8c;"></div><div style="left:16px;top:543px;width:95px;height:1px;background:#fbfbf9;"></div><div style="left:31px;top:528px;width:1px;height:15px;background:#9a9a9a;"></div><div style="left:32px;top:528px;width:1px;height:15px;background:#fbfbf9;"></div><svg style="left:18px;top:530px" width="12" height="12" viewBox="0 0 12 12" ><path d="M2.500 2.500l7 7M9.500 2.500l-7 7" stroke="#000" stroke-width="1.500"/></svg><span style="left:34px;top:530.3px;font-size:10.670px;">Audio Trac</span><svg style="left:95px;top:531px" width="13" height="8" viewBox="0 0 13 8" ><polygon points="0.800,0.800 12,0.800 6.400,6.800" fill="#000"/></svg><span style="left:19px;top:545.8px;font-size:10.670px;">Mono, 48000Hz</span><span style="left:19px;top:561.5px;font-size:10.670px;">24-bit PCM</span><div style="left:16px;top:577px;width:95px;height:1px;background:#8c8c8c;"></div><div style="left:16px;top:578px;width:95px;height:14px;background:#e8e8e6;border-top:1px solid #fbfbf9;"></div><div style="left:16px;top:592px;width:95px;height:1px;background:#8c8c8c;"></div><div style="left:16px;top:593px;width:95px;height:1px;background:#fbfbf9;"></div><div style="left:62px;top:578px;width:1.5px;height:14px;background:#8c8c8c;"></div><div style="left:63.5px;top:578px;width:1px;height:14px;background:#fbfbf9;"></div><span style="left:39.3px;top:580px;font-size:10.670px;transform:translateX(-50%);">Mute</span><span style="left:86.5px;top:580px;font-size:10.670px;transform:translateX(-50%);">Solo</span><svg style="left:29.5px;top:606px" width="73.5" height="12" viewBox="0 0 73.5 12" ><rect x="0" y="8" width="71.5" height="1" fill="#8e8e8c"/><rect x="0" y="9" width="71.5" height="1" fill="#f4f4f2"/><rect x="1.0" y="3" width="1" height="5" fill="#fbfbf9"/><rect x="2.0" y="3" width="1" height="5" fill="#b4b4b2"/><rect x="7.8" y="5" width="1" height="3" fill="#fbfbf9"/><rect x="8.8" y="5" width="1" height="3" fill="#b4b4b2"/><rect x="14.6" y="5" width="1" height="3" fill="#fbfbf9"/><rect x="15.6" y="5" width="1" height="3" fill="#b4b4b2"/><rect x="21.4" y="5" width="1" height="3" fill="#fbfbf9"/><rect x="22.4" y="5" width="1" height="3" fill="#b4b4b2"/><rect x="28.2" y="5" width="1" height="3" fill="#fbfbf9"/><rect x="29.2" y="5" width="1" height="3" fill="#b4b4b2"/><rect x="35.0" y="5" width="1" height="3" fill="#fbfbf9"/><rect x="36.0" y="5" width="1" height="3" fill="#b4b4b2"/><rect x="41.8" y="5" width="1" height="3" fill="#fbfbf9"/><rect x="42.8" y="5" width="1" height="3" fill="#b4b4b2"/><rect x="48.6" y="5" width="1" height="3" fill="#fbfbf9"/><rect x="49.6" y="5" width="1" height="3" fill="#b4b4b2"/><rect x="55.4" y="5" width="1" height="3" fill="#fbfbf9"/><rect x="56.4" y="5" width="1" height="3" fill="#b4b4b2"/><rect x="62.2" y="5" width="1" height="3" fill="#fbfbf9"/><rect x="63.2" y="5" width="1" height="3" fill="#b4b4b2"/><rect x="69.0" y="3" width="1" height="5" fill="#fbfbf9"/><rect x="70.0" y="3" width="1" height="5" fill="#b4b4b2"/></svg><svg style="left:57.3px;top:606px" width="12" height="15" viewBox="0 0 12 15" ><path d="M3 .800h6q2.500 1.200 2.500 3v4.600l-5.500 5.400-5.500-5.400v-4.600q0-1.800 2.500-3z" fill="url(#tg)" stroke="#4a4a62" stroke-width="1"/><path d="M3.700 4.200h4.600M3.700 6h4.600M3.700 7.800h4.600" stroke="#f6f6ff" stroke-width=".9"/></svg><div style="left:29px;top:602.5px;width:4px;height:1px;background:#000;"></div><div style="left:93px;top:602.5px;width:5px;height:1px;background:#000;"></div><div style="left:95px;top:600.5px;width:1px;height:5px;background:#000;"></div><svg style="left:29.5px;top:636.3px" width="73.5" height="12" viewBox="0 0 73.5 12" ><rect x="0" y="8" width="71.5" height="1" fill="#8e8e8c"/><rect x="0" y="9" width="71.5" height="1" fill="#f4f4f2"/><rect x="1.0" y="3" width="1" height="5" fill="#fbfbf9"/><rect x="2.0" y="3" width="1" height="5" fill="#b4b4b2"/><rect x="7.8" y="5" width="1" height="3" fill="#fbfbf9"/><rect x="8.8" y="5" width="1" height="3" fill="#b4b4b2"/><rect x="14.6" y="5" width="1" height="3" fill="#fbfbf9"/><rect x="15.6" y="5" width="1" height="3" fill="#b4b4b2"/><rect x="21.4" y="5" width="1" height="3" fill="#fbfbf9"/><rect x="22.4" y="5" width="1" height="3" fill="#b4b4b2"/><rect x="28.2" y="5" width="1" height="3" fill="#fbfbf9"/><rect x="29.2" y="5" width="1" height="3" fill="#b4b4b2"/><rect x="35.0" y="5" width="1" height="3" fill="#fbfbf9"/><rect x="36.0" y="5" width="1" height="3" fill="#b4b4b2"/><rect x="41.8" y="5" width="1" height="3" fill="#fbfbf9"/><rect x="42.8" y="5" width="1" height="3" fill="#b4b4b2"/><rect x="48.6" y="5" width="1" height="3" fill="#fbfbf9"/><rect x="49.6" y="5" width="1" height="3" fill="#b4b4b2"/><rect x="55.4" y="5" width="1" height="3" fill="#fbfbf9"/><rect x="56.4" y="5" width="1" height="3" fill="#b4b4b2"/><rect x="62.2" y="5" width="1" height="3" fill="#fbfbf9"/><rect x="63.2" y="5" width="1" height="3" fill="#b4b4b2"/><rect x="69.0" y="3" width="1" height="5" fill="#fbfbf9"/><rect x="70.0" y="3" width="1" height="5" fill="#b4b4b2"/></svg><svg style="left:57.3px;top:636.3px" width="12" height="15" viewBox="0 0 12 15" ><path d="M3 .800h6q2.500 1.200 2.500 3v4.600l-5.500 5.400-5.500-5.400v-4.600q0-1.800 2.500-3z" fill="url(#tg)" stroke="#4a4a62" stroke-width="1"/><path d="M3.700 4.200h4.600M3.700 6h4.600M3.700 7.800h4.600" stroke="#f6f6ff" stroke-width=".9"/></svg><span style="left:29.2px;top:627.3px;font-size:13.330px;">L</span><span style="left:91.5px;top:627.3px;font-size:13.330px;">R</span><div style="left:34px;top:653px;width:62px;height:18px;background:#e8e8e6;border:1px solid #fbfbf9;border-top-color:#9c9c9a;border-left-color:#b4b4b2;border-bottom:none;"></div><svg style="left:59px;top:659px" width="12" height="7" viewBox="0 0 12 7" ><polygon points="0.500,6.500 11.500,6.500 6,0.800" fill="#a8a8a8"/></svg><span style="left:0px;top:530px;font-size:12px;left:auto;right:1450.7px;font-weight:bold;">1.0</span><span style="left:0px;top:558.7px;font-size:12px;left:auto;right:1450.7px;">0.5</span><span style="left:0px;top:593.4px;font-size:12px;left:auto;right:1450.7px;font-weight:bold;">0.0</span><span style="left:0px;top:630px;font-size:12px;left:auto;right:1450.3px;letter-spacing:0.400px;">-0.5</span><span style="left:0px;top:657.2px;font-size:12px;left:auto;right:1450.3px;font-weight:bold;letter-spacing:0.400px;">-1.0</span><div style="left:140px;top:564px;width:3px;height:1px;background:#000;"></div><div style="left:140px;top:599.3px;width:3px;height:1px;background:#000;"></div><div style="left:140px;top:634.5px;width:3px;height:1px;background:#000;"></div><div style="left:138px;top:669.5px;width:4px;height:1px;background:#000;"></div><svg style="left:144px;top:528px" width="1409" height="143" viewBox="144 528 1409 143" shape-rendering="auto"><rect x="144" y="528" width="945" height="143" fill="#c0c0c0"/><rect x="1089" y="528" width="464" height="143" fill="#d6d6d6"/><rect x="1089" y="528" width="1" height="143" fill="#7e7e7e"/><polygon points="144.0,596.2 145.0,596.6 146.0,596.0 147.0,596.6 148.0,596.2 149.0,595.4 150.0,596.9 150.0,602.5 149.0,601.9 148.0,601.4 147.0,602.3 146.0,601.3 145.0,601.8 144.0,601.4" fill="#3232c8"/><polygon points="144.0,598.3 145.0,597.9 146.0,598.3 147.0,598.0 148.0,597.7 149.0,598.1 150.0,597.7 150.0,599.9 149.0,600.0 148.0,599.7 147.0,600.3 146.0,600.1 145.0,599.8 144.0,600.0" fill="#6464dc"/><polygon points="170.0,596.2 171.0,597.3 172.0,596.7 173.0,596.8 174.0,596.2 175.0,597.0 176.0,596.9 177.0,596.7 178.0,597.0 179.0,596.2 180.0,596.3 181.0,596.5 182.0,597.4 183.0,596.1 184.0,596.7 185.0,596.7 186.0,596.7 187.0,596.8 188.0,596.2 189.0,597.1 190.0,597.3 191.0,596.1 192.0,597.1 193.0,597.1 194.0,596.9 195.0,596.2 196.0,597.0 197.0,597.5 198.0,597.1 199.0,597.2 200.0,597.5 200.0,601.1 199.0,601.6 198.0,600.8 197.0,601.5 196.0,601.2 195.0,600.8 194.0,600.6 193.0,601.7 192.0,601.3 191.0,601.5 190.0,600.8 189.0,600.6 188.0,601.4 187.0,601.4 186.0,601.2 185.0,601.1 184.0,601.5 183.0,601.1 182.0,601.0 181.0,601.3 180.0,601.4 179.0,601.9 178.0,601.5 177.0,601.0 176.0,600.9 175.0,601.5 174.0,601.7 173.0,601.5 172.0,600.7 171.0,601.8 170.0,600.6" fill="#3232c8"/><polygon points="170.0,598.2 171.0,598.2 172.0,598.0 173.0,598.3 174.0,598.3 175.0,598.1 176.0,598.2 177.0,598.3 178.0,598.3 179.0,598.3 180.0,598.4 181.0,598.1 182.0,598.0 183.0,598.1 184.0,598.1 185.0,598.3 186.0,598.2 187.0,598.4 188.0,598.1 189.0,598.3 190.0,598.3 191.0,597.9 192.0,598.3 193.0,597.9 194.0,598.1 195.0,598.0 196.0,598.1 197.0,598.4 198.0,598.1 199.0,598.3 200.0,598.3 200.0,599.7 199.0,599.7 198.0,600.1 197.0,599.8 196.0,599.7 195.0,599.7 194.0,600.1 193.0,599.9 192.0,599.8 191.0,599.8 190.0,599.5 189.0,599.6 188.0,599.6 187.0,599.9 186.0,599.7 185.0,600.0 184.0,599.8 183.0,599.8 182.0,599.6 181.0,599.6 180.0,600.1 179.0,600.1 178.0,599.6 177.0,599.8 176.0,599.7 175.0,600.0 174.0,599.8 173.0,599.6 172.0,600.1 171.0,599.6 170.0,600.1" fill="#6464dc"/><polygon points="200.0,596.5 201.0,596.6 202.0,596.5 203.0,595.2 204.0,595.2 205.0,595.9 206.0,595.8 207.0,595.1 208.0,595.1 209.0,596.8 210.0,596.0 211.0,596.6 212.0,596.2 213.0,595.2 214.0,596.6 215.0,596.1 216.0,596.1 217.0,595.1 218.0,595.4 219.0,595.8 220.0,595.1 221.0,596.9 222.0,596.2 223.0,595.2 224.0,595.3 225.0,596.6 226.0,596.1 227.0,595.5 228.0,595.1 229.0,595.5 230.0,595.2 231.0,595.9 232.0,595.4 233.0,595.4 234.0,596.9 235.0,596.7 236.0,595.9 237.0,595.4 238.0,595.6 239.0,596.5 240.0,596.8 241.0,595.9 242.0,595.1 243.0,595.3 244.0,596.0 245.0,595.7 246.0,595.5 247.0,596.1 248.0,596.9 249.0,595.7 250.0,595.9 251.0,595.2 252.0,595.6 253.0,595.6 254.0,596.9 255.0,596.4 256.0,595.1 257.0,596.2 258.0,596.2 259.0,595.9 260.0,595.7 261.0,596.2 262.0,596.3 263.0,596.9 264.0,595.3 265.0,596.2 266.0,595.5 267.0,596.8 268.0,595.2 269.0,596.9 270.0,596.8 271.0,595.9 272.0,596.6 273.0,596.4 274.0,595.2 275.0,596.9 276.0,596.1 277.0,595.5 278.0,595.9 279.0,595.2 280.0,595.8 281.0,596.6 282.0,595.9 283.0,596.6 284.0,596.2 285.0,595.2 286.0,596.1 287.0,595.1 288.0,596.0 289.0,595.4 290.0,595.8 291.0,595.1 292.0,596.3 293.0,595.2 294.0,596.7 295.0,595.2 296.0,595.5 297.0,596.5 298.0,595.4 299.0,596.1 300.0,595.9 301.0,595.4 302.0,596.8 303.0,595.5 304.0,596.7 305.0,596.0 306.0,596.8 307.0,595.7 308.0,594.7 309.0,596.2 310.0,596.8 311.0,596.9 312.0,596.8 313.0,596.1 314.0,596.6 315.0,596.0 316.0,595.9 317.0,596.0 318.0,595.4 319.0,596.9 320.0,596.0 321.0,596.0 322.0,595.5 323.0,595.6 324.0,595.8 325.0,595.5 326.0,596.6 327.0,595.6 328.0,595.5 329.0,595.7 330.0,596.8 331.0,595.5 332.0,595.6 333.0,595.2 334.0,595.2 335.0,595.4 336.0,595.7 337.0,596.1 338.0,595.7 339.0,594.9 339.0,601.6 338.0,602.8 337.0,602.0 336.0,602.4 335.0,602.5 334.0,602.4 333.0,602.2 332.0,602.2 331.0,602.9 330.0,601.7 329.0,602.1 328.0,602.1 327.0,601.1 326.0,602.1 325.0,602.2 324.0,603.3 323.0,601.7 322.0,602.5 321.0,602.0 320.0,602.4 319.0,602.3 318.0,602.9 317.0,603.3 316.0,602.2 315.0,602.7 314.0,602.1 313.0,602.8 312.0,602.1 311.0,601.5 310.0,603.0 309.0,602.7 308.0,601.4 307.0,601.6 306.0,601.1 305.0,602.7 304.0,601.9 303.0,601.9 302.0,602.5 301.0,601.7 300.0,602.0 299.0,601.4 298.0,602.5 297.0,602.5 296.0,602.2 295.0,602.3 294.0,602.8 293.0,602.5 292.0,602.0 291.0,601.6 290.0,601.3 289.0,602.5 288.0,602.7 287.0,602.7 286.0,601.2 285.0,602.3 284.0,601.8 283.0,601.7 282.0,601.4 281.0,602.4 280.0,602.9 279.0,601.5 278.0,602.1 277.0,601.1 276.0,602.8 275.0,602.9 274.0,602.3 273.0,601.6 272.0,602.5 271.0,601.2 270.0,602.4 269.0,601.7 268.0,601.5 267.0,602.6 266.0,601.6 265.0,601.2 264.0,602.7 263.0,601.2 262.0,601.9 261.0,602.8 260.0,602.3 259.0,602.3 258.0,602.1 257.0,602.1 256.0,602.5 255.0,602.8 254.0,601.7 253.0,601.5 252.0,601.8 251.0,601.6 250.0,601.7 249.0,601.4 248.0,602.7 247.0,601.6 246.0,601.2 245.0,601.6 244.0,601.7 243.0,602.3 242.0,602.5 241.0,603.6 240.0,602.3 239.0,602.2 238.0,601.4 237.0,602.8 236.0,602.7 235.0,601.4 234.0,601.2 233.0,602.1 232.0,602.5 231.0,602.3 230.0,602.6 229.0,601.9 228.0,602.6 227.0,601.4 226.0,602.4 225.0,601.9 224.0,601.7 223.0,601.3 222.0,601.3 221.0,601.9 220.0,602.3 219.0,601.9 218.0,602.6 217.0,601.4 216.0,601.4 215.0,602.0 214.0,602.1 213.0,602.3 212.0,602.8 211.0,602.7 210.0,601.8 209.0,601.6 208.0,601.4 207.0,601.1 206.0,603.4 205.0,601.4 204.0,602.9 203.0,602.8 202.0,602.8 201.0,602.4 200.0,602.9" fill="#3232c8"/><polygon points="200.0,597.5 201.0,597.8 202.0,597.5 203.0,597.2 204.0,598.0 205.0,597.6 206.0,597.7 207.0,597.8 208.0,597.3 209.0,597.2 210.0,597.4 211.0,597.7 212.0,597.3 213.0,597.9 214.0,597.6 215.0,597.6 216.0,597.9 217.0,597.6 218.0,597.7 219.0,597.7 220.0,597.9 221.0,597.5 222.0,597.9 223.0,598.0 224.0,597.3 225.0,597.8 226.0,597.5 227.0,597.4 228.0,597.4 229.0,597.3 230.0,597.9 231.0,597.6 232.0,597.9 233.0,597.4 234.0,597.8 235.0,597.8 236.0,597.8 237.0,597.4 238.0,597.6 239.0,597.3 240.0,597.5 241.0,597.5 242.0,597.5 243.0,597.7 244.0,597.7 245.0,597.8 246.0,597.8 247.0,597.3 248.0,597.5 249.0,597.6 250.0,597.5 251.0,597.9 252.0,597.3 253.0,597.6 254.0,597.8 255.0,597.4 256.0,597.6 257.0,597.4 258.0,597.9 259.0,597.2 260.0,597.3 261.0,597.9 262.0,597.6 263.0,598.0 264.0,598.0 265.0,597.8 266.0,597.9 267.0,597.2 268.0,597.6 269.0,597.6 270.0,597.4 271.0,597.8 272.0,597.6 273.0,597.4 274.0,597.5 275.0,597.7 276.0,598.0 277.0,597.3 278.0,597.2 279.0,597.2 280.0,597.9 281.0,597.8 282.0,597.8 283.0,597.3 284.0,597.7 285.0,597.4 286.0,597.4 287.0,597.6 288.0,597.8 289.0,597.2 290.0,597.5 291.0,597.4 292.0,598.0 293.0,597.5 294.0,597.4 295.0,597.7 296.0,597.7 297.0,597.3 298.0,597.6 299.0,597.5 300.0,597.7 301.0,598.0 302.0,597.6 303.0,597.5 304.0,597.4 305.0,597.7 306.0,597.4 307.0,597.4 308.0,597.9 309.0,597.9 310.0,597.4 311.0,597.3 312.0,597.4 313.0,597.9 314.0,597.3 315.0,597.9 316.0,597.9 317.0,597.5 318.0,597.4 319.0,598.0 320.0,597.4 321.0,597.9 322.0,597.7 323.0,597.8 324.0,597.4 325.0,597.6 326.0,598.0 327.0,597.3 328.0,597.7 329.0,597.3 330.0,597.9 331.0,597.9 332.0,597.8 333.0,597.7 334.0,598.0 335.0,597.5 336.0,597.4 337.0,597.5 338.0,597.6 339.0,597.3 339.0,600.3 338.0,600.1 337.0,600.7 336.0,600.3 335.0,600.2 334.0,600.2 333.0,600.4 332.0,600.0 331.0,600.4 330.0,600.5 329.0,600.1 328.0,600.5 327.0,600.6 326.0,600.5 325.0,600.6 324.0,600.2 323.0,600.6 322.0,600.2 321.0,600.4 320.0,600.5 319.0,600.5 318.0,600.1 317.0,600.1 316.0,600.1 315.0,600.1 314.0,600.1 313.0,600.5 312.0,600.1 311.0,600.0 310.0,600.2 309.0,600.2 308.0,600.7 307.0,600.6 306.0,600.5 305.0,600.0 304.0,600.3 303.0,600.2 302.0,600.7 301.0,600.0 300.0,600.8 299.0,600.0 298.0,600.8 297.0,600.2 296.0,600.3 295.0,600.6 294.0,600.3 293.0,600.7 292.0,600.7 291.0,600.5 290.0,600.2 289.0,600.7 288.0,600.1 287.0,600.7 286.0,600.6 285.0,600.4 284.0,600.1 283.0,600.6 282.0,600.6 281.0,600.3 280.0,600.4 279.0,600.7 278.0,600.6 277.0,600.1 276.0,600.3 275.0,600.0 274.0,600.5 273.0,600.1 272.0,600.6 271.0,600.5 270.0,600.1 269.0,600.3 268.0,600.3 267.0,600.7 266.0,600.0 265.0,600.3 264.0,600.6 263.0,600.4 262.0,600.4 261.0,600.5 260.0,600.3 259.0,600.4 258.0,600.4 257.0,600.2 256.0,600.4 255.0,600.1 254.0,600.1 253.0,600.2 252.0,600.7 251.0,600.5 250.0,600.4 249.0,600.5 248.0,600.5 247.0,600.5 246.0,600.0 245.0,600.7 244.0,600.6 243.0,600.2 242.0,600.3 241.0,600.8 240.0,600.4 239.0,600.2 238.0,600.4 237.0,600.4 236.0,600.6 235.0,600.3 234.0,600.1 233.0,600.3 232.0,600.1 231.0,600.5 230.0,600.7 229.0,600.5 228.0,600.1 227.0,600.2 226.0,600.8 225.0,600.5 224.0,600.6 223.0,600.0 222.0,600.2 221.0,600.7 220.0,600.5 219.0,600.1 218.0,600.7 217.0,600.7 216.0,600.8 215.0,600.5 214.0,600.3 213.0,600.6 212.0,600.6 211.0,600.4 210.0,600.6 209.0,600.3 208.0,600.7 207.0,600.0 206.0,600.5 205.0,600.6 204.0,600.7 203.0,600.0 202.0,600.8 201.0,600.7 200.0,600.2" fill="#6464dc"/><polygon points="255.0,594.2 256.0,595.3 257.0,594.5 258.0,594.8 259.0,594.3 260.0,594.9 261.0,594.3 262.0,595.2 263.0,594.2 264.0,594.9 265.0,595.2 266.0,595.0 267.0,594.6 268.0,595.4 269.0,594.9 270.0,595.4 270.0,602.8 269.0,603.5 268.0,602.9 267.0,603.5 266.0,603.8 265.0,602.8 264.0,602.6 263.0,603.6 262.0,603.5 261.0,603.5 260.0,603.2 259.0,603.7 258.0,603.5 257.0,603.1 256.0,603.7 255.0,603.3" fill="#3232c8"/><polygon points="255.0,597.2 256.0,596.7 257.0,596.7 258.0,597.3 259.0,596.8 260.0,596.9 261.0,596.9 262.0,597.3 263.0,596.8 264.0,597.1 265.0,596.8 266.0,597.0 267.0,596.8 268.0,596.9 269.0,597.1 270.0,596.9 270.0,601.2 269.0,600.7 268.0,601.2 267.0,600.8 266.0,600.9 265.0,600.8 264.0,601.1 263.0,601.2 262.0,601.2 261.0,601.2 260.0,600.9 259.0,601.0 258.0,601.2 257.0,600.9 256.0,601.0 255.0,600.9" fill="#6464dc"/><polygon points="298.0,594.9 299.0,594.5 300.0,595.1 301.0,594.7 302.0,594.5 303.0,595.0 304.0,594.7 305.0,594.7 306.0,594.6 307.0,595.6 308.0,595.4 309.0,594.4 310.0,594.7 311.0,595.3 312.0,594.7 312.0,603.1 311.0,603.6 310.0,602.5 309.0,603.3 308.0,603.5 307.0,603.5 306.0,602.9 305.0,603.1 304.0,602.9 303.0,602.9 302.0,603.6 301.0,603.0 300.0,603.1 299.0,602.6 298.0,603.5" fill="#3232c8"/><polygon points="298.0,597.3 299.0,597.2 300.0,597.3 301.0,597.0 302.0,597.2 303.0,597.3 304.0,597.0 305.0,597.0 306.0,597.0 307.0,597.1 308.0,597.4 309.0,597.3 310.0,597.4 311.0,597.0 312.0,597.5 312.0,600.9 311.0,600.9 310.0,601.0 309.0,600.9 308.0,600.6 307.0,600.7 306.0,600.7 305.0,600.7 304.0,600.8 303.0,600.9 302.0,600.7 301.0,600.7 300.0,601.0 299.0,600.8 298.0,600.8" fill="#6464dc"/><rect x="151.5" y="528" width="1" height="143" fill="#3232c8"/><rect x="152.5" y="528" width="2.5" height="143" fill="#a8a8ee"/><rect x="153.3" y="528" width="0.8" height="143" fill="#3232c8"/><rect x="155" y="528" width="1.1" height="143" fill="#3232c8"/><rect x="148" y="528" width="3" height="1" fill="#3232c8"/><rect x="155" y="528" width="6.5" height="1" fill="#3232c8"/><path d="M161 528 L161.800 545 L163 565 L164.500 580 L166 590 L168 595.500 L171 598.500" stroke="#3232c8" stroke-width="1.300" fill="none"/><rect x="156" y="599" width="13" height="1" fill="#000"/><rect x="172.8" y="556" width="1.2" height="105" fill="#3232c8"/><rect x="174.3" y="570" width="1.2" height="70" fill="#3232c8"/><rect x="176.3" y="561" width="1.3" height="49" fill="#3232c8"/><rect x="178.2" y="590" width="1.1" height="25" fill="#3232c8"/><rect x="185.6" y="535" width="1.3" height="132" fill="#3232c8"/><rect x="187.3" y="560" width="1.0" height="80" fill="#3232c8"/><rect x="189" y="531" width="1.3" height="124" fill="#3232c8"/><rect x="190.5" y="578" width="1.0" height="47" fill="#3232c8"/><rect x="193.5" y="586" width="1.2" height="19" fill="#3232c8"/><rect x="237" y="599" width="1" height="12.5" fill="#3232c8"/><rect x="277" y="587" width="1" height="20" fill="#3232c8"/><rect x="339" y="528" width="750" height="143" fill="#6464dc"/><polygon points="339.0,528.0 339.0,553.0 340.0,554.1 341.0,552.4 342.0,553.0 343.0,549.2 344.0,548.3 345.0,550.9 346.0,550.0 347.0,549.3 348.0,550.3 349.0,548.8 350.0,548.9 351.0,549.9 352.0,550.0 353.0,550.3 354.0,549.2 355.0,547.9 356.0,547.8 357.0,550.8 358.0,549.2 359.0,548.9 360.0,548.5 361.0,549.9 362.0,549.5 363.0,549.1 364.0,549.1 365.0,550.2 366.0,550.0 367.0,551.1 368.0,554.9 369.0,557.5 370.0,556.9 371.0,557.3 372.0,555.8 373.0,550.3 374.0,548.3 375.0,550.4 376.0,548.4 377.0,549.7 378.0,549.4 379.0,548.6 380.0,549.1 381.0,550.9 382.0,553.8 383.0,553.9 384.0,553.0 385.0,553.5 386.0,548.2 387.0,548.9 388.0,549.3 388.0,528.0" fill="#3232c8"/><polygon points="339.0,671.0 339.0,645.9 340.0,645.2 341.0,646.3 342.0,646.3 343.0,650.2 344.0,650.4 345.0,647.7 346.0,649.3 347.0,650.5 348.0,649.1 349.0,649.3 350.0,649.1 351.0,648.6 352.0,649.7 353.0,649.2 354.0,650.6 355.0,651.4 356.0,651.5 357.0,647.2 358.0,650.6 359.0,650.9 360.0,650.3 361.0,650.0 362.0,649.7 363.0,650.6 364.0,650.7 365.0,648.5 366.0,649.2 367.0,648.1 368.0,644.3 369.0,642.2 370.0,641.2 371.0,641.8 372.0,642.4 373.0,648.1 374.0,650.4 375.0,649.2 376.0,649.9 377.0,649.4 378.0,650.0 379.0,651.2 380.0,650.6 381.0,647.2 382.0,646.0 383.0,645.8 384.0,646.7 385.0,646.4 386.0,651.3 387.0,649.3 388.0,649.2 388.0,671.0" fill="#3232c8"/><polygon points="1013.5,528.0 1013.5,562.8 1014.5,564.2 1015.5,542.8 1016.5,542.7 1017.5,542.7 1018.5,545.0 1019.5,560.2 1020.5,562.1 1021.5,560.3 1022.5,542.9 1023.5,542.6 1024.5,540.7 1025.5,541.3 1026.5,541.5 1027.5,542.7 1028.5,541.0 1029.5,542.9 1030.5,541.7 1031.5,541.8 1032.5,541.2 1033.5,557.6 1034.5,557.5 1035.5,559.5 1036.5,558.5 1037.5,557.1 1038.5,559.4 1039.5,557.9 1040.5,559.4 1041.5,557.6 1042.5,557.5 1043.5,557.4 1044.5,559.1 1045.5,558.9 1046.5,557.4 1047.5,556.6 1048.5,557.0 1049.5,557.4 1050.5,558.0 1051.5,558.3 1052.5,557.2 1053.5,558.2 1054.5,558.1 1055.5,556.8 1056.5,558.4 1057.5,557.9 1058.5,540.5 1059.5,541.4 1060.5,542.5 1061.5,540.3 1062.5,541.3 1063.5,541.2 1064.5,541.6 1065.5,542.3 1066.5,541.1 1067.5,541.4 1068.5,542.4 1069.5,540.4 1070.5,541.8 1071.5,542.6 1072.5,542.9 1073.5,542.5 1074.5,540.7 1075.5,540.8 1076.5,541.5 1077.5,540.1 1078.5,541.1 1079.5,567.4 1080.5,567.1 1081.5,568.7 1082.5,567.1 1083.5,530.7 1084.5,531.2 1085.5,566.2 1086.5,565.1 1087.5,530.5 1088.5,530.7 1089.0,528.0" fill="#3232c8"/><polygon points="1013.5,671.0 1013.5,636.6 1014.5,634.8 1015.5,655.7 1016.5,656.9 1017.5,656.0 1018.5,653.8 1019.5,638.1 1020.5,637.2 1021.5,638.3 1022.5,655.3 1023.5,655.9 1024.5,658.1 1025.5,657.4 1026.5,658.1 1027.5,657.2 1028.5,658.3 1029.5,656.9 1030.5,656.4 1031.5,656.3 1032.5,657.9 1033.5,641.7 1034.5,642.3 1035.5,639.1 1036.5,640.4 1037.5,642.4 1038.5,638.9 1039.5,640.6 1040.5,640.5 1041.5,641.6 1042.5,641.4 1043.5,642.4 1044.5,640.0 1045.5,640.8 1046.5,641.6 1047.5,642.6 1048.5,642.2 1049.5,641.1 1050.5,641.5 1051.5,640.8 1052.5,641.3 1053.5,641.7 1054.5,641.1 1055.5,641.3 1056.5,639.7 1057.5,641.2 1058.5,658.2 1059.5,658.2 1060.5,656.3 1061.5,657.8 1062.5,656.9 1063.5,658.7 1064.5,657.5 1065.5,656.7 1066.5,658.1 1067.5,657.1 1068.5,656.8 1069.5,659.5 1070.5,657.7 1071.5,656.6 1072.5,657.0 1073.5,657.3 1074.5,658.4 1075.5,658.3 1076.5,657.2 1077.5,658.7 1078.5,657.6 1079.5,631.0 1080.5,632.7 1081.5,630.1 1082.5,632.3 1083.5,668.9 1084.5,668.0 1085.5,632.2 1086.5,634.4 1087.5,668.3 1088.5,668.8 1089.0,671.0" fill="#3232c8"/><rect x="339" y="528" width="750" height="0.7" fill="#3232c8"/><rect x="339" y="670.3" width="750" height="0.7" fill="#3232c8"/><path d="M146.500 535h7M150 531.5l-3.500 3.500 3.500 3.500" stroke="#000" stroke-width="1.250" fill="none"/><path d="M146.500 664h7M150 660.5l-3.500 3.500 3.500 3.500" stroke="#000" stroke-width="1.250" fill="none"/></svg><div style="left:11px;top:679px;width:137px;height:14px;background:#e8e8e6;"></div><div style="left:148px;top:679px;width:1411px;height:14px;background:#c6c6ca;"></div><div style="left:1559px;top:679px;width:13px;height:14px;background:#e8e8e6;"></div><div style="left:150px;top:682.5px;width:1135px;height:6.5px;background:#7c8282;border-radius:3.300px;"></div><div style="left:11px;top:693px;width:1561px;height:1px;background:#a4a4a2;"></div><div style="left:11px;top:748px;width:1561px;height:1px;background:#a4a4a2;"></div><div style="left:12px;top:694px;width:10px;height:54px;border:1px solid #a8a8a6;border-top-color:#fff;border-left-color:#fff;"><div class="grab" style="left:2px;top:2px;width:4.500px;height:48px"></div></div><span style="left:23px;top:697.5px;font-size:13px;color:#262626;">Project Rate (Hz):</span><span style="left:146px;top:697.5px;font-size:13px;color:#262626;">Snap To:</span><span style="left:233.5px;top:697.5px;font-size:13px;color:#262626;">Selection Start:</span><span style="left:420.7px;top:697.5px;font-size:13px;color:#262626;">End</span><span style="left:475px;top:697.5px;font-size:13px;color:#262626;">Length</span><span style="left:568px;top:697.5px;font-size:13px;color:#262626;">Audio Position:</span><div style="left:24.5px;top:718.5px;width:77px;height:28.5px;border:1px solid #bcbcba;border-radius:4px;background:linear-gradient(#efefed,#dcdcda);"></div><div style="left:25.5px;top:719.5px;width:45px;height:26.5px;background:#fff;border-radius:3px 0 0 3px;border-right:1px solid #c8c8c6;"></div><div style="left:33.300px;top:719px;width:33.800px;height:27px;overflow:hidden"><span class="dvc" style="left:0;top:6.500px;font-size:13.400px;color:#1a1a1a">48000</span></div><svg style="left:80.5px;top:730.5px" width="10" height="6" viewBox="0 0 10 6" ><polygon points="0.300,0 9.700,0 5,5.300" fill="#2c2c2c"/></svg><div style="left:139px;top:717px;width:1px;height:27px;background:#d4d4d2;"></div><div style="left:140px;top:717px;width:1px;height:27px;background:#f6f6f4;"></div><div class="combo" style="left:147.5px;top:718.5px;width:78px;height:28px;"></div><span style="left:156px;top:725px;font-size:14px;color:#2a2a2a;">Off</span><svg style="left:206px;top:730.5px" width="10" height="6" viewBox="0 0 10 6" ><polygon points="0.300,0 9.700,0 5,5.300" fill="#2c2c2c"/></svg><svg style="left:399px;top:696.7px" width="16" height="16" viewBox="0 0 16 16" ><circle cx="8" cy="8" r="7.300" fill="#f4f4f2" stroke="#929290" stroke-width="1"/><circle cx="8" cy="8" r="3" fill="#2a2a2a"/></svg><svg style="left:452.5px;top:696.7px" width="16" height="16" viewBox="0 0 16 16" ><circle cx="8" cy="8" r="7.300" fill="#f4f4f2" stroke="#929290" stroke-width="1"/></svg><div style="left:234.3px;top:720.5px;width:155px;height:23px;background:#fff;border:1px solid #b8b8b6;border-radius:4px;"></div><div style="left:237.0px;top:723.3px;width:142px;height:17.5px;background:#d6d6d6;"></div><div style="left:378.8px;top:723.3px;width:8px;height:17.5px;background:#c8c8c8;border-left:1px solid #f0f0f0;border-top:1px solid #f0f0f0;border-right:1px solid #8a8a8a;border-bottom:1px solid #8a8a8a;"></div><svg style="left:379.0px;top:729.5px" width="8" height="5" viewBox="0 0 8 5" ><polygon points="0.300,0.300 7.300,0.300 3.800,4.300" fill="#000"/></svg><span style="left:239px;top:724.7px;font-size:14.300px;color:#22229c;width:8px;text-align:center;display:block;">0</span><span style="left:249px;top:724.7px;font-size:14.300px;color:#22229c;width:8px;text-align:center;display:block;">0</span><span style="left:262px;top:724.7px;font-size:14.300px;color:#000;width:8px;text-align:center;display:block;">h</span><span style="left:274px;top:724.7px;font-size:14.300px;color:#22229c;width:8px;text-align:center;display:block;">0</span><span style="left:284px;top:724.7px;font-size:14.300px;color:#22229c;width:8px;text-align:center;display:block;">0</span><span style="left:297px;top:724.7px;font-size:14.300px;color:#000;width:12px;text-align:center;display:block;">m</span><span style="left:313px;top:724.7px;font-size:14.300px;color:#22229c;width:8px;text-align:center;display:block;">0</span><span style="left:323px;top:724.7px;font-size:14.300px;color:#22229c;width:8px;text-align:center;display:block;">0</span><span style="left:330px;top:724.7px;font-size:14.300px;color:#22229c;width:8px;text-align:center;display:block;">.</span><span style="left:336px;top:724.7px;font-size:14.300px;color:#22229c;width:8px;text-align:center;display:block;">0</span><span style="left:346px;top:724.7px;font-size:14.300px;color:#22229c;width:8px;text-align:center;display:block;">0</span><span style="left:357px;top:724.7px;font-size:14.300px;color:#22229c;width:8px;text-align:center;display:block;">0</span><span style="left:369px;top:724.7px;font-size:14.300px;color:#000;width:8px;text-align:center;display:block;">s</span><div style="left:398.8px;top:720.5px;width:155px;height:23px;background:#fff;border:1px solid #b8b8b6;border-radius:4px;"></div><div style="left:401.5px;top:723.3px;width:142px;height:17.5px;background:#d6d6d6;"></div><div style="left:543.3px;top:723.3px;width:8px;height:17.5px;background:#c8c8c8;border-left:1px solid #f0f0f0;border-top:1px solid #f0f0f0;border-right:1px solid #8a8a8a;border-bottom:1px solid #8a8a8a;"></div><svg style="left:543.5px;top:729.5px" width="8" height="5" viewBox="0 0 8 5" ><polygon points="0.300,0.300 7.300,0.300 3.800,4.300" fill="#000"/></svg><span style="left:403px;top:724.7px;font-size:14.300px;color:#22229c;width:8px;text-align:center;display:block;">0</span><span style="left:413px;top:724.7px;font-size:14.300px;color:#22229c;width:8px;text-align:center;display:block;">0</span><span style="left:426px;top:724.7px;font-size:14.300px;color:#000;width:8px;text-align:center;display:block;">h</span><span style="left:438px;top:724.7px;font-size:14.300px;color:#22229c;width:8px;text-align:center;display:block;">0</span><span style="left:448px;top:724.7px;font-size:14.300px;color:#22229c;width:8px;text-align:center;display:block;">0</span><span style="left:461px;top:724.7px;font-size:14.300px;color:#000;width:12px;text-align:center;display:block;">m</span><span style="left:477px;top:724.7px;font-size:14.300px;color:#22229c;width:8px;text-align:center;display:block;">0</span><span style="left:488px;top:724.7px;font-size:14.300px;color:#22229c;width:8px;text-align:center;display:block;">0</span><span style="left:495px;top:724.7px;font-size:14.300px;color:#22229c;width:8px;text-align:center;display:block;">.</span><span style="left:500px;top:724.7px;font-size:14.300px;color:#22229c;width:8px;text-align:center;display:block;">0</span><span style="left:511px;top:724.7px;font-size:14.300px;color:#22229c;width:8px;text-align:center;display:block;">0</span><span style="left:521px;top:724.7px;font-size:14.300px;color:#22229c;width:8px;text-align:center;display:block;">0</span><span style="left:534px;top:724.7px;font-size:14.300px;color:#000;width:8px;text-align:center;display:block;">s</span><div style="left:569.3px;top:720.5px;width:155px;height:23px;background:#fff;border:1px solid #b8b8b6;border-radius:4px;"></div><div style="left:572.0px;top:723.3px;width:142px;height:17.5px;background:#d6d6d6;"></div><div style="left:713.8px;top:723.3px;width:8px;height:17.5px;background:#c8c8c8;border-left:1px solid #f0f0f0;border-top:1px solid #f0f0f0;border-right:1px solid #8a8a8a;border-bottom:1px solid #8a8a8a;"></div><svg style="left:714.0px;top:729.5px" width="8" height="5" viewBox="0 0 8 5" ><polygon points="0.300,0.300 7.300,0.300 3.800,4.300" fill="#000"/></svg><span style="left:574px;top:724.7px;font-size:14.300px;color:#22229c;width:8px;text-align:center;display:block;">0</span><span style="left:584px;top:724.7px;font-size:14.300px;color:#22229c;width:8px;text-align:center;display:block;">0</span><span style="left:597px;top:724.7px;font-size:14.300px;color:#000;width:8px;text-align:center;display:block;">h</span><span style="left:608px;top:724.7px;font-size:14.300px;color:#22229c;width:8px;text-align:center;display:block;">0</span><span style="left:618px;top:724.7px;font-size:14.300px;color:#22229c;width:8px;text-align:center;display:block;">0</span><span style="left:632px;top:724.7px;font-size:14.300px;color:#000;width:12px;text-align:center;display:block;">m</span><span style="left:648px;top:724.7px;font-size:14.300px;color:#22229c;width:8px;text-align:center;display:block;">0</span><span style="left:658px;top:724.7px;font-size:14.300px;color:#22229c;width:8px;text-align:center;display:block;">0</span><span style="left:665px;top:724.7px;font-size:14.300px;color:#22229c;width:8px;text-align:center;display:block;">.</span><span style="left:671px;top:724.7px;font-size:14.300px;color:#22229c;width:8px;text-align:center;display:block;">0</span><span style="left:681px;top:724.7px;font-size:14.300px;color:#22229c;width:8px;text-align:center;display:block;">0</span><span style="left:692px;top:724.7px;font-size:14.300px;color:#22229c;width:8px;text-align:center;display:block;">0</span><span style="left:704px;top:724.7px;font-size:14.300px;color:#000;width:8px;text-align:center;display:block;">s</span><div style="left:561.5px;top:717px;width:1px;height:27px;background:#d4d4d2;"></div><div style="left:562.5px;top:717px;width:1px;height:27px;background:#f6f6f4;"></div><span class="dv" style="left:16px;top:756px;font-size:13.200px;color:#2a2a2a;letter-spacing:-0.150px;">Stopped.</span><svg style="left:578px;top:254px" width="24" height="30" viewBox="578 254 24 30"><path d="M583.400 258 L583.400 276 L588.300 276 L591.300 279 L593.300 277.600 L593.300 273.600 L596.200 270.700 Z" fill="#4c4c3c" stroke="#fff" stroke-width="1.300" stroke-linejoin="miter"/></svg><svg style="left:14px;top:9px" width="22" height="21" viewBox="0 0 22 21" ><defs><radialGradient id="ag" cx="50%" cy="35%" r="65%"><stop offset="0" stop-color="#ffd800"/><stop offset=".6" stop-color="#ffb000"/><stop offset="1" stop-color="#f08000"/></radialGradient></defs>
<path d="M3.500 12 Q3.500 2.800 11 2.800 Q18.500 2.800 18.500 12" fill="none" stroke="#1a1a5e" stroke-width="1.800"/>
<ellipse cx="3.500" cy="13" rx="2.600" ry="5.200" fill="#1818a8"/><ellipse cx="18.500" cy="13" rx="2.600" ry="5.200" fill="#1818a8"/>
<path d="M6 19 L6 13 Q6 7.800 11 7.800 Q16 7.800 16 13 L16 19 Z" fill="url(#ag)"/>
<rect x="6.500" y="13.500" width="9" height="1.800" fill="#f05010"/><rect x="7" y="16.300" width="8" height=".9" fill="#f89020"/></svg><svg style="left:42px;top:13px" width="15" height="15" viewBox="0 0 15 15" ><path d="M9.500 1.200 L13.500 5.200 L10 8.700 L6 4.700 Z" fill="#f4f4f8"/><path d="M3.800 4.200 L10.800 11.200" stroke="#f4f4f8" stroke-width="1.700"/><path d="M7 8 L1.500 13.500" stroke="#f4f4f8" stroke-width="1.600"/></svg><svg style="left:1503px;top:16px" width="16" height="10" viewBox="0 0 16 10" ><path d="M1.500 2.500 L7.300 8.200 L13.500 2.500" stroke="#f4f4f8" stroke-width="1.400" fill="none"/></svg><svg style="left:1527px;top:16px" width="16" height="10" viewBox="0 0 16 10" ><path d="M1.500 7.700 L7.300 2.200 L13 7.700" stroke="#f4f4f8" stroke-width="1.400" fill="none"/></svg><svg style="left:1548px;top:11px" width="20" height="20" viewBox="0 0 20 20" ><circle cx="10" cy="10" r="9.100" fill="#fcfcfc"/><path d="M5.800 5.800l8.400 8.400M14.200 5.800l-8.400 8.400" stroke="#3a3a44" stroke-width="1.300"/></svg>
</body></html>
